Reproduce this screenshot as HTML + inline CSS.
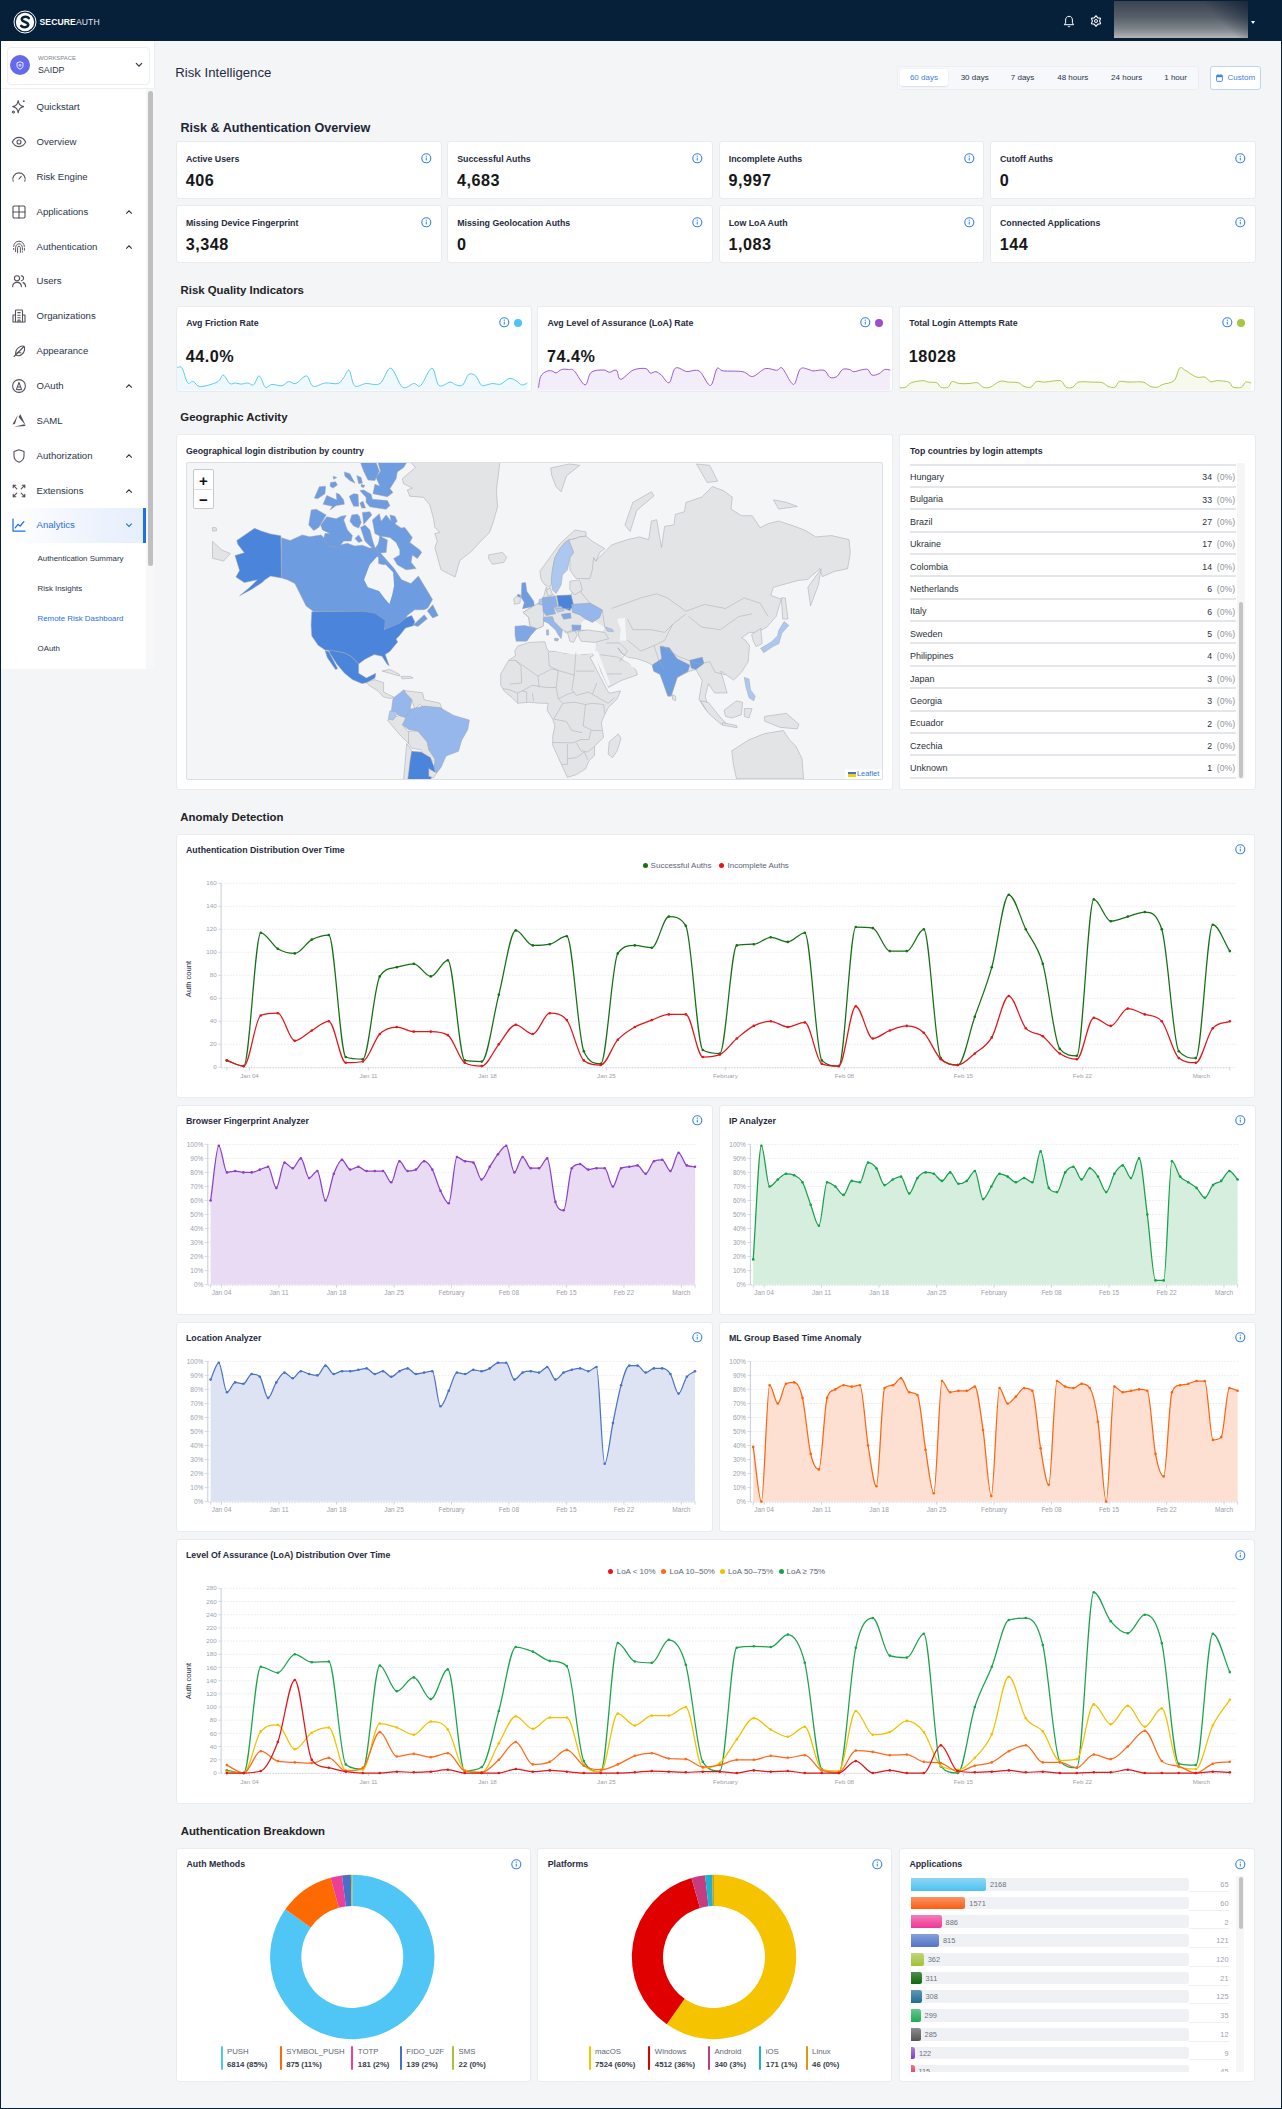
<!DOCTYPE html><html><head><meta charset="utf-8"><style>
*{box-sizing:border-box;margin:0;padding:0}
html,body{width:1282px;height:2109px;overflow:hidden}
body{font-family:"Liberation Sans",sans-serif;background:#06203a;position:relative;color:#1e2a3b}
.a{position:absolute;white-space:nowrap}
svg{position:absolute;overflow:visible}
.card{position:absolute;background:#fff;border:1px solid #e9ebee;border-radius:3px}
.ct{position:absolute;font-size:8.8px;font-weight:bold;color:#1f2b3d;line-height:10px;white-space:nowrap}
.cv{position:absolute;font-size:16.2px;font-weight:bold;color:#161719;line-height:16px;white-space:nowrap;letter-spacing:0.5px}
.sec{position:absolute;font-size:11.4px;font-weight:bold;color:#222325;line-height:14px;white-space:nowrap}
.nav{position:absolute;font-size:9.6px;color:#2a3547;line-height:11px;white-space:nowrap}
.sub{position:absolute;font-size:7.9px;color:#2a3547;line-height:10px;white-space:nowrap}
.ax{font-family:"Liberation Sans",sans-serif;font-size:6px;fill:#9ca1ad}
.lg{position:absolute;font-size:8px;color:#5b6472;line-height:9px;white-space:nowrap}
</style></head><body><div class="a" style="left:1px;top:41px;width:1280px;height:2067px;background:#f4f5f7"></div>
<svg style="left:13px;top:10px" width="24" height="24" viewBox="0 0 24 24">
<circle cx="12" cy="12" r="11" fill="none" stroke="#fff" stroke-width="1"/>
<circle cx="12" cy="12" r="9.2" fill="#fff"/>
<path d="M15.8 8.1 C14.6 6.3 10.6 6.2 9.2 8.0 C7.7 9.9 9.9 11.2 12.0 12.0 C14.2 12.8 16.2 14.2 14.8 16.0 C13.4 17.8 9.6 17.6 8.2 15.9" fill="none" stroke="#06203a" stroke-width="2.6" stroke-linecap="round"/>
</svg>
<div class="a" style="left:39.5px;top:16.5px;font-size:8.6px;line-height:11px;color:#fff;letter-spacing:0.1px"><b>SECURE</b><span style="color:#e6e9ee">AUTH</span></div>
<svg style="left:1063px;top:15px" width="12" height="13" viewBox="0 0 12 13"><path d="M6 1.3C3.9 1.3 2.6 2.9 2.6 5v2.9L1.3 9.7h9.4L9.4 7.9V5C9.4 2.9 8.1 1.3 6 1.3z" fill="none" stroke="#fff" stroke-width="1"/><path d="M4.9 11.1a1.2 1.2 0 0 0 2.2 0" fill="none" stroke="#fff" stroke-width="1"/></svg>
<svg style="left:1089.4px;top:14.2px" width="14" height="14" viewBox="0 0 14 14"><path d="M7.00 1.70 L8.80 3.88 L11.59 4.35 L10.60 7.00 L11.59 9.65 L8.80 10.12 L7.00 12.30 L5.20 10.12 L2.41 9.65 L3.40 7.00 L2.41 4.35 L5.20 3.88Z" fill="none" stroke="#fff" stroke-width="1.05" stroke-linejoin="round"/><circle cx="7" cy="7" r="1.5" fill="none" stroke="#fff" stroke-width="1"/></svg>
<div class="a" style="left:1114.2px;top:1.1px;width:133.7px;height:36.9px;background:linear-gradient(225deg,rgba(14,30,52,0.75) 0%,rgba(14,30,52,0) 28%),linear-gradient(180deg,#3a4351 0%,#58606a 45%,#7d838a 75%,#b4b6b8 100%)"></div>
<div class="a" style="left:1251px;top:20.5px;width:0;height:0;border-left:2.8px solid transparent;border-right:2.8px solid transparent;border-top:3px solid #fff"></div>
<div class="a" style="left:1px;top:41px;width:154px;height:628px;background:#fff;border-right:1px solid #eceef1"></div>
<div class="a" style="left:6.5px;top:46.5px;width:143px;height:38px;border:1px solid #eceef1;border-radius:4px;background:#fff"></div>
<div class="a" style="left:10px;top:55px;width:20px;height:20px;border-radius:50%;background:#6469ee"></div>
<svg style="left:16px;top:60.5px" width="8" height="9" viewBox="0 0 8 9"><path d="M4 0.8L7 1.9v2.5C7 6.2 5.7 7.6 4 8.2 2.3 7.6 1 6.2 1 4.4V1.9z" fill="none" stroke="#fff" stroke-width="0.9"/><circle cx="4" cy="4.3" r="1" fill="none" stroke="#fff" stroke-width="0.8"/></svg>
<div class="a" style="left:38px;top:54.6px;font-size:5.9px;line-height:7px;color:#7d8593">WORKSPACE</div>
<div class="a" style="left:38px;top:65px;font-size:8.8px;line-height:10px;color:#2a3547">SAIDP</div>
<svg style="left:135px;top:62px" width="8" height="6" viewBox="0 0 8 6"><path d="M1 1.2L4 4.2 7 1.2" fill="none" stroke="#2a3547" stroke-width="1.2"/></svg>
<div class="a" style="left:1px;top:88px;width:154px;height:1px;background:#eef0f2"></div>
<div class="a" style="left:145.5px;top:89px;width:9px;height:580px;background:#f7f7f8"></div>
<div class="a" style="left:147.8px;top:91px;width:5px;height:475px;border-radius:3px;background:#bfbfbf"></div>
<div class="a" style="left:8px;top:507.5px;width:137px;height:35px;background:linear-gradient(90deg,rgba(236,242,253,0) 0%,#eef3fd 60%,#e6eefc 100%)"></div>
<div class="a" style="left:143px;top:507.5px;width:2.5px;height:35px;background:#1f6fe5"></div>
<div class="nav" style="left:36.5px;top:100.7px;color:#2a3547">Quickstart</div>
<svg style="left:11.0px;top:98.5px" width="16" height="16" viewBox="0 0 16 16" fill="none" stroke="#50535a" stroke-width="1.10" stroke-linecap="round" stroke-linejoin="round"><path d="M7.2 1.6 C7.9 5.4 8.9 6.6 12.6 7.6 C8.9 8.6 7.9 9.8 7.2 13.8 C6.5 9.8 5.5 8.6 1.8 7.6 C5.5 6.6 6.5 5.4 7.2 1.6Z"/><circle cx="12.8" cy="2.2" r="0.9" fill="#50535a" stroke="none"/><circle cx="2.4" cy="13" r="1"/></svg>
<div class="nav" style="left:36.5px;top:135.7px;color:#2a3547">Overview</div>
<svg style="left:11.0px;top:133.5px" width="16" height="16" viewBox="0 0 16 16" fill="none" stroke="#50535a" stroke-width="1.10" stroke-linecap="round" stroke-linejoin="round"><path d="M1.3 8 C3 4.8 5.3 3.4 8 3.4 C10.7 3.4 13 4.8 14.7 8 C13 11.2 10.7 12.6 8 12.6 C5.3 12.6 3 11.2 1.3 8Z"/><circle cx="8" cy="8" r="2"/></svg>
<div class="nav" style="left:36.5px;top:170.7px;color:#2a3547">Risk Engine</div>
<svg style="left:11.0px;top:168.5px" width="16" height="16" viewBox="0 0 16 16" fill="none" stroke="#50535a" stroke-width="1.10" stroke-linecap="round" stroke-linejoin="round"><path d="M2.2 12.3 A6.2 6.2 0 1 1 13.8 12.3"/><path d="M8 10 L10.2 7.4"/></svg>
<div class="nav" style="left:36.5px;top:205.7px;color:#2a3547">Applications</div>
<svg style="left:11.0px;top:203.5px" width="16" height="16" viewBox="0 0 16 16" fill="none" stroke="#50535a" stroke-width="1.10" stroke-linecap="round" stroke-linejoin="round"><rect x="2" y="2" width="12" height="12" rx="1.2"/><path d="M8 2v12M2 8h12"/></svg>
<svg style="left:125px;top:208.5px" width="8" height="6" viewBox="0 0 8 6"><path d="M1.2 4.6L4 1.8 6.8 4.6" fill="none" stroke="#2a3547" stroke-width="1.1"/></svg>
<div class="nav" style="left:36.5px;top:240.7px;color:#2a3547">Authentication</div>
<svg style="left:11.0px;top:238.5px" width="16" height="16" viewBox="0 0 16 16" fill="none" stroke="#50535a" stroke-width="0.95" stroke-linecap="round" stroke-linejoin="round"><path d="M2.6 7.4 C3 4.2 5.2 2.2 8 2.2 C10.8 2.2 13 4.2 13.4 7.4"/><path d="M4.6 12.6 V8.6 C4.6 6.4 6.2 4.8 8 4.8 C9.8 4.8 11.4 6.4 11.4 8.6 V11"/><path d="M6.6 13.8 V8.6 C6.6 7.8 7.2 7.2 8 7.2 C8.8 7.2 9.4 7.8 9.4 8.6 V13.4"/><path d="M2.6 9.4 V10.4"/><path d="M13.4 9.2 V11.2"/><path d="M11.4 12.6 V13.2"/></svg>
<svg style="left:125px;top:243.5px" width="8" height="6" viewBox="0 0 8 6"><path d="M1.2 4.6L4 1.8 6.8 4.6" fill="none" stroke="#2a3547" stroke-width="1.1"/></svg>
<div class="nav" style="left:36.5px;top:275.2px;color:#2a3547">Users</div>
<svg style="left:11.0px;top:273.0px" width="16" height="16" viewBox="0 0 16 16" fill="none" stroke="#50535a" stroke-width="1.10" stroke-linecap="round" stroke-linejoin="round"><circle cx="6" cy="5.3" r="2.6"/><path d="M1.6 13.8 C1.6 10.8 3.6 9.4 6 9.4 C8.4 9.4 10.4 10.8 10.4 13.8"/><path d="M10.2 2.8 C11.6 3 12.6 4 12.6 5.3 C12.6 6.6 11.6 7.6 10.4 7.8"/><path d="M12 9.6 C13.6 10 14.6 11.4 14.6 13.8"/></svg>
<div class="nav" style="left:36.5px;top:310.2px;color:#2a3547">Organizations</div>
<svg style="left:11.0px;top:308.0px" width="16" height="16" viewBox="0 0 16 16" fill="none" stroke="#50535a" stroke-width="1.10" stroke-linecap="round" stroke-linejoin="round"><rect x="4.5" y="2" width="7" height="12" rx="0.8"/><path d="M4.5 7H2v7h2.5M11.5 7H14v7h-2.5"/><path d="M6.8 4.6h2.4M6.8 7.2h2.4M6.8 9.8h2.4M7 14v-2h2v2"/></svg>
<div class="nav" style="left:36.5px;top:345.2px;color:#2a3547">Appearance</div>
<svg style="left:11.0px;top:343.0px" width="16" height="16" viewBox="0 0 16 16" fill="none" stroke="#50535a" stroke-width="1.10" stroke-linecap="round" stroke-linejoin="round"><path d="M3 13.5 L13 3.5"/><path d="M12.8 3.2 C14.4 5.2 13.6 9 11.2 11 C9.2 12.8 6.4 13 4.6 11.6 C4.4 9 5.6 6 8 4.4 C9.8 3.2 11.6 2.8 12.8 3.2Z"/><path d="M6 9.8h3.8"/></svg>
<div class="nav" style="left:36.5px;top:379.7px;color:#2a3547">OAuth</div>
<svg style="left:11.0px;top:377.5px" width="16" height="16" viewBox="0 0 16 16" fill="none" stroke="#50535a" stroke-width="1.10" stroke-linecap="round" stroke-linejoin="round"><circle cx="8" cy="8" r="6.4"/><path d="M5.4 11.6 L8 4.4 L10.6 11.6M6.4 9h3.2"/><path d="M6.6 11.6h2.8"/></svg>
<svg style="left:125px;top:382.5px" width="8" height="6" viewBox="0 0 8 6"><path d="M1.2 4.6L4 1.8 6.8 4.6" fill="none" stroke="#2a3547" stroke-width="1.1"/></svg>
<div class="nav" style="left:36.5px;top:414.7px;color:#2a3547">SAML</div>
<svg style="left:11.0px;top:412.5px" width="16" height="16" viewBox="0 0 16 16" fill="none" stroke="#50535a" stroke-width="1.00" stroke-linecap="round" stroke-linejoin="round"><path d="M1.4 11.4 L3.9 11.0 L6.9 1.8 Z" fill="#50535a" stroke="none"/><path d="M9.4 1.3 L7.5 4.0 L14.7 12.4 Z" fill="#50535a" stroke="none"/><path d="M14.6 13.0 L13.3 11.2 L3.0 13.7 Z" fill="#50535a" stroke="none"/></svg>
<div class="nav" style="left:36.5px;top:449.7px;color:#2a3547">Authorization</div>
<svg style="left:11.0px;top:447.5px" width="16" height="16" viewBox="0 0 16 16" fill="none" stroke="#50535a" stroke-width="1.10" stroke-linecap="round" stroke-linejoin="round"><path d="M8 1.8 L13 3.6 V8 C13 11 10.8 13.2 8 14.2 C5.2 13.2 3 11 3 8 V3.6Z"/></svg>
<svg style="left:125px;top:452.5px" width="8" height="6" viewBox="0 0 8 6"><path d="M1.2 4.6L4 1.8 6.8 4.6" fill="none" stroke="#2a3547" stroke-width="1.1"/></svg>
<div class="nav" style="left:36.5px;top:484.7px;color:#2a3547">Extensions</div>
<svg style="left:11.0px;top:482.5px" width="16" height="16" viewBox="0 0 16 16" fill="none" stroke="#50535a" stroke-width="1.10" stroke-linecap="round" stroke-linejoin="round"><path d="M2.2 2.2 L5.8 5.8M2.2 2.2h2.6M2.2 2.2v2.6"/><path d="M13.8 2.2 L10.2 5.8M13.8 2.2h-2.6M13.8 2.2v2.6"/><path d="M2.2 13.8 L5.8 10.2M2.2 13.8h2.6M2.2 13.8v-2.6"/><path d="M13.8 13.8 L10.2 10.2M13.8 13.8h-2.6M13.8 13.8v-2.6"/></svg>
<svg style="left:125px;top:487.5px" width="8" height="6" viewBox="0 0 8 6"><path d="M1.2 4.6L4 1.8 6.8 4.6" fill="none" stroke="#2a3547" stroke-width="1.1"/></svg>
<div class="nav" style="left:36.5px;top:519.2px;color:#1f6fe5">Analytics</div>
<svg style="left:11.0px;top:517.0px" width="16" height="16" viewBox="0 0 16 16" fill="none" stroke="#1f6fe5" stroke-width="1.25" stroke-linecap="round" stroke-linejoin="round"><path d="M2 2v12h12"/><path d="M4.2 10.8 L7 7.4 L9.2 9 L12.8 4.6"/></svg>
<svg style="left:125px;top:522.0px" width="8" height="6" viewBox="0 0 8 6"><path d="M1.2 1.6L4 4.4 6.8 1.6" fill="none" stroke="#1f6fe5" stroke-width="1.1"/></svg>
<div class="sub" style="left:37.5px;top:553.8px;color:#2a3547">Authentication Summary</div>
<div class="sub" style="left:37.5px;top:583.7px;color:#2a3547">Risk Insights</div>
<div class="sub" style="left:37.5px;top:613.6px;color:#1f6fe5">Remote Risk Dashboard</div>
<div class="sub" style="left:37.5px;top:643.5px;color:#2a3547">OAuth</div>
<div class="a" style="left:175.3px;top:65.8px;font-size:13.2px;line-height:14px;color:#1e2b3c">Risk Intelligence</div>
<div class="a" style="left:897px;top:66px;width:302px;height:23.5px;background:#f6f8fb;border:1px solid #eceef2;border-radius:3px"></div>
<div class="a" style="left:899.5px;top:69px;width:48.5px;height:17px;background:#fff;border-radius:3px;box-shadow:0 0.5px 1.5px rgba(30,50,90,0.12)"></div>
<div class="a" style="left:923.9px;top:72.5px;width:60px;margin-left:-30px;text-align:center;font-size:8px;line-height:9px;color:#3b82e0">60 days</div>
<div class="a" style="left:974.7px;top:72.5px;width:60px;margin-left:-30px;text-align:center;font-size:8px;line-height:9px;color:#2a3547">30 days</div>
<div class="a" style="left:1022.6px;top:72.5px;width:60px;margin-left:-30px;text-align:center;font-size:8px;line-height:9px;color:#2a3547">7 days</div>
<div class="a" style="left:1072.8px;top:72.5px;width:60px;margin-left:-30px;text-align:center;font-size:8px;line-height:9px;color:#2a3547">48 hours</div>
<div class="a" style="left:1126.7px;top:72.5px;width:60px;margin-left:-30px;text-align:center;font-size:8px;line-height:9px;color:#2a3547">24 hours</div>
<div class="a" style="left:1175.6px;top:72.5px;width:60px;margin-left:-30px;text-align:center;font-size:8px;line-height:9px;color:#2a3547">1 hour</div>
<div class="a" style="left:1209.5px;top:66px;width:51.5px;height:23.5px;background:#fff;border:1px solid #bcd5f6;border-radius:3px"></div>
<svg style="left:1215.5px;top:73.5px" width="7" height="8" viewBox="0 0 7 8"><rect x="0.6" y="1.2" width="5.8" height="6.2" rx="0.8" fill="none" stroke="#3b82e0" stroke-width="0.9"/><rect x="0.6" y="1.2" width="5.8" height="2" fill="#3b82e0"/><path d="M2 0.3v1.5M5 0.3v1.5" stroke="#3b82e0" stroke-width="0.8"/></svg>
<div class="a" style="left:1227.5px;top:72.5px;font-size:8px;line-height:9px;color:#3b82e0">Custom</div>
<div class="sec" style="left:180.5px;top:121px;font-size:12.6px;color:#1c2536">Risk &amp; Authentication Overview</div>
<div class="card" style="left:176.0px;top:141.2px;width:265.5px;height:58.2px"></div>
<div class="ct" style="left:186.0px;top:154.0px">Active Users</div>
<div class="cv" style="left:185.8px;top:171.7px">406</div>
<svg style="left:421.0px;top:153.1px" width="10.6" height="10.6" viewBox="0 0 12 12"><circle cx="6" cy="6" r="5.1" fill="none" stroke="#3b86e8" stroke-width="1.3"/><rect x="5.4" y="5.2" width="1.2" height="3.4" rx="0.5" fill="#3b86e8"/><circle cx="6" cy="3.6" r="0.75" fill="#3b86e8"/></svg>
<div class="card" style="left:447.2px;top:141.2px;width:265.5px;height:58.2px"></div>
<div class="ct" style="left:457.2px;top:154.0px">Successful Auths</div>
<div class="cv" style="left:457.0px;top:171.7px">4,683</div>
<svg style="left:692.2px;top:153.1px" width="10.6" height="10.6" viewBox="0 0 12 12"><circle cx="6" cy="6" r="5.1" fill="none" stroke="#3b86e8" stroke-width="1.3"/><rect x="5.4" y="5.2" width="1.2" height="3.4" rx="0.5" fill="#3b86e8"/><circle cx="6" cy="3.6" r="0.75" fill="#3b86e8"/></svg>
<div class="card" style="left:718.7px;top:141.2px;width:265.5px;height:58.2px"></div>
<div class="ct" style="left:728.7px;top:154.0px">Incomplete Auths</div>
<div class="cv" style="left:728.5px;top:171.7px">9,997</div>
<svg style="left:963.7px;top:153.1px" width="10.6" height="10.6" viewBox="0 0 12 12"><circle cx="6" cy="6" r="5.1" fill="none" stroke="#3b86e8" stroke-width="1.3"/><rect x="5.4" y="5.2" width="1.2" height="3.4" rx="0.5" fill="#3b86e8"/><circle cx="6" cy="3.6" r="0.75" fill="#3b86e8"/></svg>
<div class="card" style="left:990.0px;top:141.2px;width:265.5px;height:58.2px"></div>
<div class="ct" style="left:1000.0px;top:154.0px">Cutoff Auths</div>
<div class="cv" style="left:999.8px;top:171.7px">0</div>
<svg style="left:1235.0px;top:153.1px" width="10.6" height="10.6" viewBox="0 0 12 12"><circle cx="6" cy="6" r="5.1" fill="none" stroke="#3b86e8" stroke-width="1.3"/><rect x="5.4" y="5.2" width="1.2" height="3.4" rx="0.5" fill="#3b86e8"/><circle cx="6" cy="3.6" r="0.75" fill="#3b86e8"/></svg>
<div class="card" style="left:176.0px;top:205.2px;width:265.5px;height:58.2px"></div>
<div class="ct" style="left:186.0px;top:218.0px">Missing Device Fingerprint</div>
<div class="cv" style="left:185.8px;top:235.7px">3,348</div>
<svg style="left:421.0px;top:217.1px" width="10.6" height="10.6" viewBox="0 0 12 12"><circle cx="6" cy="6" r="5.1" fill="none" stroke="#3b86e8" stroke-width="1.3"/><rect x="5.4" y="5.2" width="1.2" height="3.4" rx="0.5" fill="#3b86e8"/><circle cx="6" cy="3.6" r="0.75" fill="#3b86e8"/></svg>
<div class="card" style="left:447.2px;top:205.2px;width:265.5px;height:58.2px"></div>
<div class="ct" style="left:457.2px;top:218.0px">Missing Geolocation Auths</div>
<div class="cv" style="left:457.0px;top:235.7px">0</div>
<svg style="left:692.2px;top:217.1px" width="10.6" height="10.6" viewBox="0 0 12 12"><circle cx="6" cy="6" r="5.1" fill="none" stroke="#3b86e8" stroke-width="1.3"/><rect x="5.4" y="5.2" width="1.2" height="3.4" rx="0.5" fill="#3b86e8"/><circle cx="6" cy="3.6" r="0.75" fill="#3b86e8"/></svg>
<div class="card" style="left:718.7px;top:205.2px;width:265.5px;height:58.2px"></div>
<div class="ct" style="left:728.7px;top:218.0px">Low LoA Auth</div>
<div class="cv" style="left:728.5px;top:235.7px">1,083</div>
<svg style="left:963.7px;top:217.1px" width="10.6" height="10.6" viewBox="0 0 12 12"><circle cx="6" cy="6" r="5.1" fill="none" stroke="#3b86e8" stroke-width="1.3"/><rect x="5.4" y="5.2" width="1.2" height="3.4" rx="0.5" fill="#3b86e8"/><circle cx="6" cy="3.6" r="0.75" fill="#3b86e8"/></svg>
<div class="card" style="left:990.0px;top:205.2px;width:265.5px;height:58.2px"></div>
<div class="ct" style="left:1000.0px;top:218.0px">Connected Applications</div>
<div class="cv" style="left:999.8px;top:235.7px">144</div>
<svg style="left:1235.0px;top:217.1px" width="10.6" height="10.6" viewBox="0 0 12 12"><circle cx="6" cy="6" r="5.1" fill="none" stroke="#3b86e8" stroke-width="1.3"/><rect x="5.4" y="5.2" width="1.2" height="3.4" rx="0.5" fill="#3b86e8"/><circle cx="6" cy="3.6" r="0.75" fill="#3b86e8"/></svg>
<div class="sec" style="left:180.5px;top:282.8px">Risk Quality Indicators</div>
<div class="card" style="left:176.0px;top:305.8px;width:356.2px;height:86.0px"></div>
<div class="ct" style="left:186.2px;top:318.2px">Avg Friction Rate</div>
<div class="cv" style="left:185.8px;top:347.8px">44.0%</div>
<svg style="left:498.7px;top:317.3px" width="10.6" height="10.6" viewBox="0 0 12 12"><circle cx="6" cy="6" r="5.1" fill="none" stroke="#3b86e8" stroke-width="1.3"/><rect x="5.4" y="5.2" width="1.2" height="3.4" rx="0.5" fill="#3b86e8"/><circle cx="6" cy="3.6" r="0.75" fill="#3b86e8"/></svg>
<div class="a" style="left:513.8px;top:319px;width:7.8px;height:7.8px;border-radius:50%;background:#4fc3f7"></div>
<svg style="left:0;top:0" width="1282" height="2109"><path d="M177.0 367.5 C177.8 367.6 180.2 365.6 182.0 368.1 C183.8 370.6 185.8 380.4 187.6 382.7 C189.5 384.9 191.1 380.9 193.3 381.6 C195.4 382.2 196.3 386.5 200.3 386.6 C204.3 386.7 213.3 384.0 217.1 382.1 C221.0 380.2 221.2 374.9 223.3 375.1 C225.4 375.3 227.7 382.2 229.8 383.5 C231.8 384.8 233.5 382.9 235.4 383.0 C237.2 383.1 238.9 384.1 241.0 384.1 C243.1 384.1 245.9 382.8 248.0 383.0 C250.1 383.1 251.8 386.1 253.6 384.9 C255.5 383.8 257.3 375.6 259.2 375.9 C261.2 376.3 263.3 385.8 265.4 387.2 C267.5 388.6 269.2 384.6 271.9 384.4 C274.6 384.1 278.9 386.2 281.7 385.8 C284.5 385.3 286.4 381.9 288.7 381.6 C291.1 381.2 292.8 384.5 295.8 383.5 C298.7 382.6 303.5 375.5 306.4 375.9 C309.3 376.4 310.0 385.2 313.2 386.3 C316.3 387.5 321.1 383.4 325.2 383.0 C329.4 382.5 334.8 384.4 337.9 383.5 C340.9 382.7 341.6 380.1 343.5 377.9 C345.4 375.7 347.2 369.0 349.1 370.3 C351.0 371.6 351.9 383.6 354.7 385.8 C357.5 388.0 361.7 383.9 366.0 383.5 C370.2 383.2 375.9 386.1 380.0 383.5 C384.1 381.0 386.9 367.5 390.7 368.1 C394.4 368.7 398.6 384.6 402.5 387.2 C406.3 389.8 410.7 383.8 413.7 383.5 C416.7 383.2 417.7 388.1 420.7 385.5 C423.8 382.9 428.9 368.1 432.0 368.1 C435.0 368.1 435.9 383.2 439.0 385.5 C442.0 387.8 447.4 382.2 450.2 382.1 C453.0 382.0 453.7 384.5 455.8 384.9 C457.9 385.4 460.7 386.7 462.8 384.9 C464.9 383.2 466.4 376.1 468.5 374.5 C470.6 373.0 473.4 373.9 475.5 375.7 C477.6 377.4 479.2 383.4 481.1 384.9 C483.0 386.5 484.8 385.2 486.7 384.9 C488.6 384.7 490.0 383.7 492.3 383.5 C494.7 383.4 497.9 384.9 500.8 384.1 C503.6 383.2 506.6 379.0 509.2 378.5 C511.7 377.9 514.1 379.6 516.2 380.7 C518.3 381.8 519.9 384.6 521.8 384.9 C523.7 385.3 526.5 383.3 527.4 383.0 L527.4 390.5 L177.0 390.5Z" fill="#eef8fd"/><path d="M177.0 367.5 C177.8 367.6 180.2 365.6 182.0 368.1 C183.8 370.6 185.8 380.4 187.6 382.7 C189.5 384.9 191.1 380.9 193.3 381.6 C195.4 382.2 196.3 386.5 200.3 386.6 C204.3 386.7 213.3 384.0 217.1 382.1 C221.0 380.2 221.2 374.9 223.3 375.1 C225.4 375.3 227.7 382.2 229.8 383.5 C231.8 384.8 233.5 382.9 235.4 383.0 C237.2 383.1 238.9 384.1 241.0 384.1 C243.1 384.1 245.9 382.8 248.0 383.0 C250.1 383.1 251.8 386.1 253.6 384.9 C255.5 383.8 257.3 375.6 259.2 375.9 C261.2 376.3 263.3 385.8 265.4 387.2 C267.5 388.6 269.2 384.6 271.9 384.4 C274.6 384.1 278.9 386.2 281.7 385.8 C284.5 385.3 286.4 381.9 288.7 381.6 C291.1 381.2 292.8 384.5 295.8 383.5 C298.7 382.6 303.5 375.5 306.4 375.9 C309.3 376.4 310.0 385.2 313.2 386.3 C316.3 387.5 321.1 383.4 325.2 383.0 C329.4 382.5 334.8 384.4 337.9 383.5 C340.9 382.7 341.6 380.1 343.5 377.9 C345.4 375.7 347.2 369.0 349.1 370.3 C351.0 371.6 351.9 383.6 354.7 385.8 C357.5 388.0 361.7 383.9 366.0 383.5 C370.2 383.2 375.9 386.1 380.0 383.5 C384.1 381.0 386.9 367.5 390.7 368.1 C394.4 368.7 398.6 384.6 402.5 387.2 C406.3 389.8 410.7 383.8 413.7 383.5 C416.7 383.2 417.7 388.1 420.7 385.5 C423.8 382.9 428.9 368.1 432.0 368.1 C435.0 368.1 435.9 383.2 439.0 385.5 C442.0 387.8 447.4 382.2 450.2 382.1 C453.0 382.0 453.7 384.5 455.8 384.9 C457.9 385.4 460.7 386.7 462.8 384.9 C464.9 383.2 466.4 376.1 468.5 374.5 C470.6 373.0 473.4 373.9 475.5 375.7 C477.6 377.4 479.2 383.4 481.1 384.9 C483.0 386.5 484.8 385.2 486.7 384.9 C488.6 384.7 490.0 383.7 492.3 383.5 C494.7 383.4 497.9 384.9 500.8 384.1 C503.6 383.2 506.6 379.0 509.2 378.5 C511.7 377.9 514.1 379.6 516.2 380.7 C518.3 381.8 519.9 384.6 521.8 384.9 C523.7 385.3 526.5 383.3 527.4 383.0" fill="none" stroke="#5ecbf1" stroke-width="1"/></svg>
<div class="card" style="left:537.2px;top:305.8px;width:356.2px;height:86.0px"></div>
<div class="ct" style="left:547.4px;top:318.2px">Avg Level of Assurance (LoA) Rate</div>
<div class="cv" style="left:547.0px;top:347.8px">74.4%</div>
<svg style="left:859.9px;top:317.3px" width="10.6" height="10.6" viewBox="0 0 12 12"><circle cx="6" cy="6" r="5.1" fill="none" stroke="#3b86e8" stroke-width="1.3"/><rect x="5.4" y="5.2" width="1.2" height="3.4" rx="0.5" fill="#3b86e8"/><circle cx="6" cy="3.6" r="0.75" fill="#3b86e8"/></svg>
<div class="a" style="left:875.0px;top:319px;width:7.8px;height:7.8px;border-radius:50%;background:#9b4fd0"></div>
<svg style="left:0;top:0" width="1282" height="2109"><path d="M538.5 387.7 C538.9 385.9 539.3 379.2 540.6 376.5 C541.9 373.8 544.4 372.4 546.2 371.5 C548.1 370.5 550.2 370.7 551.8 370.9 C553.5 371.1 554.4 373.1 556.1 372.9 C557.7 372.6 559.6 370.0 561.7 369.5 C563.8 368.9 566.6 369.3 568.7 369.5 C570.8 369.7 571.6 368.3 574.3 370.9 C577.0 373.5 582.2 384.7 585.0 384.9 C587.8 385.2 588.0 374.8 591.2 372.3 C594.3 369.8 600.8 370.0 603.8 370.0 C606.8 370.0 607.3 372.2 609.4 372.3 C611.5 372.3 614.6 369.2 616.4 370.3 C618.3 371.5 617.8 379.4 620.7 379.3 C623.5 379.3 629.1 371.8 633.3 370.0 C637.5 368.3 643.1 368.1 645.9 368.6 C648.7 369.2 648.5 372.6 650.1 373.1 C651.8 373.7 653.9 371.4 655.8 371.7 C657.6 372.1 659.1 373.3 661.4 375.1 C663.6 376.9 666.9 383.9 669.2 382.7 C671.6 381.5 672.5 370.0 675.4 368.1 C678.3 366.2 683.4 371.1 686.6 371.5 C689.9 371.8 692.7 370.2 695.1 370.3 C697.4 370.5 698.1 369.8 700.7 372.3 C703.3 374.8 707.8 386.1 710.5 385.5 C713.2 384.9 714.9 371.1 717.0 368.6 C719.1 366.2 718.8 370.4 723.1 370.9 C727.5 371.4 737.9 370.8 742.8 371.7 C747.7 372.7 748.9 377.0 752.6 376.5 C756.4 376.0 761.3 369.7 765.3 368.6 C769.3 367.6 773.7 370.4 776.5 370.3 C779.3 370.2 779.8 366.2 782.1 368.1 C784.5 370.0 788.4 379.0 790.5 381.6 C792.7 384.1 793.1 385.6 794.8 383.5 C796.4 381.4 798.0 371.3 800.4 368.9 C802.7 366.6 806.7 369.2 808.8 369.5 C810.9 369.8 810.4 370.7 813.0 370.9 C815.6 371.0 821.4 369.3 824.2 370.3 C827.1 371.4 827.8 376.3 829.9 377.3 C832.0 378.4 834.8 377.8 836.9 376.5 C839.0 375.2 840.4 370.7 842.5 369.5 C844.6 368.3 847.6 369.1 849.5 369.5 C851.4 369.9 851.9 371.6 853.7 371.7 C855.6 371.8 858.4 370.4 860.8 370.0 C863.1 369.7 865.9 368.6 867.8 369.5 C869.6 370.3 870.1 374.4 872.0 375.1 C873.9 375.8 876.9 374.6 879.0 373.7 C881.1 372.8 882.7 370.1 884.6 369.5 C886.5 368.9 889.3 370.0 890.2 370.0 L890.2 390.5 L538.5 390.5Z" fill="#f3ecf9"/><path d="M538.5 387.7 C538.9 385.9 539.3 379.2 540.6 376.5 C541.9 373.8 544.4 372.4 546.2 371.5 C548.1 370.5 550.2 370.7 551.8 370.9 C553.5 371.1 554.4 373.1 556.1 372.9 C557.7 372.6 559.6 370.0 561.7 369.5 C563.8 368.9 566.6 369.3 568.7 369.5 C570.8 369.7 571.6 368.3 574.3 370.9 C577.0 373.5 582.2 384.7 585.0 384.9 C587.8 385.2 588.0 374.8 591.2 372.3 C594.3 369.8 600.8 370.0 603.8 370.0 C606.8 370.0 607.3 372.2 609.4 372.3 C611.5 372.3 614.6 369.2 616.4 370.3 C618.3 371.5 617.8 379.4 620.7 379.3 C623.5 379.3 629.1 371.8 633.3 370.0 C637.5 368.3 643.1 368.1 645.9 368.6 C648.7 369.2 648.5 372.6 650.1 373.1 C651.8 373.7 653.9 371.4 655.8 371.7 C657.6 372.1 659.1 373.3 661.4 375.1 C663.6 376.9 666.9 383.9 669.2 382.7 C671.6 381.5 672.5 370.0 675.4 368.1 C678.3 366.2 683.4 371.1 686.6 371.5 C689.9 371.8 692.7 370.2 695.1 370.3 C697.4 370.5 698.1 369.8 700.7 372.3 C703.3 374.8 707.8 386.1 710.5 385.5 C713.2 384.9 714.9 371.1 717.0 368.6 C719.1 366.2 718.8 370.4 723.1 370.9 C727.5 371.4 737.9 370.8 742.8 371.7 C747.7 372.7 748.9 377.0 752.6 376.5 C756.4 376.0 761.3 369.7 765.3 368.6 C769.3 367.6 773.7 370.4 776.5 370.3 C779.3 370.2 779.8 366.2 782.1 368.1 C784.5 370.0 788.4 379.0 790.5 381.6 C792.7 384.1 793.1 385.6 794.8 383.5 C796.4 381.4 798.0 371.3 800.4 368.9 C802.7 366.6 806.7 369.2 808.8 369.5 C810.9 369.8 810.4 370.7 813.0 370.9 C815.6 371.0 821.4 369.3 824.2 370.3 C827.1 371.4 827.8 376.3 829.9 377.3 C832.0 378.4 834.8 377.8 836.9 376.5 C839.0 375.2 840.4 370.7 842.5 369.5 C844.6 368.3 847.6 369.1 849.5 369.5 C851.4 369.9 851.9 371.6 853.7 371.7 C855.6 371.8 858.4 370.4 860.8 370.0 C863.1 369.7 865.9 368.6 867.8 369.5 C869.6 370.3 870.1 374.4 872.0 375.1 C873.9 375.8 876.9 374.6 879.0 373.7 C881.1 372.8 882.7 370.1 884.6 369.5 C886.5 368.9 889.3 370.0 890.2 370.0" fill="none" stroke="#9a5ad0" stroke-width="1"/></svg>
<div class="card" style="left:899.0px;top:305.8px;width:356.2px;height:86.0px"></div>
<div class="ct" style="left:909.2px;top:318.2px">Total Login Attempts Rate</div>
<div class="cv" style="left:908.8px;top:347.8px">18028</div>
<svg style="left:1221.7px;top:317.3px" width="10.6" height="10.6" viewBox="0 0 12 12"><circle cx="6" cy="6" r="5.1" fill="none" stroke="#3b86e8" stroke-width="1.3"/><rect x="5.4" y="5.2" width="1.2" height="3.4" rx="0.5" fill="#3b86e8"/><circle cx="6" cy="3.6" r="0.75" fill="#3b86e8"/></svg>
<div class="a" style="left:1236.8px;top:319px;width:7.8px;height:7.8px;border-radius:50%;background:#a8c545"></div>
<svg style="left:0;top:0" width="1282" height="2109"><path d="M900.0 387.7 C901.0 387.6 903.9 388.0 905.8 387.2 C907.7 386.3 908.6 383.8 911.4 382.7 C914.3 381.6 919.9 380.8 922.7 380.7 C925.5 380.6 926.0 381.8 928.3 382.1 C930.6 382.5 934.6 381.8 936.7 382.7 C938.8 383.5 939.1 386.4 940.9 387.2 C942.8 387.9 946.1 388.1 948.0 387.2 C949.8 386.2 950.3 382.2 952.2 381.6 C954.0 381.0 956.4 383.2 959.2 383.5 C962.0 383.9 966.0 383.7 969.0 383.5 C972.1 383.4 975.1 382.1 977.4 382.7 C979.8 383.3 980.9 386.4 983.1 387.2 C985.2 387.9 987.3 388.2 990.1 387.2 C992.9 386.2 996.9 382.1 999.9 381.3 C1002.9 380.4 1005.3 381.9 1008.3 382.1 C1011.4 382.4 1015.6 382.0 1018.2 382.7 C1020.7 383.4 1021.7 385.6 1023.8 386.3 C1025.9 387.1 1028.7 388.0 1030.8 387.2 C1032.9 386.4 1034.1 382.4 1036.4 381.6 C1038.8 380.7 1040.9 382.3 1044.8 382.1 C1048.8 382.0 1056.8 379.9 1060.3 380.7 C1063.8 381.6 1063.8 386.1 1065.9 387.2 C1068.0 388.3 1070.8 388.0 1072.9 387.2 C1075.0 386.3 1075.3 383.0 1078.5 382.1 C1081.8 381.3 1088.6 382.0 1092.6 382.1 C1096.6 382.2 1099.8 382.0 1102.4 382.7 C1105.0 383.4 1105.9 385.6 1108.0 386.3 C1110.1 387.1 1113.2 388.0 1115.0 387.2 C1116.9 386.4 1116.9 382.4 1119.3 381.6 C1121.6 380.7 1125.1 382.0 1129.1 382.1 C1133.1 382.2 1139.6 381.4 1143.1 382.1 C1146.6 382.8 1147.8 385.5 1150.1 386.3 C1152.5 387.2 1155.1 387.5 1157.2 387.2 C1159.3 386.9 1160.0 385.4 1162.8 384.4 C1165.6 383.3 1171.2 383.4 1174.0 380.7 C1176.8 378.0 1177.8 369.8 1179.6 368.1 C1181.5 366.4 1182.4 368.8 1185.2 370.3 C1188.1 371.8 1193.2 375.9 1196.5 377.1 C1199.8 378.2 1202.6 376.3 1204.9 377.1 C1207.2 377.8 1208.4 381.0 1210.5 381.6 C1212.6 382.2 1214.5 380.6 1217.5 380.7 C1220.6 380.8 1226.2 381.0 1228.8 382.1 C1231.3 383.2 1230.9 386.3 1233.0 387.2 C1235.1 388.0 1239.3 388.0 1241.4 387.2 C1243.5 386.3 1244.0 382.8 1245.6 382.1 C1247.3 381.4 1250.3 382.8 1251.2 383.0 L1251.2 390.5 L900.0 390.5Z" fill="#f6f9ec"/><path d="M900.0 387.7 C901.0 387.6 903.9 388.0 905.8 387.2 C907.7 386.3 908.6 383.8 911.4 382.7 C914.3 381.6 919.9 380.8 922.7 380.7 C925.5 380.6 926.0 381.8 928.3 382.1 C930.6 382.5 934.6 381.8 936.7 382.7 C938.8 383.5 939.1 386.4 940.9 387.2 C942.8 387.9 946.1 388.1 948.0 387.2 C949.8 386.2 950.3 382.2 952.2 381.6 C954.0 381.0 956.4 383.2 959.2 383.5 C962.0 383.9 966.0 383.7 969.0 383.5 C972.1 383.4 975.1 382.1 977.4 382.7 C979.8 383.3 980.9 386.4 983.1 387.2 C985.2 387.9 987.3 388.2 990.1 387.2 C992.9 386.2 996.9 382.1 999.9 381.3 C1002.9 380.4 1005.3 381.9 1008.3 382.1 C1011.4 382.4 1015.6 382.0 1018.2 382.7 C1020.7 383.4 1021.7 385.6 1023.8 386.3 C1025.9 387.1 1028.7 388.0 1030.8 387.2 C1032.9 386.4 1034.1 382.4 1036.4 381.6 C1038.8 380.7 1040.9 382.3 1044.8 382.1 C1048.8 382.0 1056.8 379.9 1060.3 380.7 C1063.8 381.6 1063.8 386.1 1065.9 387.2 C1068.0 388.3 1070.8 388.0 1072.9 387.2 C1075.0 386.3 1075.3 383.0 1078.5 382.1 C1081.8 381.3 1088.6 382.0 1092.6 382.1 C1096.6 382.2 1099.8 382.0 1102.4 382.7 C1105.0 383.4 1105.9 385.6 1108.0 386.3 C1110.1 387.1 1113.2 388.0 1115.0 387.2 C1116.9 386.4 1116.9 382.4 1119.3 381.6 C1121.6 380.7 1125.1 382.0 1129.1 382.1 C1133.1 382.2 1139.6 381.4 1143.1 382.1 C1146.6 382.8 1147.8 385.5 1150.1 386.3 C1152.5 387.2 1155.1 387.5 1157.2 387.2 C1159.3 386.9 1160.0 385.4 1162.8 384.4 C1165.6 383.3 1171.2 383.4 1174.0 380.7 C1176.8 378.0 1177.8 369.8 1179.6 368.1 C1181.5 366.4 1182.4 368.8 1185.2 370.3 C1188.1 371.8 1193.2 375.9 1196.5 377.1 C1199.8 378.2 1202.6 376.3 1204.9 377.1 C1207.2 377.8 1208.4 381.0 1210.5 381.6 C1212.6 382.2 1214.5 380.6 1217.5 380.7 C1220.6 380.8 1226.2 381.0 1228.8 382.1 C1231.3 383.2 1230.9 386.3 1233.0 387.2 C1235.1 388.0 1239.3 388.0 1241.4 387.2 C1243.5 386.3 1244.0 382.8 1245.6 382.1 C1247.3 381.4 1250.3 382.8 1251.2 383.0" fill="none" stroke="#aac852" stroke-width="1"/></svg>
<div class="sec" style="left:180.3px;top:410.3px">Geographic Activity</div>
<div class="card" style="left:176.0px;top:434.3px;width:717.2px;height:355.8px"></div>
<div class="ct" style="left:186px;top:445.7px">Geographical login distribution by country</div>
<div class="a" style="left:186px;top:462.4px;width:696.6px;height:317.6px;background:#f4f5f7;border:1px solid #dcdfe4;border-radius:2px;overflow:hidden"><svg style="left:-187px;top:-463.4px" width="1282" height="2109"><path d="M499.9 462.3 L496.4 490.4 L497.6 506.8 L492.9 523.2 L489.4 532.5 L480.0 541.9 L471.5 551.3 L459.8 560.6 L455.1 577.0 L445.8 572.3 L441.0 569.8 L434.8 547.4 L437.3 541.1 L434.8 533.6 L439.8 532.4 L434.8 527.4 L433.5 518.7 L429.8 504.9 L423.6 497.4 L409.8 496.2 L407.3 490.0 L412.3 488.1 L403.6 483.7 L402.3 478.7 L415.4 467.5 L411.1 462.5Z" fill="#e3e4e6" stroke="#a2a5aa" stroke-width="0.5" stroke-linejoin="round"/><path d="M212.5 541.4 L221.8 549.9 L230.3 553.6 L223.7 561.1 L212.5 558.3Z" fill="#e3e4e6" stroke="#a2a5aa" stroke-width="0.5" stroke-linejoin="round"/><path d="M212.5 527.4 L216.2 527.8 L216.6 530.8 L212.5 531.1Z" fill="#e3e4e6" stroke="#a2a5aa" stroke-width="0.5" stroke-linejoin="round"/><path d="M236.8 540.5 L254.6 528.3 L261.2 531.1 L270.5 533.9 L280.8 535.8 L281.4 577.9 L270.5 576.1 L264.9 579.8 L262.1 582.6 L251.8 589.2 L239.6 595.7 L249.9 587.3 L257.4 579.8 L244.3 582.6 L235.9 577.0 L239.6 570.5 L235.0 555.5 L244.3 552.7 L237.8 544.2Z" fill="#4b84db" stroke="#a2a5aa" stroke-width="0.5" stroke-linejoin="round"/><path d="M281.4 537.7 L290.2 540.5 L302.3 534.9 L309.8 536.8 L321.1 534.9 L324.8 538.6 L329.5 542.4 L329.5 546.1 L338.9 545.2 L347.3 543.3 L354.8 546.1 L362.3 545.2 L369.7 548.0 L375.4 548.0 L379.1 542.4 L381.0 553.6 L394.1 568.6 L401.6 579.8 L410.9 583.6 L418.4 576.1 L432.5 599.5 L427.8 607.9 L424.0 609.8 L414.7 609.8 L407.2 615.4 L403.4 624.7 L384.7 629.4 L381.0 621.0 L373.5 615.4 L364.1 611.6 L313.6 611.6 L306.1 606.0 L300.5 594.8 L294.9 583.6 L287.4 579.8 L281.4 577.9Z" fill="#6d9ce1" stroke="#a2a5aa" stroke-width="0.5" stroke-linejoin="round"/><path d="M369.7 564.8 L377.2 556.4 L385.7 564.8 L393.1 572.3 L394.1 585.4 L392.2 594.8 L389.4 604.1 L384.7 598.5 L379.1 591.0 L367.9 587.3 L364.1 579.8Z" fill="#f4f5f7"/><path d="M360.5 462.5 L376.1 462.5 L379.3 471.2 L374.9 480.6 L368.0 480.0 L363.7 471.2Z" fill="#6d9ce1" stroke="#a2a5aa" stroke-width="0.5" stroke-linejoin="round"/><path d="M378.0 462.5 L406.7 462.5 L403.6 467.5 L397.3 471.9 L396.1 478.7 L389.9 488.7 L393.0 492.4 L387.4 496.8 L373.0 493.7 L374.9 484.3 L379.9 486.2 L376.1 477.5 L380.5 471.2Z" fill="#6d9ce1" stroke="#a2a5aa" stroke-width="0.5" stroke-linejoin="round"/><path d="M344.3 471.9 L349.9 473.7 L354.9 483.1 L349.9 480.6 L344.9 476.2Z" fill="#6d9ce1" stroke="#a2a5aa" stroke-width="0.5" stroke-linejoin="round"/><path d="M356.8 475.6 L361.2 477.5 L362.4 483.1 L358.7 483.7Z" fill="#6d9ce1" stroke="#a2a5aa" stroke-width="0.5" stroke-linejoin="round"/><path d="M361.2 484.3 L364.9 485.6 L363.7 487.5 L361.2 486.8Z" fill="#6d9ce1" stroke="#a2a5aa" stroke-width="0.5" stroke-linejoin="round"/><path d="M333.1 476.2 L336.8 477.5 L333.7 479.3Z" fill="#6d9ce1" stroke="#a2a5aa" stroke-width="0.5" stroke-linejoin="round"/><path d="M330.6 482.5 L335.6 481.8 L337.4 485.0 L333.1 488.1 L330.0 486.2Z" fill="#6d9ce1" stroke="#a2a5aa" stroke-width="0.5" stroke-linejoin="round"/><path d="M314.4 498.1 L319.3 486.8 L325.6 486.2 L325.0 493.7 L317.5 498.7Z" fill="#6d9ce1" stroke="#a2a5aa" stroke-width="0.5" stroke-linejoin="round"/><path d="M323.1 504.3 L326.8 495.6 L336.8 499.9 L336.2 493.1 L339.3 494.3 L343.7 499.9 L344.3 504.3 L336.2 505.6 L330.0 509.9 L332.4 506.2Z" fill="#6d9ce1" stroke="#a2a5aa" stroke-width="0.5" stroke-linejoin="round"/><path d="M349.3 496.2 L353.7 493.7 L358.0 494.3 L358.7 506.2 L353.7 506.2 L351.2 501.2Z" fill="#6d9ce1" stroke="#a2a5aa" stroke-width="0.5" stroke-linejoin="round"/><path d="M359.9 490.6 L363.7 490.0 L371.1 494.3 L372.4 499.3 L387.4 500.6 L389.9 505.6 L386.1 509.3 L377.4 508.0 L369.9 506.8 L366.1 502.4 L366.1 497.4Z" fill="#6d9ce1" stroke="#a2a5aa" stroke-width="0.5" stroke-linejoin="round"/><path d="M359.9 503.1 L363.0 501.2 L365.5 508.0 L361.8 508.0Z" fill="#6d9ce1" stroke="#a2a5aa" stroke-width="0.5" stroke-linejoin="round"/><path d="M308.7 524.9 L311.2 509.9 L316.2 509.3 L326.2 514.9 L318.7 527.4 L313.7 530.5Z" fill="#6d9ce1" stroke="#a2a5aa" stroke-width="0.5" stroke-linejoin="round"/><path d="M320.6 524.9 L326.8 516.8 L336.2 518.7 L341.2 516.2 L346.2 515.5 L343.7 519.9 L347.4 529.9 L352.4 535.5 L351.2 541.1 L343.7 541.1 L338.7 547.4 L328.7 546.1 L323.7 538.6 L325.0 533.6 L330.0 533.6 L322.5 529.9Z" fill="#6d9ce1" stroke="#a2a5aa" stroke-width="0.5" stroke-linejoin="round"/><path d="M349.9 521.2 L351.8 514.9 L357.4 514.3 L359.3 516.2 L361.2 522.4 L358.7 528.0 L353.7 526.1Z" fill="#6d9ce1" stroke="#a2a5aa" stroke-width="0.5" stroke-linejoin="round"/><path d="M362.4 512.4 L369.9 511.8 L371.8 514.9 L363.7 524.3Z" fill="#6d9ce1" stroke="#a2a5aa" stroke-width="0.5" stroke-linejoin="round"/><path d="M360.5 527.4 L364.9 524.9 L369.9 529.9 L372.4 539.9 L374.9 547.4 L377.4 549.9 L379.9 534.9 L382.4 537.4 L387.4 539.9 L386.1 552.4 L379.9 553.0 L374.9 549.9 L369.9 546.1 L364.9 541.1 L363.0 534.9Z" fill="#6d9ce1" stroke="#a2a5aa" stroke-width="0.5" stroke-linejoin="round"/><path d="M372.4 519.9 L379.3 513.7 L381.1 521.2 L386.1 514.9 L391.1 521.2 L389.9 514.9 L394.9 516.2 L397.3 521.2 L394.9 523.7 L401.1 528.0 L404.8 527.4 L412.3 537.4 L409.8 542.4 L419.8 549.9 L421.7 552.4 L417.3 558.6 L412.3 554.9 L411.1 562.3 L416.1 568.6 L406.1 569.8 L397.3 564.8 L393.6 558.6 L399.8 554.9 L399.8 549.9 L396.1 542.4 L389.9 537.4 L379.9 536.1 L374.9 533.6Z" fill="#6d9ce1" stroke="#a2a5aa" stroke-width="0.5" stroke-linejoin="round"/><path d="M354.9 538.6 L358.7 534.9 L362.4 541.1 L358.7 542.4Z" fill="#6d9ce1" stroke="#a2a5aa" stroke-width="0.5" stroke-linejoin="round"/><path d="M378.6 556.1 L382.4 557.3 L388.6 563.6 L383.6 564.8 L378.6 563.6Z" fill="#6d9ce1" stroke="#a2a5aa" stroke-width="0.5" stroke-linejoin="round"/><path d="M311.8 611.7 L363.3 611.2 L375.0 613.3 L385.2 620.3 L384.4 629.6 L399.2 623.4 L407.0 617.2 L411.7 615.6 L414.8 621.8 L413.2 625.7 L405.4 628.1 L399.2 635.9 L396.1 639.0 L397.6 642.1 L389.8 651.5 L385.2 654.6 L389.1 665.5 L387.5 664.7 L382.0 656.2 L374.2 654.6 L364.9 659.3 L358.6 664.0 L350.8 656.2 L344.6 653.0 L336.8 651.5 L325.1 649.9 L318.1 645.2 L311.8 635.9 L311.1 625.0Z" fill="#4b84db" stroke="#a2a5aa" stroke-width="0.5" stroke-linejoin="round"/><path d="M413.2 625.0 L424.2 614.8 L427.3 618.7 L417.9 626.5Z" fill="#6d9ce1" stroke="#a2a5aa" stroke-width="0.5" stroke-linejoin="round"/><path d="M427.3 610.9 L432.7 604.7 L438.2 615.6 L432.7 617.9Z" fill="#6d9ce1" stroke="#a2a5aa" stroke-width="0.5" stroke-linejoin="round"/><path d="M329.0 649.9 L344.6 653.0 L350.8 656.2 L358.6 664.0 L358.6 673.3 L366.4 678.0 L375.8 673.3 L375.0 678.0 L366.4 682.7 L361.8 683.5 L352.4 679.6 L344.6 673.3 L336.8 664.0 L329.8 653.0Z" fill="#4b84db" stroke="#a2a5aa" stroke-width="0.5" stroke-linejoin="round"/><path d="M325.1 650.7 L328.7 651.5 L337.6 668.6 L335.6 669.6 L327.4 657.7Z" fill="#4b84db" stroke="#a2a5aa" stroke-width="0.5" stroke-linejoin="round"/><path d="M366.4 682.7 L374.2 679.6 L383.6 682.7 L383.6 692.0 L393.7 697.0 L390.6 698.6 L383.6 697.0 L377.4 690.5 L369.6 685.8Z" fill="#e3e4e6" stroke="#a2a5aa" stroke-width="0.5" stroke-linejoin="round"/><path d="M382.0 671.0 L389.8 669.4 L399.2 674.1 L399.5 676.0 L389.8 673.3Z" fill="#e3e4e6" stroke="#a2a5aa" stroke-width="0.5" stroke-linejoin="round"/><path d="M400.8 676.4 L410.1 676.4 L413.2 678.0 L402.3 678.9Z" fill="#e3e4e6" stroke="#a2a5aa" stroke-width="0.5" stroke-linejoin="round"/><path d="M403.9 690.5 L422.6 692.8 L424.2 699.8 L439.8 703.0 L442.1 709.2 L427.3 709.2 L419.5 704.5 L414.8 709.2 L411.7 699.8Z" fill="#e3e4e6" stroke="#a2a5aa" stroke-width="0.5" stroke-linejoin="round"/><path d="M387.5 720.1 L399.2 715.4 L408.6 718.6 L402.3 724.8 L410.1 734.2 L408.6 743.5 L399.2 734.2Z" fill="#e3e4e6" stroke="#a2a5aa" stroke-width="0.5" stroke-linejoin="round"/><path d="M408.6 731.0 L417.9 731.0 L427.3 742.0 L428.8 749.8 L435.1 759.1 L432.0 762.2 L424.2 756.0 L421.0 749.8 L411.7 748.2 L408.6 743.5Z" fill="#e3e4e6" stroke="#a2a5aa" stroke-width="0.5" stroke-linejoin="round"/><path d="M406.7 743.5 L412.0 751.3 L408.9 779.7 L403.6 779.7Z" fill="#e3e4e6" stroke="#a2a5aa" stroke-width="0.5" stroke-linejoin="round"/><path d="M393.0 698.3 L403.9 689.7 L405.8 693.6 L412.0 699.8 L410.4 707.6 L408.9 718.6 L399.2 715.4 L391.4 710.8Z" fill="#96b7ec" stroke="#a2a5aa" stroke-width="0.5" stroke-linejoin="round"/><path d="M389.8 710.8 L398.0 712.3 L393.3 720.1 L388.3 718.9Z" fill="#adc8f0" stroke="#a2a5aa" stroke-width="0.5" stroke-linejoin="round"/><path d="M402.3 724.8 L410.1 709.2 L424.2 706.1 L439.8 707.6 L453.8 715.4 L469.4 720.1 L467.8 729.5 L461.6 740.4 L458.5 751.3 L446.0 756.0 L441.3 766.9 L436.6 773.2 L433.5 768.5 L435.1 759.1 L428.8 749.8 L427.3 742.0 L417.9 731.0 L408.6 729.5Z" fill="#96b7ec" stroke="#a2a5aa" stroke-width="0.5" stroke-linejoin="round"/><path d="M411.7 751.3 L421.0 752.1 L430.4 757.6 L433.5 765.4 L435.1 771.6 L430.4 779.7 L407.8 779.7 L410.1 760.7Z" fill="#4b84db" stroke="#a2a5aa" stroke-width="0.5" stroke-linejoin="round"/><path d="M428.8 768.5 L436.6 773.2 L433.5 777.8 L428.8 776.3Z" fill="#e3e4e6" stroke="#a2a5aa" stroke-width="0.5" stroke-linejoin="round"/><path d="M567.4 619.9 L572.4 592.5 L574.9 580.0 L587.7 576.7 L586.4 568.7 L593.0 555.5 L595.7 560.8 L605.0 551.5 L611.6 544.9 L627.5 539.6 L639.5 536.9 L648.7 539.6 L651.4 521.0 L656.7 519.7 L661.5 547.5 L664.6 526.3 L673.9 525.0 L675.3 514.4 L684.5 511.7 L685.9 502.4 L701.8 497.1 L712.4 486.5 L723.0 490.5 L732.3 497.1 L731.0 509.1 L741.6 515.7 L752.2 515.7 L760.1 527.6 L768.1 523.7 L778.7 521.0 L794.6 526.3 L805.2 530.3 L815.8 536.9 L831.7 535.6 L849.0 539.6 L850.3 552.8 L847.6 568.7 L834.4 571.4 L822.4 576.7 L819.8 568.7 L807.9 579.3 L797.3 580.7 L773.4 587.3 L770.7 595.3 L781.3 599.2 L776.0 616.5 L766.8 627.1 L757.5 632.4 L749.5 632.4 L741.6 637.7 L745.5 640.3 L749.5 645.6 L748.2 661.6 L741.6 672.2 L733.6 680.1 L720.9 671.2 L727.1 693.0 L714.6 693.0 L708.4 683.7 L705.3 696.2 L708.4 708.6 L715.3 718.6 L705.3 709.3 L699.0 699.3 L702.2 680.6 L695.9 669.6 L689.7 671.2 L677.2 677.4 L671.0 696.2 L660.0 674.3 L653.8 671.2 L652.2 665.0 L646.0 661.8 L636.6 658.7 L627.3 657.2 L621.0 652.5 L617.9 647.8 L636.6 671.2 L637.3 674.9 L621.0 680.6 L608.6 687.4 L600.8 671.2 L594.5 647.8 L596.1 644.9 L594.9 642.4 L581.1 641.2 L578.6 636.2 L577.4 634.9 L574.9 631.2 L573.6 642.4 L567.4 633.7 L564.9 632.4Z" fill="#e3e4e6" stroke="#a2a5aa" stroke-width="0.5" stroke-linejoin="round"/><path d="M523.1 612.4 L532.4 606.8 L537.4 603.7 L543.1 598.7 L546.2 586.9 L550.5 592.5 L555.5 596.2 L571.1 595.0 L572.4 592.5 L574.9 580.0 L579.9 583.7 L581.1 592.5 L589.9 603.1 L602.3 610.0 L604.8 627.4 L587.4 629.9 L578.6 631.2 L571.8 629.9 L568.0 632.4 L562.4 629.9 L553.7 621.2 L552.4 616.8 L543.7 617.4 L543.1 626.2 L537.4 628.7 L530.0 626.2 L528.7 617.4Z" fill="#e3e4e6" stroke="#a2a5aa" stroke-width="0.5" stroke-linejoin="round"/><path d="M500.7 673.9 L508.6 660.4 L515.4 655.8 L514.8 650.7 L517.6 646.2 L528.9 642.3 L544.8 641.7 L547.0 649.0 L549.3 651.3 L556.1 651.3 L566.3 653.6 L574.2 651.3 L583.2 654.7 L592.3 653.0 L593.4 655.8 L590.0 657.0 L607.0 689.8 L609.2 693.2 L620.6 690.9 L617.2 698.8 L608.1 707.9 L603.6 716.9 L601.3 722.6 L602.5 730.5 L603.6 737.3 L594.5 746.3 L594.5 755.4 L588.9 761.0 L585.5 768.9 L576.4 774.6 L567.4 777.4 L562.9 767.8 L558.3 757.6 L552.7 745.2 L552.7 736.1 L554.9 726.0 L552.7 719.2 L547.0 710.1 L548.2 703.3 L540.2 703.3 L528.9 702.2 L517.6 703.3 L512.0 697.7 L504.0 690.9 L500.7 685.2Z" fill="#e3e4e6" stroke="#a2a5aa" stroke-width="0.5" stroke-linejoin="round"/><path d="M609.2 741.8 L618.3 733.9 L621.1 738.4 L617.2 750.8 L612.6 757.6 L608.1 754.2Z" fill="#e3e4e6" stroke="#a2a5aa" stroke-width="0.5" stroke-linejoin="round"/><path d="M518.7 643.7 L528.7 638.7 L537.4 632.4 L543.7 626.8 L549.9 624.9 L558.7 632.4 L564.9 633.7 L569.9 632.4 L579.9 633.7 L587.4 641.2 L596.1 642.4 L595.5 653.6 L574.9 654.6 L558.7 652.1 L549.9 649.3 L547.4 640.8 L530.0 641.4 L520.6 644.3Z" fill="#f4f5f7"/><path d="M581.1 622.4 L587.4 618.1 L594.9 621.2 L605.1 627.4 L602.6 631.4 L587.4 630.2 L581.1 628.9Z" fill="#f4f5f7"/><path d="M616.9 619.1 L624.9 617.8 L626.2 640.3 L619.6 640.9 L620.9 629.7Z" fill="#f4f5f7"/><path d="M593.0 650.9 L597.6 650.9 L610.1 683.7 L607.9 686.2Z" fill="#f4f5f7"/><path d="M621.0 654.0 L627.3 657.2 L636.6 665.6 L634.1 668.1 L624.2 661.8Z" fill="#f4f5f7"/><path d="M554.9 594.9 L561.1 584.9 L562.4 574.9 L567.4 569.9 L569.9 557.4 L574.9 554.9 L572.4 567.4 L574.9 578.7 L582.3 578.7 L578.6 584.9 L569.9 589.9 L567.4 594.9 L559.9 596.1Z" fill="#f4f5f7"/><path d="M539.9 571.2 L549.9 557.4 L559.9 543.7 L574.9 530.0 L586.1 531.9 L586.1 536.2 L579.8 536.8 L574.9 538.7 L568.6 540.0 L564.9 542.5 L559.9 548.7 L554.9 557.4 L552.4 569.9 L551.8 582.4 L549.9 587.4 L544.9 584.9 L541.2 579.9Z" fill="#e3e4e6" stroke="#a2a5aa" stroke-width="0.5" stroke-linejoin="round"/><path d="M569.9 557.4 L573.6 552.4 L568.6 540.0 L574.9 538.7 L579.8 536.8 L586.1 536.2 L592.3 541.2 L604.8 548.7 L599.8 552.4 L596.1 561.2 L593.6 557.4 L592.3 569.9 L589.8 578.7 L583.6 578.7 L576.1 578.7 L569.9 569.9Z" fill="#e3e4e6" stroke="#a2a5aa" stroke-width="0.5" stroke-linejoin="round"/><path d="M552.4 569.9 L554.9 557.4 L559.9 548.7 L564.9 542.5 L568.6 540.0 L573.6 552.4 L569.9 557.4 L567.4 569.9 L562.4 574.9 L561.1 584.9 L556.1 593.6 L552.4 589.9 L551.1 579.9Z" fill="#adc8f0" stroke="#a2a5aa" stroke-width="0.5" stroke-linejoin="round"/><path d="M546.1 589.9 L550.5 588.0 L552.4 594.9 L548.0 596.1Z" fill="#e3e4e6" stroke="#a2a5aa" stroke-width="0.5" stroke-linejoin="round"/><path d="M569.9 581.2 L579.8 579.9 L582.3 589.9 L574.9 594.9 L569.9 589.9Z" fill="#e3e4e6" stroke="#a2a5aa" stroke-width="0.5" stroke-linejoin="round"/><path d="M521.8 583.1 L525.6 582.5 L526.8 591.2 L533.7 601.2 L534.3 606.2 L522.5 608.7 L524.3 602.5 L521.2 597.5Z" fill="#6d9ce1" stroke="#a2a5aa" stroke-width="0.5" stroke-linejoin="round"/><path d="M513.7 598.7 L518.7 594.4 L520.6 596.8 L520.0 603.1 L514.4 604.3Z" fill="#e3e4e6" stroke="#a2a5aa" stroke-width="0.5" stroke-linejoin="round"/><path d="M517.5 594.4 L520.6 595.0 L520.2 597.1 L517.7 596.8Z" fill="#6d9ce1" stroke="#a2a5aa" stroke-width="0.5" stroke-linejoin="round"/><path d="M523.1 612.4 L532.4 606.8 L537.4 603.7 L543.1 605.0 L543.7 616.2 L543.1 626.2 L537.4 628.7 L530.0 626.2 L528.7 617.4Z" fill="#e3e4e6" stroke="#a2a5aa" stroke-width="0.5" stroke-linejoin="round"/><path d="M515.0 626.2 L525.0 625.6 L536.8 628.7 L531.2 634.9 L526.8 641.2 L516.2 641.2 L515.0 634.9Z" fill="#7fa7e6" stroke="#a2a5aa" stroke-width="0.5" stroke-linejoin="round"/><path d="M539.3 599.3 L543.1 598.7 L543.1 605.0 L538.9 604.3Z" fill="#adc8f0" stroke="#a2a5aa" stroke-width="0.5" stroke-linejoin="round"/><path d="M542.4 597.5 L555.5 596.2 L557.4 606.2 L553.7 608.1 L555.5 613.7 L546.2 615.6 L543.1 611.2Z" fill="#8aaeea" stroke="#a2a5aa" stroke-width="0.5" stroke-linejoin="round"/><path d="M556.8 595.6 L571.1 595.0 L573.6 605.0 L569.9 610.6 L558.7 606.8Z" fill="#4b84db" stroke="#a2a5aa" stroke-width="0.5" stroke-linejoin="round"/><path d="M553.7 606.8 L561.2 606.2 L564.3 610.6 L557.4 612.2Z" fill="#adc8f0" stroke="#a2a5aa" stroke-width="0.5" stroke-linejoin="round"/><path d="M561.2 614.3 L570.5 613.1 L571.1 618.1 L563.7 619.3Z" fill="#7fa7e6" stroke="#a2a5aa" stroke-width="0.5" stroke-linejoin="round"/><path d="M571.8 604.3 L589.9 603.1 L602.3 610.0 L599.8 617.4 L592.4 622.4 L584.9 618.7 L579.9 614.9 L572.4 612.4Z" fill="#96b7ec" stroke="#a2a5aa" stroke-width="0.5" stroke-linejoin="round"/><path d="M543.7 617.4 L552.4 616.8 L553.7 621.2 L562.4 629.9 L561.2 638.7 L558.7 635.5 L555.5 629.9 L548.0 623.1 L543.7 621.2Z" fill="#96b7ec" stroke="#a2a5aa" stroke-width="0.5" stroke-linejoin="round"/><path d="M554.9 638.0 L558.7 638.7 L557.4 641.2 L554.3 640.2Z" fill="#96b7ec" stroke="#a2a5aa" stroke-width="0.5" stroke-linejoin="round"/><path d="M546.4 629.9 L548.4 629.7 L548.7 634.9 L546.7 635.2Z" fill="#96b7ec" stroke="#a2a5aa" stroke-width="0.5" stroke-linejoin="round"/><path d="M571.8 624.9 L581.1 625.2 L580.5 629.9 L572.4 630.5Z" fill="#7fa7e6" stroke="#a2a5aa" stroke-width="0.5" stroke-linejoin="round"/><path d="M567.4 632.4 L574.9 631.2 L577.4 634.9 L573.6 642.4 L569.9 641.2Z" fill="#e3e4e6" stroke="#a2a5aa" stroke-width="0.5" stroke-linejoin="round"/><path d="M578.6 631.2 L587.4 629.9 L604.8 632.4 L608.6 638.7 L594.9 642.4 L581.1 641.2 L578.6 636.2Z" fill="#e3e4e6" stroke="#a2a5aa" stroke-width="0.5" stroke-linejoin="round"/><path d="M604.8 626.8 L612.3 629.3 L613.6 631.8 L607.3 631.2Z" fill="#adc8f0" stroke="#a2a5aa" stroke-width="0.5" stroke-linejoin="round"/><path d="M660.0 646.2 L669.4 647.8 L677.2 658.7 L689.7 665.0 L688.1 671.2 L677.2 677.4 L671.0 696.2 L667.8 696.2 L660.0 674.3 L653.8 671.2 L652.2 665.0 L661.6 658.7Z" fill="#6d9ce1" stroke="#a2a5aa" stroke-width="0.5" stroke-linejoin="round"/><path d="M689.7 660.3 L702.2 657.2 L704.0 663.4 L695.9 669.6 L691.2 668.1Z" fill="#6d9ce1" stroke="#a2a5aa" stroke-width="0.5" stroke-linejoin="round"/><path d="M672.5 694.6 L675.6 696.2 L675.6 700.8 L672.5 699.3Z" fill="#e3e4e6" stroke="#a2a5aa" stroke-width="0.5" stroke-linejoin="round"/><path d="M700.6 700.8 L708.4 702.4 L720.9 718.0 L727.1 724.2 L720.9 724.2 L708.4 713.3Z" fill="#e3e4e6" stroke="#a2a5aa" stroke-width="0.5" stroke-linejoin="round"/><path d="M722.4 722.7 L736.5 725.5 L737.1 727.7 L722.4 725.2Z" fill="#e3e4e6" stroke="#a2a5aa" stroke-width="0.5" stroke-linejoin="round"/><path d="M724.0 710.2 L736.5 700.8 L742.7 702.4 L741.2 714.9 L731.8 718.0 L725.6 716.4Z" fill="#e3e4e6" stroke="#a2a5aa" stroke-width="0.5" stroke-linejoin="round"/><path d="M744.3 708.6 L752.1 708.6 L749.0 718.0 L744.3 716.4Z" fill="#e3e4e6" stroke="#a2a5aa" stroke-width="0.5" stroke-linejoin="round"/><path d="M764.6 716.4 L786.4 713.3 L798.9 724.2 L797.3 728.9 L780.2 727.4 L764.6 721.1Z" fill="#e3e4e6" stroke="#a2a5aa" stroke-width="0.5" stroke-linejoin="round"/><path d="M744.3 677.4 L749.0 679.0 L750.5 689.9 L755.2 696.2 L753.7 700.8 L749.0 697.7 L745.9 686.8Z" fill="#adc8f0" stroke="#a2a5aa" stroke-width="0.5" stroke-linejoin="round"/><path d="M731.8 750.8 L749.0 739.8 L764.6 733.6 L783.3 730.5 L789.5 739.8 L795.8 746.1 L802.0 758.6 L803.6 778.8 L736.5 778.8 L733.4 764.8Z" fill="#e3e4e6" stroke="#a2a5aa" stroke-width="0.5" stroke-linejoin="round"/><path d="M624.9 525.0 L632.8 502.4 L651.4 491.8 L654.0 495.8 L636.8 510.4 L630.2 531.6Z" fill="#e3e4e6" stroke="#a2a5aa" stroke-width="0.5" stroke-linejoin="round"/><path d="M550.6 468.0 L569.2 464.0 L579.8 465.3 L566.5 475.9 L561.2 491.8 L555.9 486.5 L551.9 475.9Z" fill="#e3e4e6" stroke="#a2a5aa" stroke-width="0.5" stroke-linejoin="round"/><path d="M696.5 464.0 L709.7 465.3 L717.7 481.2 L707.1 482.5Z" fill="#e3e4e6" stroke="#a2a5aa" stroke-width="0.5" stroke-linejoin="round"/><path d="M773.4 499.8 L786.6 502.4 L797.3 506.4 L778.7 509.1Z" fill="#e3e4e6" stroke="#a2a5aa" stroke-width="0.5" stroke-linejoin="round"/><path d="M807.9 587.3 L821.1 568.7 L818.5 584.6 L810.5 605.9Z" fill="#e3e4e6" stroke="#a2a5aa" stroke-width="0.5" stroke-linejoin="round"/><path d="M781.3 597.9 L785.3 597.9 L788.0 619.1 L782.7 619.1Z" fill="#e3e4e6" stroke="#a2a5aa" stroke-width="0.5" stroke-linejoin="round"/><path d="M751.6 634.5 L760.7 628.4 L762.2 643.6 L756.1 646.6 L753.1 640.6Z" fill="#e3e4e6" stroke="#a2a5aa" stroke-width="0.5" stroke-linejoin="round"/><path d="M778.9 630.0 L784.2 621.6 L788.8 625.4 L781.9 633.0 L778.9 643.6 L772.8 646.6 L763.7 652.7 L760.7 648.2 L771.3 642.1 L777.4 636.0Z" fill="#adc8f0" stroke="#a2a5aa" stroke-width="0.5" stroke-linejoin="round"/><path d="M488.7 554.9 L502.5 552.4 L506.8 557.4 L503.7 562.4 L492.5 564.3 L488.7 558.7Z" fill="#e3e4e6" stroke="#a2a5aa" stroke-width="0.5" stroke-linejoin="round"/><path d="M508.6 660.4 L515.4 660.4 L521.0 666.0 L521.6 683.0 L509.7 684.1" fill="none" stroke="#a7aaaf" stroke-width="0.5"/><path d="M515.4 660.4 L538.0 676.2 L539.1 686.4 L532.3 685.2 L522.1 690.9 L517.6 693.2" fill="none" stroke="#a7aaaf" stroke-width="0.5"/><path d="M538.0 676.2 L551.6 668.8 L558.3 670.5 L556.1 687.5 L547.0 687.5 L538.0 686.4" fill="none" stroke="#a7aaaf" stroke-width="0.5"/><path d="M548.2 651.3 L549.3 666.0 L558.3 670.5" fill="none" stroke="#a7aaaf" stroke-width="0.5"/><path d="M558.3 670.5 L574.2 675.1 L575.9 652.4" fill="none" stroke="#a7aaaf" stroke-width="0.5"/><path d="M575.9 671.1 L594.5 671.1" fill="none" stroke="#a7aaaf" stroke-width="0.5"/><path d="M574.2 675.1 L571.9 689.8 L576.4 695.4 L588.9 692.0 L592.3 694.3 L596.8 683.0" fill="none" stroke="#a7aaaf" stroke-width="0.5"/><path d="M556.1 687.5 L558.3 698.8 L567.4 694.3 L574.2 692.0" fill="none" stroke="#a7aaaf" stroke-width="0.5"/><path d="M558.3 698.8 L562.9 703.3 L574.2 702.2 L585.5 704.5 L592.3 703.3" fill="none" stroke="#a7aaaf" stroke-width="0.5"/><path d="M592.3 694.3 L608.1 703.3 L614.9 697.7" fill="none" stroke="#a7aaaf" stroke-width="0.5"/><path d="M592.3 703.3 L603.6 704.5 L604.7 713.5" fill="none" stroke="#a7aaaf" stroke-width="0.5"/><path d="M585.5 704.5 L583.2 726.0 L592.3 730.5 L602.5 730.5" fill="none" stroke="#a7aaaf" stroke-width="0.5"/><path d="M562.9 703.3 L553.8 719.2 L566.3 721.4 L571.9 730.5 L582.1 732.7" fill="none" stroke="#a7aaaf" stroke-width="0.5"/><path d="M552.7 742.4 L573.0 742.9 L581.0 739.5 L588.9 739.5 L591.1 730.5" fill="none" stroke="#a7aaaf" stroke-width="0.5"/><path d="M567.4 744.1 L567.4 764.4 L561.7 764.4" fill="none" stroke="#a7aaaf" stroke-width="0.5"/><path d="M567.4 758.8 L576.4 757.6 L584.4 752.0 L587.7 759.9" fill="none" stroke="#a7aaaf" stroke-width="0.5"/><path d="M576.4 742.9 L581.0 750.8 L587.7 752.0 L594.5 746.3" fill="none" stroke="#a7aaaf" stroke-width="0.5"/><path d="M522.1 690.9 L526.7 692.0 L526.7 702.2" fill="none" stroke="#a7aaaf" stroke-width="0.5"/><path d="M532.3 693.2 L533.5 701.1" fill="none" stroke="#a7aaaf" stroke-width="0.5"/><path d="M502.9 688.6 L509.7 689.8 L517.6 693.2 L517.6 703.3" fill="none" stroke="#a7aaaf" stroke-width="0.5"/><path d="M607.0 673.9 L621.7 673.9" fill="none" stroke="#a7aaaf" stroke-width="0.5"/><path d="M600.2 654.7 L617.2 657.0 L630.7 664.9" fill="none" stroke="#a7aaaf" stroke-width="0.5"/><path d="M611.6 608.5 L640.8 597.9 L656.7 593.9 L667.3 597.9 L685.9 611.2" fill="none" stroke="#a7aaaf" stroke-width="0.5"/><path d="M627.5 619.1 L632.8 629.7 L651.4 629.7 L664.6 632.4 L672.6 624.4 L685.9 613.8" fill="none" stroke="#a7aaaf" stroke-width="0.5"/><path d="M685.9 611.2 L704.4 604.5 L725.6 608.5 L744.2 597.9 L760.1 603.2 L768.1 616.5" fill="none" stroke="#a7aaaf" stroke-width="0.5"/><path d="M688.5 616.5 L701.8 627.1 L720.3 629.7 L738.9 616.5 L752.2 613.8" fill="none" stroke="#a7aaaf" stroke-width="0.5"/><path d="M672.6 624.4 L664.6 640.3 L654.0 645.6" fill="none" stroke="#a7aaaf" stroke-width="0.5"/><path d="M627.5 640.3 L640.8 651.0 L654.0 645.6 L659.3 661.6 L664.6 669.5" fill="none" stroke="#a7aaaf" stroke-width="0.5"/><path d="M606.3 643.0 L619.6 643.0 L627.5 651.0 L619.6 661.6" fill="none" stroke="#a7aaaf" stroke-width="0.5"/><path d="M662.0 645.6 L677.9 656.3 L699.1 664.2 L709.7 661.6" fill="none" stroke="#a7aaaf" stroke-width="0.5"/><path d="M709.7 661.6 L715.0 672.2 L725.6 674.8" fill="none" stroke="#a7aaaf" stroke-width="0.5"/><path d="M542.7 597.9 L555.9 608.5 L571.8 608.5" fill="none" stroke="#a7aaaf" stroke-width="0.5"/></svg></div><div class="a" style="left:192.8px;top:469px;width:21px;height:39.5px;background:#fff;border:1px solid #c7c9cc;border-radius:2px"></div><div class="a" style="left:193.8px;top:488.6px;width:18.5px;height:0.7px;background:#dadcdf"></div><div class="a" style="left:193.3px;top:472.6px;width:20px;text-align:center;font-size:15px;line-height:15px;font-weight:bold;color:#111">+</div><div class="a" style="left:193.3px;top:491.5px;width:20px;text-align:center;font-size:15px;line-height:15px;font-weight:bold;color:#111">−</div><div class="a" style="left:845px;top:769.3px;width:36.5px;height:10px;background:rgba(255,255,255,0.8)"></div><div class="a" style="left:848px;top:771.8px;width:7.5px;height:2.6px;background:#4a6fd8"></div><div class="a" style="left:848px;top:774.4px;width:7.5px;height:2.6px;background:#f7d000"></div><div class="a" style="left:857px;top:770.3px;font-size:7.4px;line-height:8px;color:#2c7cc0">Leaflet</div>
<div class="card" style="left:899.0px;top:434.3px;width:356.8px;height:355.8px"></div>
<div class="ct" style="left:909.9px;top:445.7px">Top countries by login attempts</div>
<div class="a" style="left:909.9px;top:464.3px;width:325.7px;height:2px;background:#e4e6eb"></div>
<div class="a" style="left:909.9px;top:472.0px;font-size:9px;line-height:10px;color:#2b313b">Hungary</div>
<div class="a" style="left:1150px;top:472.2px;width:62px;text-align:right;font-size:8.7px;line-height:10px;color:#2b313b">34</div>
<div class="a" style="left:1216.8px;top:472.2px;font-size:8.7px;line-height:10px;color:#8d939d">(0%)</div>
<div class="a" style="left:909.9px;top:485.7px;width:325.7px;height:2px;background:#e4e6eb"></div>
<div class="a" style="left:909.9px;top:494.4px;font-size:9px;line-height:10px;color:#2b313b">Bulgaria</div>
<div class="a" style="left:1150px;top:494.6px;width:62px;text-align:right;font-size:8.7px;line-height:10px;color:#2b313b">33</div>
<div class="a" style="left:1216.8px;top:494.6px;font-size:8.7px;line-height:10px;color:#8d939d">(0%)</div>
<div class="a" style="left:909.9px;top:508.1px;width:325.7px;height:2px;background:#e4e6eb"></div>
<div class="a" style="left:909.9px;top:516.8px;font-size:9px;line-height:10px;color:#2b313b">Brazil</div>
<div class="a" style="left:1150px;top:517.0px;width:62px;text-align:right;font-size:8.7px;line-height:10px;color:#2b313b">27</div>
<div class="a" style="left:1216.8px;top:517.0px;font-size:8.7px;line-height:10px;color:#8d939d">(0%)</div>
<div class="a" style="left:909.9px;top:530.5px;width:325.7px;height:2px;background:#e4e6eb"></div>
<div class="a" style="left:909.9px;top:539.2px;font-size:9px;line-height:10px;color:#2b313b">Ukraine</div>
<div class="a" style="left:1150px;top:539.4px;width:62px;text-align:right;font-size:8.7px;line-height:10px;color:#2b313b">17</div>
<div class="a" style="left:1216.8px;top:539.4px;font-size:8.7px;line-height:10px;color:#8d939d">(0%)</div>
<div class="a" style="left:909.9px;top:552.9px;width:325.7px;height:2px;background:#e4e6eb"></div>
<div class="a" style="left:909.9px;top:561.6px;font-size:9px;line-height:10px;color:#2b313b">Colombia</div>
<div class="a" style="left:1150px;top:561.8px;width:62px;text-align:right;font-size:8.7px;line-height:10px;color:#2b313b">14</div>
<div class="a" style="left:1216.8px;top:561.8px;font-size:8.7px;line-height:10px;color:#8d939d">(0%)</div>
<div class="a" style="left:909.9px;top:575.3px;width:325.7px;height:2px;background:#e4e6eb"></div>
<div class="a" style="left:909.9px;top:584.0px;font-size:9px;line-height:10px;color:#2b313b">Netherlands</div>
<div class="a" style="left:1150px;top:584.2px;width:62px;text-align:right;font-size:8.7px;line-height:10px;color:#2b313b">6</div>
<div class="a" style="left:1216.8px;top:584.2px;font-size:8.7px;line-height:10px;color:#8d939d">(0%)</div>
<div class="a" style="left:909.9px;top:597.7px;width:325.7px;height:2px;background:#e4e6eb"></div>
<div class="a" style="left:909.9px;top:606.3px;font-size:9px;line-height:10px;color:#2b313b">Italy</div>
<div class="a" style="left:1150px;top:606.5px;width:62px;text-align:right;font-size:8.7px;line-height:10px;color:#2b313b">6</div>
<div class="a" style="left:1216.8px;top:606.5px;font-size:8.7px;line-height:10px;color:#8d939d">(0%)</div>
<div class="a" style="left:909.9px;top:620.0px;width:325.7px;height:2px;background:#e4e6eb"></div>
<div class="a" style="left:909.9px;top:628.7px;font-size:9px;line-height:10px;color:#2b313b">Sweden</div>
<div class="a" style="left:1150px;top:628.9px;width:62px;text-align:right;font-size:8.7px;line-height:10px;color:#2b313b">5</div>
<div class="a" style="left:1216.8px;top:628.9px;font-size:8.7px;line-height:10px;color:#8d939d">(0%)</div>
<div class="a" style="left:909.9px;top:642.4px;width:325.7px;height:2px;background:#e4e6eb"></div>
<div class="a" style="left:909.9px;top:651.1px;font-size:9px;line-height:10px;color:#2b313b">Philippines</div>
<div class="a" style="left:1150px;top:651.3px;width:62px;text-align:right;font-size:8.7px;line-height:10px;color:#2b313b">4</div>
<div class="a" style="left:1216.8px;top:651.3px;font-size:8.7px;line-height:10px;color:#8d939d">(0%)</div>
<div class="a" style="left:909.9px;top:664.8px;width:325.7px;height:2px;background:#e4e6eb"></div>
<div class="a" style="left:909.9px;top:673.5px;font-size:9px;line-height:10px;color:#2b313b">Japan</div>
<div class="a" style="left:1150px;top:673.7px;width:62px;text-align:right;font-size:8.7px;line-height:10px;color:#2b313b">3</div>
<div class="a" style="left:1216.8px;top:673.7px;font-size:8.7px;line-height:10px;color:#8d939d">(0%)</div>
<div class="a" style="left:909.9px;top:687.2px;width:325.7px;height:2px;background:#e4e6eb"></div>
<div class="a" style="left:909.9px;top:695.9px;font-size:9px;line-height:10px;color:#2b313b">Georgia</div>
<div class="a" style="left:1150px;top:696.1px;width:62px;text-align:right;font-size:8.7px;line-height:10px;color:#2b313b">3</div>
<div class="a" style="left:1216.8px;top:696.1px;font-size:8.7px;line-height:10px;color:#8d939d">(0%)</div>
<div class="a" style="left:909.9px;top:709.6px;width:325.7px;height:2px;background:#e4e6eb"></div>
<div class="a" style="left:909.9px;top:718.3px;font-size:9px;line-height:10px;color:#2b313b">Ecuador</div>
<div class="a" style="left:1150px;top:718.5px;width:62px;text-align:right;font-size:8.7px;line-height:10px;color:#2b313b">2</div>
<div class="a" style="left:1216.8px;top:718.5px;font-size:8.7px;line-height:10px;color:#8d939d">(0%)</div>
<div class="a" style="left:909.9px;top:732.0px;width:325.7px;height:2px;background:#e4e6eb"></div>
<div class="a" style="left:909.9px;top:740.7px;font-size:9px;line-height:10px;color:#2b313b">Czechia</div>
<div class="a" style="left:1150px;top:740.9px;width:62px;text-align:right;font-size:8.7px;line-height:10px;color:#2b313b">2</div>
<div class="a" style="left:1216.8px;top:740.9px;font-size:8.7px;line-height:10px;color:#8d939d">(0%)</div>
<div class="a" style="left:909.9px;top:754.4px;width:325.7px;height:2px;background:#e4e6eb"></div>
<div class="a" style="left:909.9px;top:763.1px;font-size:9px;line-height:10px;color:#2b313b">Unknown</div>
<div class="a" style="left:1150px;top:763.3px;width:62px;text-align:right;font-size:8.7px;line-height:10px;color:#2b313b">1</div>
<div class="a" style="left:1216.8px;top:763.3px;font-size:8.7px;line-height:10px;color:#8d939d">(0%)</div>
<div class="a" style="left:909.9px;top:776.8px;width:325.7px;height:2px;background:#e4e6eb"></div>
<div class="a" style="left:1237px;top:463px;width:7.7px;height:316px;background:#f6f6f7"></div>
<div class="a" style="left:1238.6px;top:602px;width:4.6px;height:176px;border-radius:2.5px;background:#c3c3c3"></div>
<div class="sec" style="left:180.3px;top:810px">Anomaly Detection</div>
<div class="card" style="left:176.0px;top:833.6px;width:1079.2px;height:264.4px"></div>
<div class="ct" style="left:186px;top:844.7px">Authentication Distribution Over Time</div>
<svg style="left:1234.7px;top:844.2px" width="10.6" height="10.6" viewBox="0 0 12 12"><circle cx="6" cy="6" r="5.1" fill="none" stroke="#3b86e8" stroke-width="1.3"/><rect x="5.4" y="5.2" width="1.2" height="3.4" rx="0.5" fill="#3b86e8"/><circle cx="6" cy="3.6" r="0.75" fill="#3b86e8"/></svg>
<div class="a" style="left:642.8px;top:863px;width:5px;height:5px;border-radius:50%;background:#1a6f1a"></div>
<div class="lg" style="left:650.6px;top:861px">Successful Auths</div>
<div class="a" style="left:718.8px;top:863px;width:5px;height:5px;border-radius:50%;background:#e0161b"></div>
<div class="lg" style="left:727.5px;top:861px">Incomplete Auths</div>
<div class="a" style="left:184px;top:979px;transform:rotate(-90deg);transform-origin:0 0;font-size:7.6px;line-height:9px;color:#1f2b3d;width:0"><div style="position:absolute;left:-22px;top:0;width:44px;text-align:center">Auth count</div></div>
<svg style="left:0;top:0" width="1282" height="2109"><line x1="221.1" y1="1067.3" x2="1236.0" y2="1067.3" stroke="#dfe1e6" stroke-width="0.7" stroke-dasharray="1.5 1.5"/><line x1="218.1" y1="1067.3" x2="221.1" y2="1067.3" stroke="#c9ccd6" stroke-width="0.7"/><text x="216.6" y="1069.4" class="ax" text-anchor="end" style="font-size:6.2px">0</text><line x1="221.1" y1="1044.3" x2="1236.0" y2="1044.3" stroke="#dfe1e6" stroke-width="0.7" stroke-dasharray="1.5 1.5"/><line x1="218.1" y1="1044.3" x2="221.1" y2="1044.3" stroke="#c9ccd6" stroke-width="0.7"/><text x="216.6" y="1046.4" class="ax" text-anchor="end" style="font-size:6.2px">20</text><line x1="221.1" y1="1021.3" x2="1236.0" y2="1021.3" stroke="#dfe1e6" stroke-width="0.7" stroke-dasharray="1.5 1.5"/><line x1="218.1" y1="1021.3" x2="221.1" y2="1021.3" stroke="#c9ccd6" stroke-width="0.7"/><text x="216.6" y="1023.4" class="ax" text-anchor="end" style="font-size:6.2px">40</text><line x1="221.1" y1="998.3" x2="1236.0" y2="998.3" stroke="#dfe1e6" stroke-width="0.7" stroke-dasharray="1.5 1.5"/><line x1="218.1" y1="998.3" x2="221.1" y2="998.3" stroke="#c9ccd6" stroke-width="0.7"/><text x="216.6" y="1000.4" class="ax" text-anchor="end" style="font-size:6.2px">60</text><line x1="221.1" y1="975.3" x2="1236.0" y2="975.3" stroke="#dfe1e6" stroke-width="0.7" stroke-dasharray="1.5 1.5"/><line x1="218.1" y1="975.3" x2="221.1" y2="975.3" stroke="#c9ccd6" stroke-width="0.7"/><text x="216.6" y="977.4" class="ax" text-anchor="end" style="font-size:6.2px">80</text><line x1="221.1" y1="952.3" x2="1236.0" y2="952.3" stroke="#dfe1e6" stroke-width="0.7" stroke-dasharray="1.5 1.5"/><line x1="218.1" y1="952.3" x2="221.1" y2="952.3" stroke="#c9ccd6" stroke-width="0.7"/><text x="216.6" y="954.4" class="ax" text-anchor="end" style="font-size:6.2px">100</text><line x1="221.1" y1="929.3" x2="1236.0" y2="929.3" stroke="#dfe1e6" stroke-width="0.7" stroke-dasharray="1.5 1.5"/><line x1="218.1" y1="929.3" x2="221.1" y2="929.3" stroke="#c9ccd6" stroke-width="0.7"/><text x="216.6" y="931.4" class="ax" text-anchor="end" style="font-size:6.2px">120</text><line x1="221.1" y1="906.3" x2="1236.0" y2="906.3" stroke="#dfe1e6" stroke-width="0.7" stroke-dasharray="1.5 1.5"/><line x1="218.1" y1="906.3" x2="221.1" y2="906.3" stroke="#c9ccd6" stroke-width="0.7"/><text x="216.6" y="908.4" class="ax" text-anchor="end" style="font-size:6.2px">140</text><line x1="221.1" y1="883.3" x2="1236.0" y2="883.3" stroke="#dfe1e6" stroke-width="0.7" stroke-dasharray="1.5 1.5"/><line x1="218.1" y1="883.3" x2="221.1" y2="883.3" stroke="#c9ccd6" stroke-width="0.7"/><text x="216.6" y="885.4" class="ax" text-anchor="end" style="font-size:6.2px">160</text><line x1="221.1" y1="883.3" x2="221.1" y2="1067.3" stroke="#c9ccd9" stroke-width="1"/><line x1="221.1" y1="1067.8" x2="1229.8" y2="1067.8" stroke="#c9ccd9" stroke-width="0.8" stroke-dasharray="1.5 1.2"/><line x1="249.5" y1="1067.3" x2="249.5" y2="1070.3" stroke="#c9ccd9" stroke-width="0.8"/><text x="249.5" y="1077.8" class="ax" text-anchor="middle" style="font-size:6.2px">Jan 04</text><line x1="368.5" y1="1067.3" x2="368.5" y2="1070.3" stroke="#c9ccd9" stroke-width="0.8"/><text x="368.5" y="1077.8" class="ax" text-anchor="middle" style="font-size:6.2px">Jan 11</text><line x1="487.5" y1="1067.3" x2="487.5" y2="1070.3" stroke="#c9ccd9" stroke-width="0.8"/><text x="487.5" y="1077.8" class="ax" text-anchor="middle" style="font-size:6.2px">Jan 18</text><line x1="606.4" y1="1067.3" x2="606.4" y2="1070.3" stroke="#c9ccd9" stroke-width="0.8"/><text x="606.4" y="1077.8" class="ax" text-anchor="middle" style="font-size:6.2px">Jan 25</text><line x1="725.4" y1="1067.3" x2="725.4" y2="1070.3" stroke="#c9ccd9" stroke-width="0.8"/><text x="725.4" y="1077.8" class="ax" text-anchor="middle" style="font-size:6.2px">February</text><line x1="844.4" y1="1067.3" x2="844.4" y2="1070.3" stroke="#c9ccd9" stroke-width="0.8"/><text x="844.4" y="1077.8" class="ax" text-anchor="middle" style="font-size:6.2px">Feb 08</text><line x1="963.4" y1="1067.3" x2="963.4" y2="1070.3" stroke="#c9ccd9" stroke-width="0.8"/><text x="963.4" y="1077.8" class="ax" text-anchor="middle" style="font-size:6.2px">Feb 15</text><line x1="1082.4" y1="1067.3" x2="1082.4" y2="1070.3" stroke="#c9ccd9" stroke-width="0.8"/><text x="1082.4" y="1077.8" class="ax" text-anchor="middle" style="font-size:6.2px">Feb 22</text><line x1="1201.3" y1="1067.3" x2="1201.3" y2="1070.3" stroke="#c9ccd9" stroke-width="0.8"/><text x="1201.3" y="1077.8" class="ax" text-anchor="middle" style="font-size:6.2px">March</text><line x1="226.8" y1="1067.3" x2="226.8" y2="1070.3" stroke="#c9ccd9" stroke-width="0.8"/><line x1="1229.8" y1="1067.3" x2="1229.8" y2="1070.3" stroke="#c9ccd9" stroke-width="0.8"/><path d="M226.8 1060.4 C232.5 1062.3 238.1 1066.1 243.8 1066.1 C249.5 1066.1 255.1 932.8 260.8 932.8 C266.5 932.8 272.1 945.4 277.8 948.8 C283.5 952.3 289.1 953.4 294.8 953.4 C300.5 953.4 306.1 942.7 311.8 939.6 C317.5 936.6 323.1 935.0 328.8 935.0 C334.5 935.0 340.1 1054.7 345.8 1057.0 C351.5 1059.2 357.1 1059.2 362.8 1059.2 C368.5 1059.2 374.1 985.6 379.8 976.4 C385.5 967.3 391.1 968.5 396.8 967.2 C402.5 966.0 408.1 963.8 413.8 963.8 C419.5 963.8 425.1 976.4 430.8 976.4 C436.5 976.4 442.1 960.3 447.8 960.3 C453.5 960.3 459.1 1059.2 464.8 1060.4 C470.5 1061.5 476.1 1061.5 481.8 1061.5 C487.5 1061.5 493.1 1016.7 498.8 994.8 C504.5 973.0 510.1 930.4 515.8 930.4 C521.5 930.4 527.1 945.4 532.8 945.4 C538.5 945.4 544.1 945.4 549.8 944.2 C555.5 943.1 561.1 936.2 566.8 936.2 C572.5 936.2 578.1 1038.6 583.8 1051.2 C589.5 1063.8 595.1 1063.8 600.8 1063.8 C606.5 1063.8 612.1 961.5 617.8 953.4 C623.5 945.4 629.1 945.4 634.8 945.4 C640.5 945.4 646.1 947.7 651.8 947.7 C657.5 947.7 663.1 916.6 668.8 916.6 C674.5 916.6 680.1 916.6 685.8 925.8 C691.5 935.0 697.1 1046.6 702.8 1050.0 C708.5 1053.5 714.1 1053.5 719.8 1053.5 C725.5 1053.5 731.1 946.5 736.8 945.4 C742.5 944.3 748.1 944.3 753.8 944.2 C759.5 944.2 765.1 937.3 770.8 937.3 C776.5 937.3 782.1 941.9 787.8 941.9 C793.5 941.9 799.1 932.8 804.8 932.8 C810.5 932.8 816.1 1054.6 821.8 1060.4 C827.5 1066.1 833.1 1066.1 838.8 1066.1 C844.5 1066.1 850.1 927.0 855.8 927.0 C861.5 927.0 867.1 927.0 872.8 928.1 C878.5 929.3 884.1 951.1 889.8 951.1 C895.5 951.1 901.1 951.1 906.8 951.1 C912.5 951.1 918.1 929.3 923.8 929.3 C929.5 929.3 935.1 1051.2 940.8 1058.1 C946.5 1065.0 952.1 1065.0 957.8 1065.0 C963.5 1065.0 969.1 1033.0 974.8 1016.7 C980.5 1000.4 986.1 987.6 991.8 967.2 C997.5 946.9 1003.1 894.8 1008.8 894.8 C1014.5 894.8 1020.1 917.8 1025.8 929.3 C1031.5 940.8 1037.1 943.9 1042.8 963.8 C1048.5 983.7 1054.1 1042.0 1059.8 1048.9 C1065.5 1055.8 1071.1 1055.8 1076.8 1055.8 C1082.5 1055.8 1088.1 899.4 1093.8 899.4 C1099.5 899.4 1105.1 921.2 1110.8 921.2 C1116.5 921.2 1122.1 918.2 1127.8 916.6 C1133.5 915.1 1139.1 912.0 1144.8 912.0 C1150.5 912.0 1156.1 912.0 1161.8 929.3 C1167.5 946.5 1173.1 1044.3 1178.8 1051.2 C1184.5 1058.1 1190.1 1058.1 1195.8 1058.1 C1201.5 1058.1 1207.1 924.7 1212.8 924.7 C1218.5 924.7 1224.1 942.3 1229.8 951.1" fill="none" stroke="#137013" stroke-width="1.25" stroke-linejoin="round"/><circle cx="226.8" cy="1060.4" r="1.3" fill="#137013"/><circle cx="243.8" cy="1066.1" r="1.3" fill="#137013"/><circle cx="260.8" cy="932.8" r="1.3" fill="#137013"/><circle cx="277.8" cy="948.8" r="1.3" fill="#137013"/><circle cx="294.8" cy="953.4" r="1.3" fill="#137013"/><circle cx="311.8" cy="939.6" r="1.3" fill="#137013"/><circle cx="328.8" cy="935.0" r="1.3" fill="#137013"/><circle cx="345.8" cy="1057.0" r="1.3" fill="#137013"/><circle cx="362.8" cy="1059.2" r="1.3" fill="#137013"/><circle cx="379.8" cy="976.4" r="1.3" fill="#137013"/><circle cx="396.8" cy="967.2" r="1.3" fill="#137013"/><circle cx="413.8" cy="963.8" r="1.3" fill="#137013"/><circle cx="430.8" cy="976.4" r="1.3" fill="#137013"/><circle cx="447.8" cy="960.3" r="1.3" fill="#137013"/><circle cx="464.8" cy="1060.4" r="1.3" fill="#137013"/><circle cx="481.8" cy="1061.5" r="1.3" fill="#137013"/><circle cx="498.8" cy="994.8" r="1.3" fill="#137013"/><circle cx="515.8" cy="930.4" r="1.3" fill="#137013"/><circle cx="532.8" cy="945.4" r="1.3" fill="#137013"/><circle cx="549.8" cy="944.2" r="1.3" fill="#137013"/><circle cx="566.8" cy="936.2" r="1.3" fill="#137013"/><circle cx="583.8" cy="1051.2" r="1.3" fill="#137013"/><circle cx="600.8" cy="1063.8" r="1.3" fill="#137013"/><circle cx="617.8" cy="953.4" r="1.3" fill="#137013"/><circle cx="634.8" cy="945.4" r="1.3" fill="#137013"/><circle cx="651.8" cy="947.7" r="1.3" fill="#137013"/><circle cx="668.8" cy="916.6" r="1.3" fill="#137013"/><circle cx="685.8" cy="925.8" r="1.3" fill="#137013"/><circle cx="702.8" cy="1050.0" r="1.3" fill="#137013"/><circle cx="719.8" cy="1053.5" r="1.3" fill="#137013"/><circle cx="736.8" cy="945.4" r="1.3" fill="#137013"/><circle cx="753.8" cy="944.2" r="1.3" fill="#137013"/><circle cx="770.8" cy="937.3" r="1.3" fill="#137013"/><circle cx="787.8" cy="941.9" r="1.3" fill="#137013"/><circle cx="804.8" cy="932.8" r="1.3" fill="#137013"/><circle cx="821.8" cy="1060.4" r="1.3" fill="#137013"/><circle cx="838.8" cy="1066.1" r="1.3" fill="#137013"/><circle cx="855.8" cy="927.0" r="1.3" fill="#137013"/><circle cx="872.8" cy="928.1" r="1.3" fill="#137013"/><circle cx="889.8" cy="951.1" r="1.3" fill="#137013"/><circle cx="906.8" cy="951.1" r="1.3" fill="#137013"/><circle cx="923.8" cy="929.3" r="1.3" fill="#137013"/><circle cx="940.8" cy="1058.1" r="1.3" fill="#137013"/><circle cx="957.8" cy="1065.0" r="1.3" fill="#137013"/><circle cx="974.8" cy="1016.7" r="1.3" fill="#137013"/><circle cx="991.8" cy="967.2" r="1.3" fill="#137013"/><circle cx="1008.8" cy="894.8" r="1.3" fill="#137013"/><circle cx="1025.8" cy="929.3" r="1.3" fill="#137013"/><circle cx="1042.8" cy="963.8" r="1.3" fill="#137013"/><circle cx="1059.8" cy="1048.9" r="1.3" fill="#137013"/><circle cx="1076.8" cy="1055.8" r="1.3" fill="#137013"/><circle cx="1093.8" cy="899.4" r="1.3" fill="#137013"/><circle cx="1110.8" cy="921.2" r="1.3" fill="#137013"/><circle cx="1127.8" cy="916.6" r="1.3" fill="#137013"/><circle cx="1144.8" cy="912.0" r="1.3" fill="#137013"/><circle cx="1161.8" cy="929.3" r="1.3" fill="#137013"/><circle cx="1178.8" cy="1051.2" r="1.3" fill="#137013"/><circle cx="1195.8" cy="1058.1" r="1.3" fill="#137013"/><circle cx="1212.8" cy="924.7" r="1.3" fill="#137013"/><circle cx="1229.8" cy="951.1" r="1.3" fill="#137013"/><path d="M226.8 1060.4 C232.5 1062.3 238.1 1066.1 243.8 1066.1 C249.5 1066.1 255.1 1017.8 260.8 1015.5 C266.5 1013.2 272.1 1013.2 277.8 1013.2 C283.5 1013.2 289.1 1040.8 294.8 1040.8 C300.5 1040.8 306.1 1033.8 311.8 1030.5 C317.5 1027.2 323.1 1021.3 328.8 1021.3 C334.5 1021.3 340.1 1062.7 345.8 1062.7 C351.5 1062.7 357.1 1062.7 362.8 1061.5 C368.5 1060.4 374.1 1039.7 379.8 1034.0 C385.5 1028.2 391.1 1027.0 396.8 1027.0 C402.5 1027.0 408.1 1031.6 413.8 1031.6 C419.5 1031.6 425.1 1031.6 430.8 1031.6 C436.5 1031.6 442.1 1031.6 447.8 1035.1 C453.5 1038.5 459.1 1059.3 464.8 1062.7 C470.5 1066.1 476.1 1066.1 481.8 1066.1 C487.5 1066.1 493.1 1051.2 498.8 1044.3 C504.5 1037.4 510.1 1024.8 515.8 1024.8 C521.5 1024.8 527.1 1034.0 532.8 1034.0 C538.5 1034.0 544.1 1013.2 549.8 1013.2 C555.5 1013.2 561.1 1013.2 566.8 1020.1 C572.5 1027.0 578.1 1055.8 583.8 1060.4 C589.5 1065.0 595.1 1065.0 600.8 1065.0 C606.5 1065.0 612.1 1046.0 617.8 1039.7 C623.5 1033.4 629.1 1030.3 634.8 1027.0 C640.5 1023.8 646.1 1022.3 651.8 1020.1 C657.5 1018.0 663.1 1014.4 668.8 1014.4 C674.5 1014.4 680.1 1014.4 685.8 1014.4 C691.5 1014.4 697.1 1057.0 702.8 1057.0 C708.5 1057.0 714.1 1057.0 719.8 1054.6 C725.5 1052.3 731.1 1043.3 736.8 1038.5 C742.5 1033.8 748.1 1028.8 753.8 1025.9 C759.5 1023.0 765.1 1021.3 770.8 1021.3 C776.5 1021.3 782.1 1027.0 787.8 1027.0 C793.5 1027.0 799.1 1022.4 804.8 1022.4 C810.5 1022.4 816.1 1061.5 821.8 1063.8 C827.5 1066.1 833.1 1066.1 838.8 1066.1 C844.5 1066.1 850.1 1006.3 855.8 1006.3 C861.5 1006.3 867.1 1038.5 872.8 1038.5 C878.5 1038.5 884.1 1032.6 889.8 1030.5 C895.5 1028.4 901.1 1025.9 906.8 1025.9 C912.5 1025.9 918.1 1027.2 923.8 1032.8 C929.5 1038.4 935.1 1053.9 940.8 1059.2 C946.5 1064.6 952.1 1065.0 957.8 1065.0 C963.5 1065.0 969.1 1058.1 974.8 1053.5 C980.5 1048.9 986.1 1047.0 991.8 1037.4 C997.5 1027.8 1003.1 996.0 1008.8 996.0 C1014.5 996.0 1020.1 1021.5 1025.8 1028.2 C1031.5 1034.9 1037.1 1032.0 1042.8 1036.2 C1048.5 1040.5 1054.1 1049.7 1059.8 1053.5 C1065.5 1057.3 1071.1 1059.2 1076.8 1059.2 C1082.5 1059.2 1088.1 1017.8 1093.8 1017.8 C1099.5 1017.8 1105.1 1025.9 1110.8 1025.9 C1116.5 1025.9 1122.1 1008.6 1127.8 1008.6 C1133.5 1008.6 1139.1 1012.5 1144.8 1014.4 C1150.5 1016.3 1156.1 1014.7 1161.8 1021.3 C1167.5 1027.9 1173.1 1053.5 1178.8 1058.1 C1184.5 1062.7 1190.1 1062.7 1195.8 1062.7 C1201.5 1062.7 1207.1 1034.7 1212.8 1028.2 C1218.5 1021.7 1224.1 1023.5 1229.8 1021.3" fill="none" stroke="#e0161b" stroke-width="1.25" stroke-linejoin="round"/><circle cx="226.8" cy="1060.4" r="1.3" fill="#e0161b"/><circle cx="243.8" cy="1066.1" r="1.3" fill="#e0161b"/><circle cx="260.8" cy="1015.5" r="1.3" fill="#e0161b"/><circle cx="277.8" cy="1013.2" r="1.3" fill="#e0161b"/><circle cx="294.8" cy="1040.8" r="1.3" fill="#e0161b"/><circle cx="311.8" cy="1030.5" r="1.3" fill="#e0161b"/><circle cx="328.8" cy="1021.3" r="1.3" fill="#e0161b"/><circle cx="345.8" cy="1062.7" r="1.3" fill="#e0161b"/><circle cx="362.8" cy="1061.5" r="1.3" fill="#e0161b"/><circle cx="379.8" cy="1034.0" r="1.3" fill="#e0161b"/><circle cx="396.8" cy="1027.0" r="1.3" fill="#e0161b"/><circle cx="413.8" cy="1031.6" r="1.3" fill="#e0161b"/><circle cx="430.8" cy="1031.6" r="1.3" fill="#e0161b"/><circle cx="447.8" cy="1035.1" r="1.3" fill="#e0161b"/><circle cx="464.8" cy="1062.7" r="1.3" fill="#e0161b"/><circle cx="481.8" cy="1066.1" r="1.3" fill="#e0161b"/><circle cx="498.8" cy="1044.3" r="1.3" fill="#e0161b"/><circle cx="515.8" cy="1024.8" r="1.3" fill="#e0161b"/><circle cx="532.8" cy="1034.0" r="1.3" fill="#e0161b"/><circle cx="549.8" cy="1013.2" r="1.3" fill="#e0161b"/><circle cx="566.8" cy="1020.1" r="1.3" fill="#e0161b"/><circle cx="583.8" cy="1060.4" r="1.3" fill="#e0161b"/><circle cx="600.8" cy="1065.0" r="1.3" fill="#e0161b"/><circle cx="617.8" cy="1039.7" r="1.3" fill="#e0161b"/><circle cx="634.8" cy="1027.0" r="1.3" fill="#e0161b"/><circle cx="651.8" cy="1020.1" r="1.3" fill="#e0161b"/><circle cx="668.8" cy="1014.4" r="1.3" fill="#e0161b"/><circle cx="685.8" cy="1014.4" r="1.3" fill="#e0161b"/><circle cx="702.8" cy="1057.0" r="1.3" fill="#e0161b"/><circle cx="719.8" cy="1054.6" r="1.3" fill="#e0161b"/><circle cx="736.8" cy="1038.5" r="1.3" fill="#e0161b"/><circle cx="753.8" cy="1025.9" r="1.3" fill="#e0161b"/><circle cx="770.8" cy="1021.3" r="1.3" fill="#e0161b"/><circle cx="787.8" cy="1027.0" r="1.3" fill="#e0161b"/><circle cx="804.8" cy="1022.4" r="1.3" fill="#e0161b"/><circle cx="821.8" cy="1063.8" r="1.3" fill="#e0161b"/><circle cx="838.8" cy="1066.1" r="1.3" fill="#e0161b"/><circle cx="855.8" cy="1006.3" r="1.3" fill="#e0161b"/><circle cx="872.8" cy="1038.5" r="1.3" fill="#e0161b"/><circle cx="889.8" cy="1030.5" r="1.3" fill="#e0161b"/><circle cx="906.8" cy="1025.9" r="1.3" fill="#e0161b"/><circle cx="923.8" cy="1032.8" r="1.3" fill="#e0161b"/><circle cx="940.8" cy="1059.2" r="1.3" fill="#e0161b"/><circle cx="957.8" cy="1065.0" r="1.3" fill="#e0161b"/><circle cx="974.8" cy="1053.5" r="1.3" fill="#e0161b"/><circle cx="991.8" cy="1037.4" r="1.3" fill="#e0161b"/><circle cx="1008.8" cy="996.0" r="1.3" fill="#e0161b"/><circle cx="1025.8" cy="1028.2" r="1.3" fill="#e0161b"/><circle cx="1042.8" cy="1036.2" r="1.3" fill="#e0161b"/><circle cx="1059.8" cy="1053.5" r="1.3" fill="#e0161b"/><circle cx="1076.8" cy="1059.2" r="1.3" fill="#e0161b"/><circle cx="1093.8" cy="1017.8" r="1.3" fill="#e0161b"/><circle cx="1110.8" cy="1025.9" r="1.3" fill="#e0161b"/><circle cx="1127.8" cy="1008.6" r="1.3" fill="#e0161b"/><circle cx="1144.8" cy="1014.4" r="1.3" fill="#e0161b"/><circle cx="1161.8" cy="1021.3" r="1.3" fill="#e0161b"/><circle cx="1178.8" cy="1058.1" r="1.3" fill="#e0161b"/><circle cx="1195.8" cy="1062.7" r="1.3" fill="#e0161b"/><circle cx="1212.8" cy="1028.2" r="1.3" fill="#e0161b"/><circle cx="1229.8" cy="1021.3" r="1.3" fill="#e0161b"/></svg>
<div class="card" style="left:176.0px;top:1105.0px;width:536.5px;height:210.0px"></div>
<div class="ct" style="left:186.0px;top:1115.8px">Browser Fingerprint Analyzer</div>
<svg style="left:691.5px;top:1115.3px" width="10.6" height="10.6" viewBox="0 0 12 12"><circle cx="6" cy="6" r="5.1" fill="none" stroke="#3b86e8" stroke-width="1.3"/><rect x="5.4" y="5.2" width="1.2" height="3.4" rx="0.5" fill="#3b86e8"/><circle cx="6" cy="3.6" r="0.75" fill="#3b86e8"/></svg>
<svg style="left:0;top:0" width="1282" height="2109"><line x1="207.8" y1="1284.6" x2="695.5" y2="1284.6" stroke="#dfe1e6" stroke-width="0.7" stroke-dasharray="1.5 1.5"/><line x1="204.8" y1="1284.6" x2="207.8" y2="1284.6" stroke="#c9ccd6" stroke-width="0.7"/><text x="203.3" y="1286.7" class="ax" text-anchor="end" style="font-size:6.5px">0%</text><line x1="207.8" y1="1270.6" x2="695.5" y2="1270.6" stroke="#dfe1e6" stroke-width="0.7" stroke-dasharray="1.5 1.5"/><line x1="204.8" y1="1270.6" x2="207.8" y2="1270.6" stroke="#c9ccd6" stroke-width="0.7"/><text x="203.3" y="1272.7" class="ax" text-anchor="end" style="font-size:6.5px">10%</text><line x1="207.8" y1="1256.6" x2="695.5" y2="1256.6" stroke="#dfe1e6" stroke-width="0.7" stroke-dasharray="1.5 1.5"/><line x1="204.8" y1="1256.6" x2="207.8" y2="1256.6" stroke="#c9ccd6" stroke-width="0.7"/><text x="203.3" y="1258.7" class="ax" text-anchor="end" style="font-size:6.5px">20%</text><line x1="207.8" y1="1242.5" x2="695.5" y2="1242.5" stroke="#dfe1e6" stroke-width="0.7" stroke-dasharray="1.5 1.5"/><line x1="204.8" y1="1242.5" x2="207.8" y2="1242.5" stroke="#c9ccd6" stroke-width="0.7"/><text x="203.3" y="1244.6" class="ax" text-anchor="end" style="font-size:6.5px">30%</text><line x1="207.8" y1="1228.5" x2="695.5" y2="1228.5" stroke="#dfe1e6" stroke-width="0.7" stroke-dasharray="1.5 1.5"/><line x1="204.8" y1="1228.5" x2="207.8" y2="1228.5" stroke="#c9ccd6" stroke-width="0.7"/><text x="203.3" y="1230.6" class="ax" text-anchor="end" style="font-size:6.5px">40%</text><line x1="207.8" y1="1214.5" x2="695.5" y2="1214.5" stroke="#dfe1e6" stroke-width="0.7" stroke-dasharray="1.5 1.5"/><line x1="204.8" y1="1214.5" x2="207.8" y2="1214.5" stroke="#c9ccd6" stroke-width="0.7"/><text x="203.3" y="1216.6" class="ax" text-anchor="end" style="font-size:6.5px">50%</text><line x1="207.8" y1="1200.5" x2="695.5" y2="1200.5" stroke="#dfe1e6" stroke-width="0.7" stroke-dasharray="1.5 1.5"/><line x1="204.8" y1="1200.5" x2="207.8" y2="1200.5" stroke="#c9ccd6" stroke-width="0.7"/><text x="203.3" y="1202.6" class="ax" text-anchor="end" style="font-size:6.5px">60%</text><line x1="207.8" y1="1186.5" x2="695.5" y2="1186.5" stroke="#dfe1e6" stroke-width="0.7" stroke-dasharray="1.5 1.5"/><line x1="204.8" y1="1186.5" x2="207.8" y2="1186.5" stroke="#c9ccd6" stroke-width="0.7"/><text x="203.3" y="1188.6" class="ax" text-anchor="end" style="font-size:6.5px">70%</text><line x1="207.8" y1="1172.4" x2="695.5" y2="1172.4" stroke="#dfe1e6" stroke-width="0.7" stroke-dasharray="1.5 1.5"/><line x1="204.8" y1="1172.4" x2="207.8" y2="1172.4" stroke="#c9ccd6" stroke-width="0.7"/><text x="203.3" y="1174.5" class="ax" text-anchor="end" style="font-size:6.5px">80%</text><line x1="207.8" y1="1158.4" x2="695.5" y2="1158.4" stroke="#dfe1e6" stroke-width="0.7" stroke-dasharray="1.5 1.5"/><line x1="204.8" y1="1158.4" x2="207.8" y2="1158.4" stroke="#c9ccd6" stroke-width="0.7"/><text x="203.3" y="1160.5" class="ax" text-anchor="end" style="font-size:6.5px">90%</text><line x1="207.8" y1="1144.4" x2="695.5" y2="1144.4" stroke="#dfe1e6" stroke-width="0.7" stroke-dasharray="1.5 1.5"/><line x1="204.8" y1="1144.4" x2="207.8" y2="1144.4" stroke="#c9ccd6" stroke-width="0.7"/><text x="203.3" y="1146.5" class="ax" text-anchor="end" style="font-size:6.5px">100%</text><line x1="207.8" y1="1144.4" x2="207.8" y2="1284.6" stroke="#c9ccd9" stroke-width="1"/><line x1="207.8" y1="1285.1" x2="695.0" y2="1285.1" stroke="#c9ccd9" stroke-width="0.8" stroke-dasharray="1.5 1.2"/><line x1="221.5" y1="1284.6" x2="221.5" y2="1287.6" stroke="#c9ccd9" stroke-width="0.8"/><text x="221.5" y="1295.3" class="ax" text-anchor="middle" style="font-size:6.5px">Jan 04</text><line x1="279.0" y1="1284.6" x2="279.0" y2="1287.6" stroke="#c9ccd9" stroke-width="0.8"/><text x="279.0" y="1295.3" class="ax" text-anchor="middle" style="font-size:6.5px">Jan 11</text><line x1="336.5" y1="1284.6" x2="336.5" y2="1287.6" stroke="#c9ccd9" stroke-width="0.8"/><text x="336.5" y="1295.3" class="ax" text-anchor="middle" style="font-size:6.5px">Jan 18</text><line x1="394.0" y1="1284.6" x2="394.0" y2="1287.6" stroke="#c9ccd9" stroke-width="0.8"/><text x="394.0" y="1295.3" class="ax" text-anchor="middle" style="font-size:6.5px">Jan 25</text><line x1="451.5" y1="1284.6" x2="451.5" y2="1287.6" stroke="#c9ccd9" stroke-width="0.8"/><text x="451.5" y="1295.3" class="ax" text-anchor="middle" style="font-size:6.5px">February</text><line x1="508.9" y1="1284.6" x2="508.9" y2="1287.6" stroke="#c9ccd9" stroke-width="0.8"/><text x="508.9" y="1295.3" class="ax" text-anchor="middle" style="font-size:6.5px">Feb 08</text><line x1="566.4" y1="1284.6" x2="566.4" y2="1287.6" stroke="#c9ccd9" stroke-width="0.8"/><text x="566.4" y="1295.3" class="ax" text-anchor="middle" style="font-size:6.5px">Feb 15</text><line x1="623.9" y1="1284.6" x2="623.9" y2="1287.6" stroke="#c9ccd9" stroke-width="0.8"/><text x="623.9" y="1295.3" class="ax" text-anchor="middle" style="font-size:6.5px">Feb 22</text><line x1="681.4" y1="1284.6" x2="681.4" y2="1287.6" stroke="#c9ccd9" stroke-width="0.8"/><text x="681.4" y="1295.3" class="ax" text-anchor="middle" style="font-size:6.5px">March</text><line x1="210.6" y1="1284.6" x2="210.6" y2="1287.6" stroke="#c9ccd9" stroke-width="0.8"/><line x1="695.0" y1="1284.6" x2="695.0" y2="1287.6" stroke="#c9ccd9" stroke-width="0.8"/><path d="M210.6 1200.5 C213.3 1182.3 216.1 1145.8 218.8 1145.8 C221.5 1145.8 224.3 1172.4 227.0 1172.4 C229.8 1172.4 232.5 1171.0 235.2 1171.0 C238.0 1171.0 240.7 1172.4 243.4 1172.4 C246.2 1172.4 248.9 1172.4 251.7 1172.4 C254.4 1172.4 257.1 1170.6 259.9 1169.6 C262.6 1168.7 265.3 1166.8 268.1 1166.8 C270.8 1166.8 273.5 1187.9 276.3 1187.9 C279.0 1187.9 281.8 1162.6 284.5 1162.6 C287.2 1162.6 290.0 1168.2 292.7 1168.2 C295.4 1168.2 298.2 1158.4 300.9 1158.4 C303.6 1158.4 306.4 1178.0 309.1 1178.0 C311.9 1178.0 314.6 1171.0 317.3 1171.0 C320.1 1171.0 322.8 1200.5 325.5 1200.5 C328.3 1200.5 331.0 1180.6 333.8 1173.8 C336.5 1167.1 339.2 1159.8 342.0 1159.8 C344.7 1159.8 347.4 1169.6 350.2 1169.6 C352.9 1169.6 355.6 1166.8 358.4 1166.8 C361.1 1166.8 363.9 1171.0 366.6 1171.0 C369.3 1171.0 372.1 1171.0 374.8 1171.0 C377.5 1171.0 380.3 1171.0 383.0 1171.0 C385.7 1171.0 388.5 1182.3 391.2 1182.3 C394.0 1182.3 396.7 1161.2 399.4 1161.2 C402.2 1161.2 404.9 1171.0 407.6 1171.0 C410.4 1171.0 413.1 1171.0 415.9 1169.6 C418.6 1168.2 421.3 1161.2 424.1 1161.2 C426.8 1161.2 429.5 1164.7 432.3 1169.6 C435.0 1174.5 437.7 1185.1 440.5 1190.7 C443.2 1196.3 446.0 1203.3 448.7 1203.3 C451.4 1203.3 454.2 1157.0 456.9 1157.0 C459.6 1157.0 462.4 1160.8 465.1 1161.2 C467.8 1161.6 470.6 1161.3 473.3 1162.6 C476.1 1164.0 478.8 1179.5 481.5 1179.5 C484.3 1179.5 487.0 1171.0 489.7 1166.8 C492.5 1162.6 495.2 1157.7 498.0 1154.2 C500.7 1150.7 503.4 1145.8 506.2 1145.8 C508.9 1145.8 511.6 1172.4 514.4 1172.4 C517.1 1172.4 519.8 1157.0 522.6 1157.0 C525.3 1157.0 528.1 1168.2 530.8 1168.2 C533.5 1168.2 536.3 1168.2 539.0 1168.2 C541.7 1168.2 544.5 1158.4 547.2 1158.4 C549.9 1158.4 552.7 1193.5 555.4 1201.9 C558.2 1210.3 560.9 1210.3 563.6 1210.3 C566.4 1210.3 569.1 1172.4 571.8 1168.2 C574.6 1164.0 577.3 1164.0 580.1 1164.0 C582.8 1164.0 585.5 1169.6 588.3 1169.6 C591.0 1169.6 593.7 1168.2 596.5 1168.2 C599.2 1168.2 601.9 1168.2 604.7 1168.2 C607.4 1168.2 610.2 1186.5 612.9 1186.5 C615.6 1186.5 618.4 1169.6 621.1 1168.2 C623.8 1166.8 626.6 1167.0 629.3 1166.8 C632.0 1166.6 634.8 1165.4 637.5 1165.4 C640.3 1165.4 643.0 1173.8 645.7 1173.8 C648.5 1173.8 651.2 1162.6 653.9 1161.2 C656.7 1159.8 659.4 1159.8 662.2 1159.8 C664.9 1159.8 667.6 1171.0 670.4 1171.0 C673.1 1171.0 675.8 1152.8 678.6 1152.8 C681.3 1152.8 684.0 1164.1 686.8 1165.4 C689.5 1166.8 692.3 1166.6 695.0 1166.8 L695.0 1284.6 L210.6 1284.6Z" fill="#e8dbf3"/><path d="M210.6 1200.5 C213.3 1182.3 216.1 1145.8 218.8 1145.8 C221.5 1145.8 224.3 1172.4 227.0 1172.4 C229.8 1172.4 232.5 1171.0 235.2 1171.0 C238.0 1171.0 240.7 1172.4 243.4 1172.4 C246.2 1172.4 248.9 1172.4 251.7 1172.4 C254.4 1172.4 257.1 1170.6 259.9 1169.6 C262.6 1168.7 265.3 1166.8 268.1 1166.8 C270.8 1166.8 273.5 1187.9 276.3 1187.9 C279.0 1187.9 281.8 1162.6 284.5 1162.6 C287.2 1162.6 290.0 1168.2 292.7 1168.2 C295.4 1168.2 298.2 1158.4 300.9 1158.4 C303.6 1158.4 306.4 1178.0 309.1 1178.0 C311.9 1178.0 314.6 1171.0 317.3 1171.0 C320.1 1171.0 322.8 1200.5 325.5 1200.5 C328.3 1200.5 331.0 1180.6 333.8 1173.8 C336.5 1167.1 339.2 1159.8 342.0 1159.8 C344.7 1159.8 347.4 1169.6 350.2 1169.6 C352.9 1169.6 355.6 1166.8 358.4 1166.8 C361.1 1166.8 363.9 1171.0 366.6 1171.0 C369.3 1171.0 372.1 1171.0 374.8 1171.0 C377.5 1171.0 380.3 1171.0 383.0 1171.0 C385.7 1171.0 388.5 1182.3 391.2 1182.3 C394.0 1182.3 396.7 1161.2 399.4 1161.2 C402.2 1161.2 404.9 1171.0 407.6 1171.0 C410.4 1171.0 413.1 1171.0 415.9 1169.6 C418.6 1168.2 421.3 1161.2 424.1 1161.2 C426.8 1161.2 429.5 1164.7 432.3 1169.6 C435.0 1174.5 437.7 1185.1 440.5 1190.7 C443.2 1196.3 446.0 1203.3 448.7 1203.3 C451.4 1203.3 454.2 1157.0 456.9 1157.0 C459.6 1157.0 462.4 1160.8 465.1 1161.2 C467.8 1161.6 470.6 1161.3 473.3 1162.6 C476.1 1164.0 478.8 1179.5 481.5 1179.5 C484.3 1179.5 487.0 1171.0 489.7 1166.8 C492.5 1162.6 495.2 1157.7 498.0 1154.2 C500.7 1150.7 503.4 1145.8 506.2 1145.8 C508.9 1145.8 511.6 1172.4 514.4 1172.4 C517.1 1172.4 519.8 1157.0 522.6 1157.0 C525.3 1157.0 528.1 1168.2 530.8 1168.2 C533.5 1168.2 536.3 1168.2 539.0 1168.2 C541.7 1168.2 544.5 1158.4 547.2 1158.4 C549.9 1158.4 552.7 1193.5 555.4 1201.9 C558.2 1210.3 560.9 1210.3 563.6 1210.3 C566.4 1210.3 569.1 1172.4 571.8 1168.2 C574.6 1164.0 577.3 1164.0 580.1 1164.0 C582.8 1164.0 585.5 1169.6 588.3 1169.6 C591.0 1169.6 593.7 1168.2 596.5 1168.2 C599.2 1168.2 601.9 1168.2 604.7 1168.2 C607.4 1168.2 610.2 1186.5 612.9 1186.5 C615.6 1186.5 618.4 1169.6 621.1 1168.2 C623.8 1166.8 626.6 1167.0 629.3 1166.8 C632.0 1166.6 634.8 1165.4 637.5 1165.4 C640.3 1165.4 643.0 1173.8 645.7 1173.8 C648.5 1173.8 651.2 1162.6 653.9 1161.2 C656.7 1159.8 659.4 1159.8 662.2 1159.8 C664.9 1159.8 667.6 1171.0 670.4 1171.0 C673.1 1171.0 675.8 1152.8 678.6 1152.8 C681.3 1152.8 684.0 1164.1 686.8 1165.4 C689.5 1166.8 692.3 1166.6 695.0 1166.8" fill="none" stroke="#8b40c8" stroke-width="1.25" stroke-linejoin="round"/><circle cx="210.6" cy="1200.5" r="1.3" fill="#8b40c8"/><circle cx="218.8" cy="1145.8" r="1.3" fill="#8b40c8"/><circle cx="227.0" cy="1172.4" r="1.3" fill="#8b40c8"/><circle cx="235.2" cy="1171.0" r="1.3" fill="#8b40c8"/><circle cx="243.4" cy="1172.4" r="1.3" fill="#8b40c8"/><circle cx="251.7" cy="1172.4" r="1.3" fill="#8b40c8"/><circle cx="259.9" cy="1169.6" r="1.3" fill="#8b40c8"/><circle cx="268.1" cy="1166.8" r="1.3" fill="#8b40c8"/><circle cx="276.3" cy="1187.9" r="1.3" fill="#8b40c8"/><circle cx="284.5" cy="1162.6" r="1.3" fill="#8b40c8"/><circle cx="292.7" cy="1168.2" r="1.3" fill="#8b40c8"/><circle cx="300.9" cy="1158.4" r="1.3" fill="#8b40c8"/><circle cx="309.1" cy="1178.0" r="1.3" fill="#8b40c8"/><circle cx="317.3" cy="1171.0" r="1.3" fill="#8b40c8"/><circle cx="325.5" cy="1200.5" r="1.3" fill="#8b40c8"/><circle cx="333.8" cy="1173.8" r="1.3" fill="#8b40c8"/><circle cx="342.0" cy="1159.8" r="1.3" fill="#8b40c8"/><circle cx="350.2" cy="1169.6" r="1.3" fill="#8b40c8"/><circle cx="358.4" cy="1166.8" r="1.3" fill="#8b40c8"/><circle cx="366.6" cy="1171.0" r="1.3" fill="#8b40c8"/><circle cx="374.8" cy="1171.0" r="1.3" fill="#8b40c8"/><circle cx="383.0" cy="1171.0" r="1.3" fill="#8b40c8"/><circle cx="391.2" cy="1182.3" r="1.3" fill="#8b40c8"/><circle cx="399.4" cy="1161.2" r="1.3" fill="#8b40c8"/><circle cx="407.6" cy="1171.0" r="1.3" fill="#8b40c8"/><circle cx="415.9" cy="1169.6" r="1.3" fill="#8b40c8"/><circle cx="424.1" cy="1161.2" r="1.3" fill="#8b40c8"/><circle cx="432.3" cy="1169.6" r="1.3" fill="#8b40c8"/><circle cx="440.5" cy="1190.7" r="1.3" fill="#8b40c8"/><circle cx="448.7" cy="1203.3" r="1.3" fill="#8b40c8"/><circle cx="456.9" cy="1157.0" r="1.3" fill="#8b40c8"/><circle cx="465.1" cy="1161.2" r="1.3" fill="#8b40c8"/><circle cx="473.3" cy="1162.6" r="1.3" fill="#8b40c8"/><circle cx="481.5" cy="1179.5" r="1.3" fill="#8b40c8"/><circle cx="489.7" cy="1166.8" r="1.3" fill="#8b40c8"/><circle cx="498.0" cy="1154.2" r="1.3" fill="#8b40c8"/><circle cx="506.2" cy="1145.8" r="1.3" fill="#8b40c8"/><circle cx="514.4" cy="1172.4" r="1.3" fill="#8b40c8"/><circle cx="522.6" cy="1157.0" r="1.3" fill="#8b40c8"/><circle cx="530.8" cy="1168.2" r="1.3" fill="#8b40c8"/><circle cx="539.0" cy="1168.2" r="1.3" fill="#8b40c8"/><circle cx="547.2" cy="1158.4" r="1.3" fill="#8b40c8"/><circle cx="555.4" cy="1201.9" r="1.3" fill="#8b40c8"/><circle cx="563.6" cy="1210.3" r="1.3" fill="#8b40c8"/><circle cx="571.8" cy="1168.2" r="1.3" fill="#8b40c8"/><circle cx="580.1" cy="1164.0" r="1.3" fill="#8b40c8"/><circle cx="588.3" cy="1169.6" r="1.3" fill="#8b40c8"/><circle cx="596.5" cy="1168.2" r="1.3" fill="#8b40c8"/><circle cx="604.7" cy="1168.2" r="1.3" fill="#8b40c8"/><circle cx="612.9" cy="1186.5" r="1.3" fill="#8b40c8"/><circle cx="621.1" cy="1168.2" r="1.3" fill="#8b40c8"/><circle cx="629.3" cy="1166.8" r="1.3" fill="#8b40c8"/><circle cx="637.5" cy="1165.4" r="1.3" fill="#8b40c8"/><circle cx="645.7" cy="1173.8" r="1.3" fill="#8b40c8"/><circle cx="653.9" cy="1161.2" r="1.3" fill="#8b40c8"/><circle cx="662.2" cy="1159.8" r="1.3" fill="#8b40c8"/><circle cx="670.4" cy="1171.0" r="1.3" fill="#8b40c8"/><circle cx="678.6" cy="1152.8" r="1.3" fill="#8b40c8"/><circle cx="686.8" cy="1165.4" r="1.3" fill="#8b40c8"/><circle cx="695.0" cy="1166.8" r="1.3" fill="#8b40c8"/></svg>
<div class="card" style="left:719.0px;top:1105.0px;width:536.5px;height:210.0px"></div>
<div class="ct" style="left:729.0px;top:1115.8px">IP Analyzer</div>
<svg style="left:1234.5px;top:1115.3px" width="10.6" height="10.6" viewBox="0 0 12 12"><circle cx="6" cy="6" r="5.1" fill="none" stroke="#3b86e8" stroke-width="1.3"/><rect x="5.4" y="5.2" width="1.2" height="3.4" rx="0.5" fill="#3b86e8"/><circle cx="6" cy="3.6" r="0.75" fill="#3b86e8"/></svg>
<svg style="left:0;top:0" width="1282" height="2109"><line x1="750.4" y1="1284.6" x2="1238.1" y2="1284.6" stroke="#dfe1e6" stroke-width="0.7" stroke-dasharray="1.5 1.5"/><line x1="747.4" y1="1284.6" x2="750.4" y2="1284.6" stroke="#c9ccd6" stroke-width="0.7"/><text x="745.9" y="1286.7" class="ax" text-anchor="end" style="font-size:6.5px">0%</text><line x1="750.4" y1="1270.6" x2="1238.1" y2="1270.6" stroke="#dfe1e6" stroke-width="0.7" stroke-dasharray="1.5 1.5"/><line x1="747.4" y1="1270.6" x2="750.4" y2="1270.6" stroke="#c9ccd6" stroke-width="0.7"/><text x="745.9" y="1272.7" class="ax" text-anchor="end" style="font-size:6.5px">10%</text><line x1="750.4" y1="1256.6" x2="1238.1" y2="1256.6" stroke="#dfe1e6" stroke-width="0.7" stroke-dasharray="1.5 1.5"/><line x1="747.4" y1="1256.6" x2="750.4" y2="1256.6" stroke="#c9ccd6" stroke-width="0.7"/><text x="745.9" y="1258.7" class="ax" text-anchor="end" style="font-size:6.5px">20%</text><line x1="750.4" y1="1242.5" x2="1238.1" y2="1242.5" stroke="#dfe1e6" stroke-width="0.7" stroke-dasharray="1.5 1.5"/><line x1="747.4" y1="1242.5" x2="750.4" y2="1242.5" stroke="#c9ccd6" stroke-width="0.7"/><text x="745.9" y="1244.6" class="ax" text-anchor="end" style="font-size:6.5px">30%</text><line x1="750.4" y1="1228.5" x2="1238.1" y2="1228.5" stroke="#dfe1e6" stroke-width="0.7" stroke-dasharray="1.5 1.5"/><line x1="747.4" y1="1228.5" x2="750.4" y2="1228.5" stroke="#c9ccd6" stroke-width="0.7"/><text x="745.9" y="1230.6" class="ax" text-anchor="end" style="font-size:6.5px">40%</text><line x1="750.4" y1="1214.5" x2="1238.1" y2="1214.5" stroke="#dfe1e6" stroke-width="0.7" stroke-dasharray="1.5 1.5"/><line x1="747.4" y1="1214.5" x2="750.4" y2="1214.5" stroke="#c9ccd6" stroke-width="0.7"/><text x="745.9" y="1216.6" class="ax" text-anchor="end" style="font-size:6.5px">50%</text><line x1="750.4" y1="1200.5" x2="1238.1" y2="1200.5" stroke="#dfe1e6" stroke-width="0.7" stroke-dasharray="1.5 1.5"/><line x1="747.4" y1="1200.5" x2="750.4" y2="1200.5" stroke="#c9ccd6" stroke-width="0.7"/><text x="745.9" y="1202.6" class="ax" text-anchor="end" style="font-size:6.5px">60%</text><line x1="750.4" y1="1186.5" x2="1238.1" y2="1186.5" stroke="#dfe1e6" stroke-width="0.7" stroke-dasharray="1.5 1.5"/><line x1="747.4" y1="1186.5" x2="750.4" y2="1186.5" stroke="#c9ccd6" stroke-width="0.7"/><text x="745.9" y="1188.6" class="ax" text-anchor="end" style="font-size:6.5px">70%</text><line x1="750.4" y1="1172.4" x2="1238.1" y2="1172.4" stroke="#dfe1e6" stroke-width="0.7" stroke-dasharray="1.5 1.5"/><line x1="747.4" y1="1172.4" x2="750.4" y2="1172.4" stroke="#c9ccd6" stroke-width="0.7"/><text x="745.9" y="1174.5" class="ax" text-anchor="end" style="font-size:6.5px">80%</text><line x1="750.4" y1="1158.4" x2="1238.1" y2="1158.4" stroke="#dfe1e6" stroke-width="0.7" stroke-dasharray="1.5 1.5"/><line x1="747.4" y1="1158.4" x2="750.4" y2="1158.4" stroke="#c9ccd6" stroke-width="0.7"/><text x="745.9" y="1160.5" class="ax" text-anchor="end" style="font-size:6.5px">90%</text><line x1="750.4" y1="1144.4" x2="1238.1" y2="1144.4" stroke="#dfe1e6" stroke-width="0.7" stroke-dasharray="1.5 1.5"/><line x1="747.4" y1="1144.4" x2="750.4" y2="1144.4" stroke="#c9ccd6" stroke-width="0.7"/><text x="745.9" y="1146.5" class="ax" text-anchor="end" style="font-size:6.5px">100%</text><line x1="750.4" y1="1144.4" x2="750.4" y2="1284.6" stroke="#c9ccd9" stroke-width="1"/><line x1="750.4" y1="1285.1" x2="1237.6" y2="1285.1" stroke="#c9ccd9" stroke-width="0.8" stroke-dasharray="1.5 1.2"/><line x1="764.1" y1="1284.6" x2="764.1" y2="1287.6" stroke="#c9ccd9" stroke-width="0.8"/><text x="764.1" y="1295.3" class="ax" text-anchor="middle" style="font-size:6.5px">Jan 04</text><line x1="821.6" y1="1284.6" x2="821.6" y2="1287.6" stroke="#c9ccd9" stroke-width="0.8"/><text x="821.6" y="1295.3" class="ax" text-anchor="middle" style="font-size:6.5px">Jan 11</text><line x1="879.1" y1="1284.6" x2="879.1" y2="1287.6" stroke="#c9ccd9" stroke-width="0.8"/><text x="879.1" y="1295.3" class="ax" text-anchor="middle" style="font-size:6.5px">Jan 18</text><line x1="936.6" y1="1284.6" x2="936.6" y2="1287.6" stroke="#c9ccd9" stroke-width="0.8"/><text x="936.6" y="1295.3" class="ax" text-anchor="middle" style="font-size:6.5px">Jan 25</text><line x1="994.1" y1="1284.6" x2="994.1" y2="1287.6" stroke="#c9ccd9" stroke-width="0.8"/><text x="994.1" y="1295.3" class="ax" text-anchor="middle" style="font-size:6.5px">February</text><line x1="1051.5" y1="1284.6" x2="1051.5" y2="1287.6" stroke="#c9ccd9" stroke-width="0.8"/><text x="1051.5" y="1295.3" class="ax" text-anchor="middle" style="font-size:6.5px">Feb 08</text><line x1="1109.0" y1="1284.6" x2="1109.0" y2="1287.6" stroke="#c9ccd9" stroke-width="0.8"/><text x="1109.0" y="1295.3" class="ax" text-anchor="middle" style="font-size:6.5px">Feb 15</text><line x1="1166.5" y1="1284.6" x2="1166.5" y2="1287.6" stroke="#c9ccd9" stroke-width="0.8"/><text x="1166.5" y="1295.3" class="ax" text-anchor="middle" style="font-size:6.5px">Feb 22</text><line x1="1224.0" y1="1284.6" x2="1224.0" y2="1287.6" stroke="#c9ccd9" stroke-width="0.8"/><text x="1224.0" y="1295.3" class="ax" text-anchor="middle" style="font-size:6.5px">March</text><line x1="753.2" y1="1284.6" x2="753.2" y2="1287.6" stroke="#c9ccd9" stroke-width="0.8"/><line x1="1237.6" y1="1284.6" x2="1237.6" y2="1287.6" stroke="#c9ccd9" stroke-width="0.8"/><path d="M753.2 1259.4 C755.9 1221.5 758.7 1145.8 761.4 1145.8 C764.1 1145.8 766.9 1186.5 769.6 1186.5 C772.4 1186.5 775.1 1181.6 777.8 1179.5 C780.6 1177.3 783.3 1173.8 786.0 1173.8 C788.8 1173.8 791.5 1173.8 794.2 1175.2 C797.0 1176.6 799.7 1177.3 802.5 1182.3 C805.2 1187.2 807.9 1197.4 810.7 1204.7 C813.4 1211.9 816.1 1225.7 818.9 1225.7 C821.6 1225.7 824.4 1182.3 827.1 1182.3 C829.8 1182.3 832.6 1184.4 835.3 1186.5 C838.0 1188.6 840.8 1194.9 843.5 1194.9 C846.2 1194.9 849.0 1180.9 851.7 1180.9 C854.5 1180.9 857.2 1182.3 859.9 1182.3 C862.7 1182.3 865.4 1162.6 868.1 1162.6 C870.9 1162.6 873.6 1164.5 876.4 1168.2 C879.1 1172.0 881.8 1185.1 884.6 1185.1 C887.3 1185.1 890.0 1180.9 892.8 1179.5 C895.5 1178.0 898.2 1176.6 901.0 1176.6 C903.7 1176.6 906.5 1193.5 909.2 1193.5 C911.9 1193.5 914.7 1181.6 917.4 1178.0 C920.1 1174.5 922.9 1172.4 925.6 1172.4 C928.3 1172.4 931.1 1172.4 933.8 1173.8 C936.6 1175.2 939.3 1180.9 942.0 1180.9 C944.8 1180.9 947.5 1172.4 950.2 1172.4 C953.0 1172.4 955.7 1183.7 958.5 1183.7 C961.2 1183.7 963.9 1183.0 966.7 1180.9 C969.4 1178.7 972.1 1171.0 974.9 1171.0 C977.6 1171.0 980.3 1199.1 983.1 1199.1 C985.8 1199.1 988.6 1190.7 991.3 1186.5 C994.0 1182.3 996.8 1173.8 999.5 1173.8 C1002.2 1173.8 1005.0 1175.2 1007.7 1176.6 C1010.4 1178.0 1013.2 1182.3 1015.9 1182.3 C1018.7 1182.3 1021.4 1178.0 1024.1 1178.0 C1026.9 1178.0 1029.6 1182.3 1032.3 1182.3 C1035.1 1182.3 1037.8 1151.4 1040.6 1151.4 C1043.3 1151.4 1046.0 1183.7 1048.8 1187.9 C1051.5 1192.1 1054.2 1192.1 1057.0 1192.1 C1059.7 1192.1 1062.4 1176.6 1065.2 1172.4 C1067.9 1168.2 1070.7 1166.8 1073.4 1166.8 C1076.1 1166.8 1078.9 1179.5 1081.6 1179.5 C1084.3 1179.5 1087.1 1168.2 1089.8 1168.2 C1092.5 1168.2 1095.3 1172.7 1098.0 1176.6 C1100.8 1180.6 1103.5 1192.1 1106.2 1192.1 C1109.0 1192.1 1111.7 1178.3 1114.4 1173.8 C1117.2 1169.4 1119.9 1165.4 1122.7 1165.4 C1125.4 1165.4 1128.1 1178.0 1130.9 1178.0 C1133.6 1178.0 1136.3 1158.4 1139.1 1158.4 C1141.8 1158.4 1144.5 1194.2 1147.3 1214.5 C1150.0 1234.8 1152.8 1280.4 1155.5 1280.4 C1158.2 1280.4 1161.0 1280.4 1163.7 1280.4 C1166.4 1280.4 1169.2 1161.2 1171.9 1161.2 C1174.6 1161.2 1177.4 1173.1 1180.1 1176.6 C1182.9 1180.2 1185.6 1180.4 1188.3 1182.3 C1191.1 1184.1 1193.8 1185.3 1196.5 1187.9 C1199.3 1190.4 1202.0 1197.7 1204.8 1197.7 C1207.5 1197.7 1210.2 1187.9 1213.0 1185.1 C1215.7 1182.3 1218.4 1183.2 1221.2 1180.9 C1223.9 1178.5 1226.6 1171.0 1229.4 1171.0 C1232.1 1171.0 1234.9 1176.6 1237.6 1179.5 L1237.6 1284.6 L753.2 1284.6Z" fill="#d6eedd"/><path d="M753.2 1259.4 C755.9 1221.5 758.7 1145.8 761.4 1145.8 C764.1 1145.8 766.9 1186.5 769.6 1186.5 C772.4 1186.5 775.1 1181.6 777.8 1179.5 C780.6 1177.3 783.3 1173.8 786.0 1173.8 C788.8 1173.8 791.5 1173.8 794.2 1175.2 C797.0 1176.6 799.7 1177.3 802.5 1182.3 C805.2 1187.2 807.9 1197.4 810.7 1204.7 C813.4 1211.9 816.1 1225.7 818.9 1225.7 C821.6 1225.7 824.4 1182.3 827.1 1182.3 C829.8 1182.3 832.6 1184.4 835.3 1186.5 C838.0 1188.6 840.8 1194.9 843.5 1194.9 C846.2 1194.9 849.0 1180.9 851.7 1180.9 C854.5 1180.9 857.2 1182.3 859.9 1182.3 C862.7 1182.3 865.4 1162.6 868.1 1162.6 C870.9 1162.6 873.6 1164.5 876.4 1168.2 C879.1 1172.0 881.8 1185.1 884.6 1185.1 C887.3 1185.1 890.0 1180.9 892.8 1179.5 C895.5 1178.0 898.2 1176.6 901.0 1176.6 C903.7 1176.6 906.5 1193.5 909.2 1193.5 C911.9 1193.5 914.7 1181.6 917.4 1178.0 C920.1 1174.5 922.9 1172.4 925.6 1172.4 C928.3 1172.4 931.1 1172.4 933.8 1173.8 C936.6 1175.2 939.3 1180.9 942.0 1180.9 C944.8 1180.9 947.5 1172.4 950.2 1172.4 C953.0 1172.4 955.7 1183.7 958.5 1183.7 C961.2 1183.7 963.9 1183.0 966.7 1180.9 C969.4 1178.7 972.1 1171.0 974.9 1171.0 C977.6 1171.0 980.3 1199.1 983.1 1199.1 C985.8 1199.1 988.6 1190.7 991.3 1186.5 C994.0 1182.3 996.8 1173.8 999.5 1173.8 C1002.2 1173.8 1005.0 1175.2 1007.7 1176.6 C1010.4 1178.0 1013.2 1182.3 1015.9 1182.3 C1018.7 1182.3 1021.4 1178.0 1024.1 1178.0 C1026.9 1178.0 1029.6 1182.3 1032.3 1182.3 C1035.1 1182.3 1037.8 1151.4 1040.6 1151.4 C1043.3 1151.4 1046.0 1183.7 1048.8 1187.9 C1051.5 1192.1 1054.2 1192.1 1057.0 1192.1 C1059.7 1192.1 1062.4 1176.6 1065.2 1172.4 C1067.9 1168.2 1070.7 1166.8 1073.4 1166.8 C1076.1 1166.8 1078.9 1179.5 1081.6 1179.5 C1084.3 1179.5 1087.1 1168.2 1089.8 1168.2 C1092.5 1168.2 1095.3 1172.7 1098.0 1176.6 C1100.8 1180.6 1103.5 1192.1 1106.2 1192.1 C1109.0 1192.1 1111.7 1178.3 1114.4 1173.8 C1117.2 1169.4 1119.9 1165.4 1122.7 1165.4 C1125.4 1165.4 1128.1 1178.0 1130.9 1178.0 C1133.6 1178.0 1136.3 1158.4 1139.1 1158.4 C1141.8 1158.4 1144.5 1194.2 1147.3 1214.5 C1150.0 1234.8 1152.8 1280.4 1155.5 1280.4 C1158.2 1280.4 1161.0 1280.4 1163.7 1280.4 C1166.4 1280.4 1169.2 1161.2 1171.9 1161.2 C1174.6 1161.2 1177.4 1173.1 1180.1 1176.6 C1182.9 1180.2 1185.6 1180.4 1188.3 1182.3 C1191.1 1184.1 1193.8 1185.3 1196.5 1187.9 C1199.3 1190.4 1202.0 1197.7 1204.8 1197.7 C1207.5 1197.7 1210.2 1187.9 1213.0 1185.1 C1215.7 1182.3 1218.4 1183.2 1221.2 1180.9 C1223.9 1178.5 1226.6 1171.0 1229.4 1171.0 C1232.1 1171.0 1234.9 1176.6 1237.6 1179.5" fill="none" stroke="#15a04a" stroke-width="1.25" stroke-linejoin="round"/><circle cx="753.2" cy="1259.4" r="1.3" fill="#15a04a"/><circle cx="761.4" cy="1145.8" r="1.3" fill="#15a04a"/><circle cx="769.6" cy="1186.5" r="1.3" fill="#15a04a"/><circle cx="777.8" cy="1179.5" r="1.3" fill="#15a04a"/><circle cx="786.0" cy="1173.8" r="1.3" fill="#15a04a"/><circle cx="794.2" cy="1175.2" r="1.3" fill="#15a04a"/><circle cx="802.5" cy="1182.3" r="1.3" fill="#15a04a"/><circle cx="810.7" cy="1204.7" r="1.3" fill="#15a04a"/><circle cx="818.9" cy="1225.7" r="1.3" fill="#15a04a"/><circle cx="827.1" cy="1182.3" r="1.3" fill="#15a04a"/><circle cx="835.3" cy="1186.5" r="1.3" fill="#15a04a"/><circle cx="843.5" cy="1194.9" r="1.3" fill="#15a04a"/><circle cx="851.7" cy="1180.9" r="1.3" fill="#15a04a"/><circle cx="859.9" cy="1182.3" r="1.3" fill="#15a04a"/><circle cx="868.1" cy="1162.6" r="1.3" fill="#15a04a"/><circle cx="876.4" cy="1168.2" r="1.3" fill="#15a04a"/><circle cx="884.6" cy="1185.1" r="1.3" fill="#15a04a"/><circle cx="892.8" cy="1179.5" r="1.3" fill="#15a04a"/><circle cx="901.0" cy="1176.6" r="1.3" fill="#15a04a"/><circle cx="909.2" cy="1193.5" r="1.3" fill="#15a04a"/><circle cx="917.4" cy="1178.0" r="1.3" fill="#15a04a"/><circle cx="925.6" cy="1172.4" r="1.3" fill="#15a04a"/><circle cx="933.8" cy="1173.8" r="1.3" fill="#15a04a"/><circle cx="942.0" cy="1180.9" r="1.3" fill="#15a04a"/><circle cx="950.2" cy="1172.4" r="1.3" fill="#15a04a"/><circle cx="958.5" cy="1183.7" r="1.3" fill="#15a04a"/><circle cx="966.7" cy="1180.9" r="1.3" fill="#15a04a"/><circle cx="974.9" cy="1171.0" r="1.3" fill="#15a04a"/><circle cx="983.1" cy="1199.1" r="1.3" fill="#15a04a"/><circle cx="991.3" cy="1186.5" r="1.3" fill="#15a04a"/><circle cx="999.5" cy="1173.8" r="1.3" fill="#15a04a"/><circle cx="1007.7" cy="1176.6" r="1.3" fill="#15a04a"/><circle cx="1015.9" cy="1182.3" r="1.3" fill="#15a04a"/><circle cx="1024.1" cy="1178.0" r="1.3" fill="#15a04a"/><circle cx="1032.3" cy="1182.3" r="1.3" fill="#15a04a"/><circle cx="1040.6" cy="1151.4" r="1.3" fill="#15a04a"/><circle cx="1048.8" cy="1187.9" r="1.3" fill="#15a04a"/><circle cx="1057.0" cy="1192.1" r="1.3" fill="#15a04a"/><circle cx="1065.2" cy="1172.4" r="1.3" fill="#15a04a"/><circle cx="1073.4" cy="1166.8" r="1.3" fill="#15a04a"/><circle cx="1081.6" cy="1179.5" r="1.3" fill="#15a04a"/><circle cx="1089.8" cy="1168.2" r="1.3" fill="#15a04a"/><circle cx="1098.0" cy="1176.6" r="1.3" fill="#15a04a"/><circle cx="1106.2" cy="1192.1" r="1.3" fill="#15a04a"/><circle cx="1114.4" cy="1173.8" r="1.3" fill="#15a04a"/><circle cx="1122.7" cy="1165.4" r="1.3" fill="#15a04a"/><circle cx="1130.9" cy="1178.0" r="1.3" fill="#15a04a"/><circle cx="1139.1" cy="1158.4" r="1.3" fill="#15a04a"/><circle cx="1147.3" cy="1214.5" r="1.3" fill="#15a04a"/><circle cx="1155.5" cy="1280.4" r="1.3" fill="#15a04a"/><circle cx="1163.7" cy="1280.4" r="1.3" fill="#15a04a"/><circle cx="1171.9" cy="1161.2" r="1.3" fill="#15a04a"/><circle cx="1180.1" cy="1176.6" r="1.3" fill="#15a04a"/><circle cx="1188.3" cy="1182.3" r="1.3" fill="#15a04a"/><circle cx="1196.5" cy="1187.9" r="1.3" fill="#15a04a"/><circle cx="1204.8" cy="1197.7" r="1.3" fill="#15a04a"/><circle cx="1213.0" cy="1185.1" r="1.3" fill="#15a04a"/><circle cx="1221.2" cy="1180.9" r="1.3" fill="#15a04a"/><circle cx="1229.4" cy="1171.0" r="1.3" fill="#15a04a"/><circle cx="1237.6" cy="1179.5" r="1.3" fill="#15a04a"/></svg>
<div class="card" style="left:176.0px;top:1322.0px;width:536.5px;height:210.0px"></div>
<div class="ct" style="left:186.0px;top:1332.8px">Location Analyzer</div>
<svg style="left:691.5px;top:1332.3px" width="10.6" height="10.6" viewBox="0 0 12 12"><circle cx="6" cy="6" r="5.1" fill="none" stroke="#3b86e8" stroke-width="1.3"/><rect x="5.4" y="5.2" width="1.2" height="3.4" rx="0.5" fill="#3b86e8"/><circle cx="6" cy="3.6" r="0.75" fill="#3b86e8"/></svg>
<svg style="left:0;top:0" width="1282" height="2109"><line x1="207.8" y1="1501.6" x2="695.5" y2="1501.6" stroke="#dfe1e6" stroke-width="0.7" stroke-dasharray="1.5 1.5"/><line x1="204.8" y1="1501.6" x2="207.8" y2="1501.6" stroke="#c9ccd6" stroke-width="0.7"/><text x="203.3" y="1503.7" class="ax" text-anchor="end" style="font-size:6.5px">0%</text><line x1="207.8" y1="1487.6" x2="695.5" y2="1487.6" stroke="#dfe1e6" stroke-width="0.7" stroke-dasharray="1.5 1.5"/><line x1="204.8" y1="1487.6" x2="207.8" y2="1487.6" stroke="#c9ccd6" stroke-width="0.7"/><text x="203.3" y="1489.7" class="ax" text-anchor="end" style="font-size:6.5px">10%</text><line x1="207.8" y1="1473.6" x2="695.5" y2="1473.6" stroke="#dfe1e6" stroke-width="0.7" stroke-dasharray="1.5 1.5"/><line x1="204.8" y1="1473.6" x2="207.8" y2="1473.6" stroke="#c9ccd6" stroke-width="0.7"/><text x="203.3" y="1475.7" class="ax" text-anchor="end" style="font-size:6.5px">20%</text><line x1="207.8" y1="1459.5" x2="695.5" y2="1459.5" stroke="#dfe1e6" stroke-width="0.7" stroke-dasharray="1.5 1.5"/><line x1="204.8" y1="1459.5" x2="207.8" y2="1459.5" stroke="#c9ccd6" stroke-width="0.7"/><text x="203.3" y="1461.6" class="ax" text-anchor="end" style="font-size:6.5px">30%</text><line x1="207.8" y1="1445.5" x2="695.5" y2="1445.5" stroke="#dfe1e6" stroke-width="0.7" stroke-dasharray="1.5 1.5"/><line x1="204.8" y1="1445.5" x2="207.8" y2="1445.5" stroke="#c9ccd6" stroke-width="0.7"/><text x="203.3" y="1447.6" class="ax" text-anchor="end" style="font-size:6.5px">40%</text><line x1="207.8" y1="1431.5" x2="695.5" y2="1431.5" stroke="#dfe1e6" stroke-width="0.7" stroke-dasharray="1.5 1.5"/><line x1="204.8" y1="1431.5" x2="207.8" y2="1431.5" stroke="#c9ccd6" stroke-width="0.7"/><text x="203.3" y="1433.6" class="ax" text-anchor="end" style="font-size:6.5px">50%</text><line x1="207.8" y1="1417.5" x2="695.5" y2="1417.5" stroke="#dfe1e6" stroke-width="0.7" stroke-dasharray="1.5 1.5"/><line x1="204.8" y1="1417.5" x2="207.8" y2="1417.5" stroke="#c9ccd6" stroke-width="0.7"/><text x="203.3" y="1419.6" class="ax" text-anchor="end" style="font-size:6.5px">60%</text><line x1="207.8" y1="1403.5" x2="695.5" y2="1403.5" stroke="#dfe1e6" stroke-width="0.7" stroke-dasharray="1.5 1.5"/><line x1="204.8" y1="1403.5" x2="207.8" y2="1403.5" stroke="#c9ccd6" stroke-width="0.7"/><text x="203.3" y="1405.6" class="ax" text-anchor="end" style="font-size:6.5px">70%</text><line x1="207.8" y1="1389.4" x2="695.5" y2="1389.4" stroke="#dfe1e6" stroke-width="0.7" stroke-dasharray="1.5 1.5"/><line x1="204.8" y1="1389.4" x2="207.8" y2="1389.4" stroke="#c9ccd6" stroke-width="0.7"/><text x="203.3" y="1391.5" class="ax" text-anchor="end" style="font-size:6.5px">80%</text><line x1="207.8" y1="1375.4" x2="695.5" y2="1375.4" stroke="#dfe1e6" stroke-width="0.7" stroke-dasharray="1.5 1.5"/><line x1="204.8" y1="1375.4" x2="207.8" y2="1375.4" stroke="#c9ccd6" stroke-width="0.7"/><text x="203.3" y="1377.5" class="ax" text-anchor="end" style="font-size:6.5px">90%</text><line x1="207.8" y1="1361.4" x2="695.5" y2="1361.4" stroke="#dfe1e6" stroke-width="0.7" stroke-dasharray="1.5 1.5"/><line x1="204.8" y1="1361.4" x2="207.8" y2="1361.4" stroke="#c9ccd6" stroke-width="0.7"/><text x="203.3" y="1363.5" class="ax" text-anchor="end" style="font-size:6.5px">100%</text><line x1="207.8" y1="1361.4" x2="207.8" y2="1501.6" stroke="#c9ccd9" stroke-width="1"/><line x1="207.8" y1="1502.1" x2="695.0" y2="1502.1" stroke="#c9ccd9" stroke-width="0.8" stroke-dasharray="1.5 1.2"/><line x1="221.5" y1="1501.6" x2="221.5" y2="1504.6" stroke="#c9ccd9" stroke-width="0.8"/><text x="221.5" y="1512.3" class="ax" text-anchor="middle" style="font-size:6.5px">Jan 04</text><line x1="279.0" y1="1501.6" x2="279.0" y2="1504.6" stroke="#c9ccd9" stroke-width="0.8"/><text x="279.0" y="1512.3" class="ax" text-anchor="middle" style="font-size:6.5px">Jan 11</text><line x1="336.5" y1="1501.6" x2="336.5" y2="1504.6" stroke="#c9ccd9" stroke-width="0.8"/><text x="336.5" y="1512.3" class="ax" text-anchor="middle" style="font-size:6.5px">Jan 18</text><line x1="394.0" y1="1501.6" x2="394.0" y2="1504.6" stroke="#c9ccd9" stroke-width="0.8"/><text x="394.0" y="1512.3" class="ax" text-anchor="middle" style="font-size:6.5px">Jan 25</text><line x1="451.5" y1="1501.6" x2="451.5" y2="1504.6" stroke="#c9ccd9" stroke-width="0.8"/><text x="451.5" y="1512.3" class="ax" text-anchor="middle" style="font-size:6.5px">February</text><line x1="508.9" y1="1501.6" x2="508.9" y2="1504.6" stroke="#c9ccd9" stroke-width="0.8"/><text x="508.9" y="1512.3" class="ax" text-anchor="middle" style="font-size:6.5px">Feb 08</text><line x1="566.4" y1="1501.6" x2="566.4" y2="1504.6" stroke="#c9ccd9" stroke-width="0.8"/><text x="566.4" y="1512.3" class="ax" text-anchor="middle" style="font-size:6.5px">Feb 15</text><line x1="623.9" y1="1501.6" x2="623.9" y2="1504.6" stroke="#c9ccd9" stroke-width="0.8"/><text x="623.9" y="1512.3" class="ax" text-anchor="middle" style="font-size:6.5px">Feb 22</text><line x1="681.4" y1="1501.6" x2="681.4" y2="1504.6" stroke="#c9ccd9" stroke-width="0.8"/><text x="681.4" y="1512.3" class="ax" text-anchor="middle" style="font-size:6.5px">March</text><line x1="210.6" y1="1501.6" x2="210.6" y2="1504.6" stroke="#c9ccd9" stroke-width="0.8"/><line x1="695.0" y1="1501.6" x2="695.0" y2="1504.6" stroke="#c9ccd9" stroke-width="0.8"/><path d="M210.6 1379.6 C213.3 1374.0 216.1 1362.8 218.8 1362.8 C221.5 1362.8 224.3 1392.2 227.0 1392.2 C229.8 1392.2 232.5 1382.4 235.2 1382.4 C238.0 1382.4 240.7 1383.8 243.4 1383.8 C246.2 1383.8 248.9 1374.0 251.7 1374.0 C254.4 1374.0 257.1 1374.0 259.9 1376.8 C262.6 1379.6 265.3 1397.9 268.1 1397.9 C270.8 1397.9 273.5 1386.6 276.3 1382.4 C279.0 1378.2 281.8 1372.6 284.5 1372.6 C287.2 1372.6 290.0 1378.2 292.7 1378.2 C295.4 1378.2 298.2 1371.2 300.9 1371.2 C303.6 1371.2 306.4 1373.3 309.1 1374.0 C311.9 1374.7 314.6 1375.4 317.3 1375.4 C320.1 1375.4 322.8 1365.6 325.5 1365.6 C328.3 1365.6 331.0 1374.0 333.8 1374.0 C336.5 1374.0 339.2 1371.2 342.0 1371.2 C344.7 1371.2 347.4 1371.2 350.2 1371.2 C352.9 1371.2 355.6 1370.3 358.4 1369.8 C361.1 1369.3 363.9 1368.4 366.6 1368.4 C369.3 1368.4 372.1 1374.0 374.8 1374.0 C377.5 1374.0 380.3 1371.2 383.0 1371.2 C385.7 1371.2 388.5 1376.8 391.2 1376.8 C394.0 1376.8 396.7 1372.6 399.4 1371.2 C402.2 1369.8 404.9 1368.4 407.6 1368.4 C410.4 1368.4 413.1 1374.0 415.9 1374.0 C418.6 1374.0 421.3 1373.1 424.1 1372.6 C426.8 1372.1 429.5 1371.2 432.3 1371.2 C435.0 1371.2 437.7 1406.3 440.5 1406.3 C443.2 1406.3 446.0 1396.5 448.7 1390.8 C451.4 1385.2 454.2 1372.6 456.9 1372.6 C459.6 1372.6 462.4 1374.0 465.1 1374.0 C467.8 1374.0 470.6 1369.8 473.3 1369.8 C476.1 1369.8 478.8 1371.2 481.5 1371.2 C484.3 1371.2 487.0 1369.8 489.7 1368.4 C492.5 1367.0 495.2 1362.8 498.0 1362.8 C500.7 1362.8 503.4 1362.8 506.2 1362.8 C508.9 1362.8 511.6 1379.6 514.4 1379.6 C517.1 1379.6 519.8 1374.0 522.6 1372.6 C525.3 1371.2 528.1 1371.2 530.8 1371.2 C533.5 1371.2 536.3 1372.6 539.0 1372.6 C541.7 1372.6 544.5 1367.0 547.2 1367.0 C549.9 1367.0 552.7 1379.6 555.4 1379.6 C558.2 1379.6 560.9 1374.3 563.6 1372.6 C566.4 1371.0 569.1 1370.5 571.8 1369.8 C574.6 1369.1 577.3 1368.4 580.1 1368.4 C582.8 1368.4 585.5 1371.2 588.3 1371.2 C591.0 1371.2 593.7 1367.0 596.5 1367.0 C599.2 1367.0 601.9 1463.7 604.7 1463.7 C607.4 1463.7 610.2 1436.2 612.9 1423.1 C615.6 1410.0 618.4 1394.8 621.1 1385.2 C623.8 1375.7 626.6 1365.6 629.3 1365.6 C632.0 1365.6 634.8 1365.6 637.5 1365.6 C640.3 1365.6 643.0 1372.6 645.7 1372.6 C648.5 1372.6 651.2 1368.4 653.9 1368.4 C656.7 1368.4 659.4 1368.4 662.2 1368.4 C664.9 1368.4 667.6 1369.8 670.4 1374.0 C673.1 1378.2 675.8 1393.6 678.6 1393.6 C681.3 1393.6 684.0 1380.6 686.8 1376.8 C689.5 1373.1 692.3 1373.1 695.0 1371.2 L695.0 1501.6 L210.6 1501.6Z" fill="#dde3f2"/><path d="M210.6 1379.6 C213.3 1374.0 216.1 1362.8 218.8 1362.8 C221.5 1362.8 224.3 1392.2 227.0 1392.2 C229.8 1392.2 232.5 1382.4 235.2 1382.4 C238.0 1382.4 240.7 1383.8 243.4 1383.8 C246.2 1383.8 248.9 1374.0 251.7 1374.0 C254.4 1374.0 257.1 1374.0 259.9 1376.8 C262.6 1379.6 265.3 1397.9 268.1 1397.9 C270.8 1397.9 273.5 1386.6 276.3 1382.4 C279.0 1378.2 281.8 1372.6 284.5 1372.6 C287.2 1372.6 290.0 1378.2 292.7 1378.2 C295.4 1378.2 298.2 1371.2 300.9 1371.2 C303.6 1371.2 306.4 1373.3 309.1 1374.0 C311.9 1374.7 314.6 1375.4 317.3 1375.4 C320.1 1375.4 322.8 1365.6 325.5 1365.6 C328.3 1365.6 331.0 1374.0 333.8 1374.0 C336.5 1374.0 339.2 1371.2 342.0 1371.2 C344.7 1371.2 347.4 1371.2 350.2 1371.2 C352.9 1371.2 355.6 1370.3 358.4 1369.8 C361.1 1369.3 363.9 1368.4 366.6 1368.4 C369.3 1368.4 372.1 1374.0 374.8 1374.0 C377.5 1374.0 380.3 1371.2 383.0 1371.2 C385.7 1371.2 388.5 1376.8 391.2 1376.8 C394.0 1376.8 396.7 1372.6 399.4 1371.2 C402.2 1369.8 404.9 1368.4 407.6 1368.4 C410.4 1368.4 413.1 1374.0 415.9 1374.0 C418.6 1374.0 421.3 1373.1 424.1 1372.6 C426.8 1372.1 429.5 1371.2 432.3 1371.2 C435.0 1371.2 437.7 1406.3 440.5 1406.3 C443.2 1406.3 446.0 1396.5 448.7 1390.8 C451.4 1385.2 454.2 1372.6 456.9 1372.6 C459.6 1372.6 462.4 1374.0 465.1 1374.0 C467.8 1374.0 470.6 1369.8 473.3 1369.8 C476.1 1369.8 478.8 1371.2 481.5 1371.2 C484.3 1371.2 487.0 1369.8 489.7 1368.4 C492.5 1367.0 495.2 1362.8 498.0 1362.8 C500.7 1362.8 503.4 1362.8 506.2 1362.8 C508.9 1362.8 511.6 1379.6 514.4 1379.6 C517.1 1379.6 519.8 1374.0 522.6 1372.6 C525.3 1371.2 528.1 1371.2 530.8 1371.2 C533.5 1371.2 536.3 1372.6 539.0 1372.6 C541.7 1372.6 544.5 1367.0 547.2 1367.0 C549.9 1367.0 552.7 1379.6 555.4 1379.6 C558.2 1379.6 560.9 1374.3 563.6 1372.6 C566.4 1371.0 569.1 1370.5 571.8 1369.8 C574.6 1369.1 577.3 1368.4 580.1 1368.4 C582.8 1368.4 585.5 1371.2 588.3 1371.2 C591.0 1371.2 593.7 1367.0 596.5 1367.0 C599.2 1367.0 601.9 1463.7 604.7 1463.7 C607.4 1463.7 610.2 1436.2 612.9 1423.1 C615.6 1410.0 618.4 1394.8 621.1 1385.2 C623.8 1375.7 626.6 1365.6 629.3 1365.6 C632.0 1365.6 634.8 1365.6 637.5 1365.6 C640.3 1365.6 643.0 1372.6 645.7 1372.6 C648.5 1372.6 651.2 1368.4 653.9 1368.4 C656.7 1368.4 659.4 1368.4 662.2 1368.4 C664.9 1368.4 667.6 1369.8 670.4 1374.0 C673.1 1378.2 675.8 1393.6 678.6 1393.6 C681.3 1393.6 684.0 1380.6 686.8 1376.8 C689.5 1373.1 692.3 1373.1 695.0 1371.2" fill="none" stroke="#4a73c5" stroke-width="1.25" stroke-linejoin="round"/><circle cx="210.6" cy="1379.6" r="1.3" fill="#4a73c5"/><circle cx="218.8" cy="1362.8" r="1.3" fill="#4a73c5"/><circle cx="227.0" cy="1392.2" r="1.3" fill="#4a73c5"/><circle cx="235.2" cy="1382.4" r="1.3" fill="#4a73c5"/><circle cx="243.4" cy="1383.8" r="1.3" fill="#4a73c5"/><circle cx="251.7" cy="1374.0" r="1.3" fill="#4a73c5"/><circle cx="259.9" cy="1376.8" r="1.3" fill="#4a73c5"/><circle cx="268.1" cy="1397.9" r="1.3" fill="#4a73c5"/><circle cx="276.3" cy="1382.4" r="1.3" fill="#4a73c5"/><circle cx="284.5" cy="1372.6" r="1.3" fill="#4a73c5"/><circle cx="292.7" cy="1378.2" r="1.3" fill="#4a73c5"/><circle cx="300.9" cy="1371.2" r="1.3" fill="#4a73c5"/><circle cx="309.1" cy="1374.0" r="1.3" fill="#4a73c5"/><circle cx="317.3" cy="1375.4" r="1.3" fill="#4a73c5"/><circle cx="325.5" cy="1365.6" r="1.3" fill="#4a73c5"/><circle cx="333.8" cy="1374.0" r="1.3" fill="#4a73c5"/><circle cx="342.0" cy="1371.2" r="1.3" fill="#4a73c5"/><circle cx="350.2" cy="1371.2" r="1.3" fill="#4a73c5"/><circle cx="358.4" cy="1369.8" r="1.3" fill="#4a73c5"/><circle cx="366.6" cy="1368.4" r="1.3" fill="#4a73c5"/><circle cx="374.8" cy="1374.0" r="1.3" fill="#4a73c5"/><circle cx="383.0" cy="1371.2" r="1.3" fill="#4a73c5"/><circle cx="391.2" cy="1376.8" r="1.3" fill="#4a73c5"/><circle cx="399.4" cy="1371.2" r="1.3" fill="#4a73c5"/><circle cx="407.6" cy="1368.4" r="1.3" fill="#4a73c5"/><circle cx="415.9" cy="1374.0" r="1.3" fill="#4a73c5"/><circle cx="424.1" cy="1372.6" r="1.3" fill="#4a73c5"/><circle cx="432.3" cy="1371.2" r="1.3" fill="#4a73c5"/><circle cx="440.5" cy="1406.3" r="1.3" fill="#4a73c5"/><circle cx="448.7" cy="1390.8" r="1.3" fill="#4a73c5"/><circle cx="456.9" cy="1372.6" r="1.3" fill="#4a73c5"/><circle cx="465.1" cy="1374.0" r="1.3" fill="#4a73c5"/><circle cx="473.3" cy="1369.8" r="1.3" fill="#4a73c5"/><circle cx="481.5" cy="1371.2" r="1.3" fill="#4a73c5"/><circle cx="489.7" cy="1368.4" r="1.3" fill="#4a73c5"/><circle cx="498.0" cy="1362.8" r="1.3" fill="#4a73c5"/><circle cx="506.2" cy="1362.8" r="1.3" fill="#4a73c5"/><circle cx="514.4" cy="1379.6" r="1.3" fill="#4a73c5"/><circle cx="522.6" cy="1372.6" r="1.3" fill="#4a73c5"/><circle cx="530.8" cy="1371.2" r="1.3" fill="#4a73c5"/><circle cx="539.0" cy="1372.6" r="1.3" fill="#4a73c5"/><circle cx="547.2" cy="1367.0" r="1.3" fill="#4a73c5"/><circle cx="555.4" cy="1379.6" r="1.3" fill="#4a73c5"/><circle cx="563.6" cy="1372.6" r="1.3" fill="#4a73c5"/><circle cx="571.8" cy="1369.8" r="1.3" fill="#4a73c5"/><circle cx="580.1" cy="1368.4" r="1.3" fill="#4a73c5"/><circle cx="588.3" cy="1371.2" r="1.3" fill="#4a73c5"/><circle cx="596.5" cy="1367.0" r="1.3" fill="#4a73c5"/><circle cx="604.7" cy="1463.7" r="1.3" fill="#4a73c5"/><circle cx="612.9" cy="1423.1" r="1.3" fill="#4a73c5"/><circle cx="621.1" cy="1385.2" r="1.3" fill="#4a73c5"/><circle cx="629.3" cy="1365.6" r="1.3" fill="#4a73c5"/><circle cx="637.5" cy="1365.6" r="1.3" fill="#4a73c5"/><circle cx="645.7" cy="1372.6" r="1.3" fill="#4a73c5"/><circle cx="653.9" cy="1368.4" r="1.3" fill="#4a73c5"/><circle cx="662.2" cy="1368.4" r="1.3" fill="#4a73c5"/><circle cx="670.4" cy="1374.0" r="1.3" fill="#4a73c5"/><circle cx="678.6" cy="1393.6" r="1.3" fill="#4a73c5"/><circle cx="686.8" cy="1376.8" r="1.3" fill="#4a73c5"/><circle cx="695.0" cy="1371.2" r="1.3" fill="#4a73c5"/></svg>
<div class="card" style="left:719.0px;top:1322.0px;width:536.5px;height:210.0px"></div>
<div class="ct" style="left:729.0px;top:1332.8px">ML Group Based Time Anomaly</div>
<svg style="left:1234.5px;top:1332.3px" width="10.6" height="10.6" viewBox="0 0 12 12"><circle cx="6" cy="6" r="5.1" fill="none" stroke="#3b86e8" stroke-width="1.3"/><rect x="5.4" y="5.2" width="1.2" height="3.4" rx="0.5" fill="#3b86e8"/><circle cx="6" cy="3.6" r="0.75" fill="#3b86e8"/></svg>
<svg style="left:0;top:0" width="1282" height="2109"><line x1="750.4" y1="1501.6" x2="1238.1" y2="1501.6" stroke="#dfe1e6" stroke-width="0.7" stroke-dasharray="1.5 1.5"/><line x1="747.4" y1="1501.6" x2="750.4" y2="1501.6" stroke="#c9ccd6" stroke-width="0.7"/><text x="745.9" y="1503.7" class="ax" text-anchor="end" style="font-size:6.5px">0%</text><line x1="750.4" y1="1487.6" x2="1238.1" y2="1487.6" stroke="#dfe1e6" stroke-width="0.7" stroke-dasharray="1.5 1.5"/><line x1="747.4" y1="1487.6" x2="750.4" y2="1487.6" stroke="#c9ccd6" stroke-width="0.7"/><text x="745.9" y="1489.7" class="ax" text-anchor="end" style="font-size:6.5px">10%</text><line x1="750.4" y1="1473.6" x2="1238.1" y2="1473.6" stroke="#dfe1e6" stroke-width="0.7" stroke-dasharray="1.5 1.5"/><line x1="747.4" y1="1473.6" x2="750.4" y2="1473.6" stroke="#c9ccd6" stroke-width="0.7"/><text x="745.9" y="1475.7" class="ax" text-anchor="end" style="font-size:6.5px">20%</text><line x1="750.4" y1="1459.5" x2="1238.1" y2="1459.5" stroke="#dfe1e6" stroke-width="0.7" stroke-dasharray="1.5 1.5"/><line x1="747.4" y1="1459.5" x2="750.4" y2="1459.5" stroke="#c9ccd6" stroke-width="0.7"/><text x="745.9" y="1461.6" class="ax" text-anchor="end" style="font-size:6.5px">30%</text><line x1="750.4" y1="1445.5" x2="1238.1" y2="1445.5" stroke="#dfe1e6" stroke-width="0.7" stroke-dasharray="1.5 1.5"/><line x1="747.4" y1="1445.5" x2="750.4" y2="1445.5" stroke="#c9ccd6" stroke-width="0.7"/><text x="745.9" y="1447.6" class="ax" text-anchor="end" style="font-size:6.5px">40%</text><line x1="750.4" y1="1431.5" x2="1238.1" y2="1431.5" stroke="#dfe1e6" stroke-width="0.7" stroke-dasharray="1.5 1.5"/><line x1="747.4" y1="1431.5" x2="750.4" y2="1431.5" stroke="#c9ccd6" stroke-width="0.7"/><text x="745.9" y="1433.6" class="ax" text-anchor="end" style="font-size:6.5px">50%</text><line x1="750.4" y1="1417.5" x2="1238.1" y2="1417.5" stroke="#dfe1e6" stroke-width="0.7" stroke-dasharray="1.5 1.5"/><line x1="747.4" y1="1417.5" x2="750.4" y2="1417.5" stroke="#c9ccd6" stroke-width="0.7"/><text x="745.9" y="1419.6" class="ax" text-anchor="end" style="font-size:6.5px">60%</text><line x1="750.4" y1="1403.5" x2="1238.1" y2="1403.5" stroke="#dfe1e6" stroke-width="0.7" stroke-dasharray="1.5 1.5"/><line x1="747.4" y1="1403.5" x2="750.4" y2="1403.5" stroke="#c9ccd6" stroke-width="0.7"/><text x="745.9" y="1405.6" class="ax" text-anchor="end" style="font-size:6.5px">70%</text><line x1="750.4" y1="1389.4" x2="1238.1" y2="1389.4" stroke="#dfe1e6" stroke-width="0.7" stroke-dasharray="1.5 1.5"/><line x1="747.4" y1="1389.4" x2="750.4" y2="1389.4" stroke="#c9ccd6" stroke-width="0.7"/><text x="745.9" y="1391.5" class="ax" text-anchor="end" style="font-size:6.5px">80%</text><line x1="750.4" y1="1375.4" x2="1238.1" y2="1375.4" stroke="#dfe1e6" stroke-width="0.7" stroke-dasharray="1.5 1.5"/><line x1="747.4" y1="1375.4" x2="750.4" y2="1375.4" stroke="#c9ccd6" stroke-width="0.7"/><text x="745.9" y="1377.5" class="ax" text-anchor="end" style="font-size:6.5px">90%</text><line x1="750.4" y1="1361.4" x2="1238.1" y2="1361.4" stroke="#dfe1e6" stroke-width="0.7" stroke-dasharray="1.5 1.5"/><line x1="747.4" y1="1361.4" x2="750.4" y2="1361.4" stroke="#c9ccd6" stroke-width="0.7"/><text x="745.9" y="1363.5" class="ax" text-anchor="end" style="font-size:6.5px">100%</text><line x1="750.4" y1="1361.4" x2="750.4" y2="1501.6" stroke="#c9ccd9" stroke-width="1"/><line x1="750.4" y1="1502.1" x2="1237.6" y2="1502.1" stroke="#c9ccd9" stroke-width="0.8" stroke-dasharray="1.5 1.2"/><line x1="764.1" y1="1501.6" x2="764.1" y2="1504.6" stroke="#c9ccd9" stroke-width="0.8"/><text x="764.1" y="1512.3" class="ax" text-anchor="middle" style="font-size:6.5px">Jan 04</text><line x1="821.6" y1="1501.6" x2="821.6" y2="1504.6" stroke="#c9ccd9" stroke-width="0.8"/><text x="821.6" y="1512.3" class="ax" text-anchor="middle" style="font-size:6.5px">Jan 11</text><line x1="879.1" y1="1501.6" x2="879.1" y2="1504.6" stroke="#c9ccd9" stroke-width="0.8"/><text x="879.1" y="1512.3" class="ax" text-anchor="middle" style="font-size:6.5px">Jan 18</text><line x1="936.6" y1="1501.6" x2="936.6" y2="1504.6" stroke="#c9ccd9" stroke-width="0.8"/><text x="936.6" y="1512.3" class="ax" text-anchor="middle" style="font-size:6.5px">Jan 25</text><line x1="994.1" y1="1501.6" x2="994.1" y2="1504.6" stroke="#c9ccd9" stroke-width="0.8"/><text x="994.1" y="1512.3" class="ax" text-anchor="middle" style="font-size:6.5px">February</text><line x1="1051.5" y1="1501.6" x2="1051.5" y2="1504.6" stroke="#c9ccd9" stroke-width="0.8"/><text x="1051.5" y="1512.3" class="ax" text-anchor="middle" style="font-size:6.5px">Feb 08</text><line x1="1109.0" y1="1501.6" x2="1109.0" y2="1504.6" stroke="#c9ccd9" stroke-width="0.8"/><text x="1109.0" y="1512.3" class="ax" text-anchor="middle" style="font-size:6.5px">Feb 15</text><line x1="1166.5" y1="1501.6" x2="1166.5" y2="1504.6" stroke="#c9ccd9" stroke-width="0.8"/><text x="1166.5" y="1512.3" class="ax" text-anchor="middle" style="font-size:6.5px">Feb 22</text><line x1="1224.0" y1="1501.6" x2="1224.0" y2="1504.6" stroke="#c9ccd9" stroke-width="0.8"/><text x="1224.0" y="1512.3" class="ax" text-anchor="middle" style="font-size:6.5px">March</text><line x1="753.2" y1="1501.6" x2="753.2" y2="1504.6" stroke="#c9ccd9" stroke-width="0.8"/><line x1="1237.6" y1="1501.6" x2="1237.6" y2="1504.6" stroke="#c9ccd9" stroke-width="0.8"/><path d="M753.2 1446.9 C755.9 1465.1 758.7 1501.6 761.4 1501.6 C764.1 1501.6 766.9 1385.2 769.6 1385.2 C772.4 1385.2 775.1 1403.5 777.8 1403.5 C780.6 1403.5 783.3 1385.2 786.0 1383.8 C788.8 1382.4 791.5 1382.4 794.2 1382.4 C797.0 1382.4 799.7 1385.9 802.5 1397.9 C805.2 1409.8 807.9 1442.0 810.7 1453.9 C813.4 1465.8 816.1 1469.4 818.9 1469.4 C821.6 1469.4 824.4 1406.2 827.1 1397.9 C829.8 1389.5 832.6 1390.8 835.3 1389.4 C838.0 1388.1 840.8 1385.2 843.5 1385.2 C846.2 1385.2 849.0 1386.6 851.7 1386.6 C854.5 1386.6 857.2 1385.2 859.9 1385.2 C862.7 1385.2 865.4 1428.7 868.1 1445.5 C870.9 1462.3 873.6 1486.2 876.4 1486.2 C879.1 1486.2 881.8 1390.8 884.6 1388.0 C887.3 1385.2 890.0 1385.5 892.8 1385.2 C895.5 1385.0 898.2 1378.2 901.0 1378.2 C903.7 1378.2 906.5 1391.5 909.2 1392.2 C911.9 1393.0 914.7 1392.4 917.4 1395.0 C920.1 1397.7 922.9 1433.4 925.6 1449.7 C928.3 1466.1 931.1 1493.2 933.8 1493.2 C936.6 1493.2 939.3 1381.0 942.0 1381.0 C944.8 1381.0 947.5 1392.2 950.2 1392.2 C953.0 1392.2 955.7 1390.8 958.5 1390.8 C961.2 1390.8 963.9 1390.8 966.7 1390.8 C969.4 1390.8 972.1 1386.6 974.9 1386.6 C977.6 1386.6 980.3 1411.9 983.1 1430.1 C985.8 1448.3 988.6 1496.0 991.3 1496.0 C994.0 1496.0 996.8 1388.0 999.5 1388.0 C1002.2 1388.0 1005.0 1403.5 1007.7 1403.5 C1010.4 1403.5 1013.2 1399.0 1015.9 1396.5 C1018.7 1393.9 1021.4 1388.0 1024.1 1388.0 C1026.9 1388.0 1029.6 1388.0 1032.3 1390.8 C1035.1 1393.6 1037.8 1432.7 1040.6 1448.3 C1043.3 1464.0 1046.0 1484.8 1048.8 1484.8 C1051.5 1484.8 1054.2 1381.0 1057.0 1381.0 C1059.7 1381.0 1062.4 1385.5 1065.2 1386.6 C1067.9 1387.8 1070.7 1388.0 1073.4 1388.0 C1076.1 1388.0 1078.9 1383.8 1081.6 1383.8 C1084.3 1383.8 1087.1 1383.8 1089.8 1388.0 C1092.5 1392.2 1095.3 1402.8 1098.0 1421.7 C1100.8 1440.6 1103.5 1501.6 1106.2 1501.6 C1109.0 1501.6 1111.7 1386.6 1114.4 1386.6 C1117.2 1386.6 1119.9 1392.2 1122.7 1392.2 C1125.4 1392.2 1128.1 1391.3 1130.9 1390.8 C1133.6 1390.4 1136.3 1389.4 1139.1 1389.4 C1141.8 1389.4 1144.5 1389.4 1147.3 1390.8 C1150.0 1392.2 1152.8 1439.7 1155.5 1453.9 C1158.2 1468.2 1161.0 1476.4 1163.7 1476.4 C1166.4 1476.4 1169.2 1399.2 1171.9 1392.2 C1174.6 1385.3 1177.4 1385.9 1180.1 1385.2 C1182.9 1384.6 1185.6 1384.5 1188.3 1383.8 C1191.1 1383.1 1193.8 1381.0 1196.5 1381.0 C1199.3 1381.0 1202.0 1381.0 1204.8 1381.0 C1207.5 1381.0 1210.2 1439.9 1213.0 1439.9 C1215.7 1439.9 1218.4 1439.9 1221.2 1437.1 C1223.9 1434.3 1226.6 1388.0 1229.4 1388.0 C1232.1 1388.0 1234.9 1389.9 1237.6 1390.8 L1237.6 1501.6 L753.2 1501.6Z" fill="#fde0d2"/><path d="M753.2 1446.9 C755.9 1465.1 758.7 1501.6 761.4 1501.6 C764.1 1501.6 766.9 1385.2 769.6 1385.2 C772.4 1385.2 775.1 1403.5 777.8 1403.5 C780.6 1403.5 783.3 1385.2 786.0 1383.8 C788.8 1382.4 791.5 1382.4 794.2 1382.4 C797.0 1382.4 799.7 1385.9 802.5 1397.9 C805.2 1409.8 807.9 1442.0 810.7 1453.9 C813.4 1465.8 816.1 1469.4 818.9 1469.4 C821.6 1469.4 824.4 1406.2 827.1 1397.9 C829.8 1389.5 832.6 1390.8 835.3 1389.4 C838.0 1388.1 840.8 1385.2 843.5 1385.2 C846.2 1385.2 849.0 1386.6 851.7 1386.6 C854.5 1386.6 857.2 1385.2 859.9 1385.2 C862.7 1385.2 865.4 1428.7 868.1 1445.5 C870.9 1462.3 873.6 1486.2 876.4 1486.2 C879.1 1486.2 881.8 1390.8 884.6 1388.0 C887.3 1385.2 890.0 1385.5 892.8 1385.2 C895.5 1385.0 898.2 1378.2 901.0 1378.2 C903.7 1378.2 906.5 1391.5 909.2 1392.2 C911.9 1393.0 914.7 1392.4 917.4 1395.0 C920.1 1397.7 922.9 1433.4 925.6 1449.7 C928.3 1466.1 931.1 1493.2 933.8 1493.2 C936.6 1493.2 939.3 1381.0 942.0 1381.0 C944.8 1381.0 947.5 1392.2 950.2 1392.2 C953.0 1392.2 955.7 1390.8 958.5 1390.8 C961.2 1390.8 963.9 1390.8 966.7 1390.8 C969.4 1390.8 972.1 1386.6 974.9 1386.6 C977.6 1386.6 980.3 1411.9 983.1 1430.1 C985.8 1448.3 988.6 1496.0 991.3 1496.0 C994.0 1496.0 996.8 1388.0 999.5 1388.0 C1002.2 1388.0 1005.0 1403.5 1007.7 1403.5 C1010.4 1403.5 1013.2 1399.0 1015.9 1396.5 C1018.7 1393.9 1021.4 1388.0 1024.1 1388.0 C1026.9 1388.0 1029.6 1388.0 1032.3 1390.8 C1035.1 1393.6 1037.8 1432.7 1040.6 1448.3 C1043.3 1464.0 1046.0 1484.8 1048.8 1484.8 C1051.5 1484.8 1054.2 1381.0 1057.0 1381.0 C1059.7 1381.0 1062.4 1385.5 1065.2 1386.6 C1067.9 1387.8 1070.7 1388.0 1073.4 1388.0 C1076.1 1388.0 1078.9 1383.8 1081.6 1383.8 C1084.3 1383.8 1087.1 1383.8 1089.8 1388.0 C1092.5 1392.2 1095.3 1402.8 1098.0 1421.7 C1100.8 1440.6 1103.5 1501.6 1106.2 1501.6 C1109.0 1501.6 1111.7 1386.6 1114.4 1386.6 C1117.2 1386.6 1119.9 1392.2 1122.7 1392.2 C1125.4 1392.2 1128.1 1391.3 1130.9 1390.8 C1133.6 1390.4 1136.3 1389.4 1139.1 1389.4 C1141.8 1389.4 1144.5 1389.4 1147.3 1390.8 C1150.0 1392.2 1152.8 1439.7 1155.5 1453.9 C1158.2 1468.2 1161.0 1476.4 1163.7 1476.4 C1166.4 1476.4 1169.2 1399.2 1171.9 1392.2 C1174.6 1385.3 1177.4 1385.9 1180.1 1385.2 C1182.9 1384.6 1185.6 1384.5 1188.3 1383.8 C1191.1 1383.1 1193.8 1381.0 1196.5 1381.0 C1199.3 1381.0 1202.0 1381.0 1204.8 1381.0 C1207.5 1381.0 1210.2 1439.9 1213.0 1439.9 C1215.7 1439.9 1218.4 1439.9 1221.2 1437.1 C1223.9 1434.3 1226.6 1388.0 1229.4 1388.0 C1232.1 1388.0 1234.9 1389.9 1237.6 1390.8" fill="none" stroke="#ff6410" stroke-width="1.25" stroke-linejoin="round"/><circle cx="753.2" cy="1446.9" r="1.3" fill="#ff6410"/><circle cx="761.4" cy="1501.6" r="1.3" fill="#ff6410"/><circle cx="769.6" cy="1385.2" r="1.3" fill="#ff6410"/><circle cx="777.8" cy="1403.5" r="1.3" fill="#ff6410"/><circle cx="786.0" cy="1383.8" r="1.3" fill="#ff6410"/><circle cx="794.2" cy="1382.4" r="1.3" fill="#ff6410"/><circle cx="802.5" cy="1397.9" r="1.3" fill="#ff6410"/><circle cx="810.7" cy="1453.9" r="1.3" fill="#ff6410"/><circle cx="818.9" cy="1469.4" r="1.3" fill="#ff6410"/><circle cx="827.1" cy="1397.9" r="1.3" fill="#ff6410"/><circle cx="835.3" cy="1389.4" r="1.3" fill="#ff6410"/><circle cx="843.5" cy="1385.2" r="1.3" fill="#ff6410"/><circle cx="851.7" cy="1386.6" r="1.3" fill="#ff6410"/><circle cx="859.9" cy="1385.2" r="1.3" fill="#ff6410"/><circle cx="868.1" cy="1445.5" r="1.3" fill="#ff6410"/><circle cx="876.4" cy="1486.2" r="1.3" fill="#ff6410"/><circle cx="884.6" cy="1388.0" r="1.3" fill="#ff6410"/><circle cx="892.8" cy="1385.2" r="1.3" fill="#ff6410"/><circle cx="901.0" cy="1378.2" r="1.3" fill="#ff6410"/><circle cx="909.2" cy="1392.2" r="1.3" fill="#ff6410"/><circle cx="917.4" cy="1395.0" r="1.3" fill="#ff6410"/><circle cx="925.6" cy="1449.7" r="1.3" fill="#ff6410"/><circle cx="933.8" cy="1493.2" r="1.3" fill="#ff6410"/><circle cx="942.0" cy="1381.0" r="1.3" fill="#ff6410"/><circle cx="950.2" cy="1392.2" r="1.3" fill="#ff6410"/><circle cx="958.5" cy="1390.8" r="1.3" fill="#ff6410"/><circle cx="966.7" cy="1390.8" r="1.3" fill="#ff6410"/><circle cx="974.9" cy="1386.6" r="1.3" fill="#ff6410"/><circle cx="983.1" cy="1430.1" r="1.3" fill="#ff6410"/><circle cx="991.3" cy="1496.0" r="1.3" fill="#ff6410"/><circle cx="999.5" cy="1388.0" r="1.3" fill="#ff6410"/><circle cx="1007.7" cy="1403.5" r="1.3" fill="#ff6410"/><circle cx="1015.9" cy="1396.5" r="1.3" fill="#ff6410"/><circle cx="1024.1" cy="1388.0" r="1.3" fill="#ff6410"/><circle cx="1032.3" cy="1390.8" r="1.3" fill="#ff6410"/><circle cx="1040.6" cy="1448.3" r="1.3" fill="#ff6410"/><circle cx="1048.8" cy="1484.8" r="1.3" fill="#ff6410"/><circle cx="1057.0" cy="1381.0" r="1.3" fill="#ff6410"/><circle cx="1065.2" cy="1386.6" r="1.3" fill="#ff6410"/><circle cx="1073.4" cy="1388.0" r="1.3" fill="#ff6410"/><circle cx="1081.6" cy="1383.8" r="1.3" fill="#ff6410"/><circle cx="1089.8" cy="1388.0" r="1.3" fill="#ff6410"/><circle cx="1098.0" cy="1421.7" r="1.3" fill="#ff6410"/><circle cx="1106.2" cy="1501.6" r="1.3" fill="#ff6410"/><circle cx="1114.4" cy="1386.6" r="1.3" fill="#ff6410"/><circle cx="1122.7" cy="1392.2" r="1.3" fill="#ff6410"/><circle cx="1130.9" cy="1390.8" r="1.3" fill="#ff6410"/><circle cx="1139.1" cy="1389.4" r="1.3" fill="#ff6410"/><circle cx="1147.3" cy="1390.8" r="1.3" fill="#ff6410"/><circle cx="1155.5" cy="1453.9" r="1.3" fill="#ff6410"/><circle cx="1163.7" cy="1476.4" r="1.3" fill="#ff6410"/><circle cx="1171.9" cy="1392.2" r="1.3" fill="#ff6410"/><circle cx="1180.1" cy="1385.2" r="1.3" fill="#ff6410"/><circle cx="1188.3" cy="1383.8" r="1.3" fill="#ff6410"/><circle cx="1196.5" cy="1381.0" r="1.3" fill="#ff6410"/><circle cx="1204.8" cy="1381.0" r="1.3" fill="#ff6410"/><circle cx="1213.0" cy="1439.9" r="1.3" fill="#ff6410"/><circle cx="1221.2" cy="1437.1" r="1.3" fill="#ff6410"/><circle cx="1229.4" cy="1388.0" r="1.3" fill="#ff6410"/><circle cx="1237.6" cy="1390.8" r="1.3" fill="#ff6410"/></svg>
<div class="card" style="left:176.0px;top:1538.5px;width:1079.2px;height:265.0px"></div>
<div class="ct" style="left:186px;top:1550.3px">Level Of Assurance (LoA) Distribution Over Time</div>
<svg style="left:1234.7px;top:1549.5px" width="10.6" height="10.6" viewBox="0 0 12 12"><circle cx="6" cy="6" r="5.1" fill="none" stroke="#3b86e8" stroke-width="1.3"/><rect x="5.4" y="5.2" width="1.2" height="3.4" rx="0.5" fill="#3b86e8"/><circle cx="6" cy="3.6" r="0.75" fill="#3b86e8"/></svg>
<div class="a" style="left:608.4px;top:1568.6px;width:5px;height:5px;border-radius:50%;background:#e0161b"></div>
<div class="lg" style="left:616.7px;top:1566.6px">LoA &lt; 10%</div>
<div class="a" style="left:661.0px;top:1568.6px;width:5px;height:5px;border-radius:50%;background:#ff6a1a"></div>
<div class="lg" style="left:669.6px;top:1566.6px">LoA 10–50%</div>
<div class="a" style="left:719.5px;top:1568.6px;width:5px;height:5px;border-radius:50%;background:#f2c000"></div>
<div class="lg" style="left:727.9px;top:1566.6px">LoA 50–75%</div>
<div class="a" style="left:778.6px;top:1568.6px;width:5px;height:5px;border-radius:50%;background:#17a34a"></div>
<div class="lg" style="left:786.6px;top:1566.6px">LoA ≥ 75%</div>
<div class="a" style="left:184px;top:1680.5px;transform:rotate(-90deg);transform-origin:0 0;font-size:7.6px;line-height:9px;color:#1f2b3d;width:0"><div style="position:absolute;left:-22px;top:0;width:44px;text-align:center">Auth count</div></div>
<svg style="left:0;top:0" width="1282" height="2109"><line x1="221.1" y1="1773.0" x2="1236.0" y2="1773.0" stroke="#dfe1e6" stroke-width="0.7" stroke-dasharray="1.5 1.5"/><line x1="218.1" y1="1773.0" x2="221.1" y2="1773.0" stroke="#c9ccd6" stroke-width="0.7"/><text x="216.6" y="1775.1" class="ax" text-anchor="end" style="font-size:6.2px">0</text><line x1="221.1" y1="1759.8" x2="1236.0" y2="1759.8" stroke="#dfe1e6" stroke-width="0.7" stroke-dasharray="1.5 1.5"/><line x1="218.1" y1="1759.8" x2="221.1" y2="1759.8" stroke="#c9ccd6" stroke-width="0.7"/><text x="216.6" y="1761.9" class="ax" text-anchor="end" style="font-size:6.2px">20</text><line x1="221.1" y1="1746.6" x2="1236.0" y2="1746.6" stroke="#dfe1e6" stroke-width="0.7" stroke-dasharray="1.5 1.5"/><line x1="218.1" y1="1746.6" x2="221.1" y2="1746.6" stroke="#c9ccd6" stroke-width="0.7"/><text x="216.6" y="1748.7" class="ax" text-anchor="end" style="font-size:6.2px">40</text><line x1="221.1" y1="1733.4" x2="1236.0" y2="1733.4" stroke="#dfe1e6" stroke-width="0.7" stroke-dasharray="1.5 1.5"/><line x1="218.1" y1="1733.4" x2="221.1" y2="1733.4" stroke="#c9ccd6" stroke-width="0.7"/><text x="216.6" y="1735.5" class="ax" text-anchor="end" style="font-size:6.2px">60</text><line x1="221.1" y1="1720.2" x2="1236.0" y2="1720.2" stroke="#dfe1e6" stroke-width="0.7" stroke-dasharray="1.5 1.5"/><line x1="218.1" y1="1720.2" x2="221.1" y2="1720.2" stroke="#c9ccd6" stroke-width="0.7"/><text x="216.6" y="1722.3" class="ax" text-anchor="end" style="font-size:6.2px">80</text><line x1="221.1" y1="1707.0" x2="1236.0" y2="1707.0" stroke="#dfe1e6" stroke-width="0.7" stroke-dasharray="1.5 1.5"/><line x1="218.1" y1="1707.0" x2="221.1" y2="1707.0" stroke="#c9ccd6" stroke-width="0.7"/><text x="216.6" y="1709.1" class="ax" text-anchor="end" style="font-size:6.2px">100</text><line x1="221.1" y1="1693.8" x2="1236.0" y2="1693.8" stroke="#dfe1e6" stroke-width="0.7" stroke-dasharray="1.5 1.5"/><line x1="218.1" y1="1693.8" x2="221.1" y2="1693.8" stroke="#c9ccd6" stroke-width="0.7"/><text x="216.6" y="1695.9" class="ax" text-anchor="end" style="font-size:6.2px">120</text><line x1="221.1" y1="1680.7" x2="1236.0" y2="1680.7" stroke="#dfe1e6" stroke-width="0.7" stroke-dasharray="1.5 1.5"/><line x1="218.1" y1="1680.7" x2="221.1" y2="1680.7" stroke="#c9ccd6" stroke-width="0.7"/><text x="216.6" y="1682.8" class="ax" text-anchor="end" style="font-size:6.2px">140</text><line x1="221.1" y1="1667.5" x2="1236.0" y2="1667.5" stroke="#dfe1e6" stroke-width="0.7" stroke-dasharray="1.5 1.5"/><line x1="218.1" y1="1667.5" x2="221.1" y2="1667.5" stroke="#c9ccd6" stroke-width="0.7"/><text x="216.6" y="1669.6" class="ax" text-anchor="end" style="font-size:6.2px">160</text><line x1="221.1" y1="1654.3" x2="1236.0" y2="1654.3" stroke="#dfe1e6" stroke-width="0.7" stroke-dasharray="1.5 1.5"/><line x1="218.1" y1="1654.3" x2="221.1" y2="1654.3" stroke="#c9ccd6" stroke-width="0.7"/><text x="216.6" y="1656.4" class="ax" text-anchor="end" style="font-size:6.2px">180</text><line x1="221.1" y1="1641.1" x2="1236.0" y2="1641.1" stroke="#dfe1e6" stroke-width="0.7" stroke-dasharray="1.5 1.5"/><line x1="218.1" y1="1641.1" x2="221.1" y2="1641.1" stroke="#c9ccd6" stroke-width="0.7"/><text x="216.6" y="1643.2" class="ax" text-anchor="end" style="font-size:6.2px">200</text><line x1="221.1" y1="1627.9" x2="1236.0" y2="1627.9" stroke="#dfe1e6" stroke-width="0.7" stroke-dasharray="1.5 1.5"/><line x1="218.1" y1="1627.9" x2="221.1" y2="1627.9" stroke="#c9ccd6" stroke-width="0.7"/><text x="216.6" y="1630.0" class="ax" text-anchor="end" style="font-size:6.2px">220</text><line x1="221.1" y1="1614.7" x2="1236.0" y2="1614.7" stroke="#dfe1e6" stroke-width="0.7" stroke-dasharray="1.5 1.5"/><line x1="218.1" y1="1614.7" x2="221.1" y2="1614.7" stroke="#c9ccd6" stroke-width="0.7"/><text x="216.6" y="1616.8" class="ax" text-anchor="end" style="font-size:6.2px">240</text><line x1="221.1" y1="1601.5" x2="1236.0" y2="1601.5" stroke="#dfe1e6" stroke-width="0.7" stroke-dasharray="1.5 1.5"/><line x1="218.1" y1="1601.5" x2="221.1" y2="1601.5" stroke="#c9ccd6" stroke-width="0.7"/><text x="216.6" y="1603.6" class="ax" text-anchor="end" style="font-size:6.2px">260</text><line x1="221.1" y1="1588.3" x2="1236.0" y2="1588.3" stroke="#dfe1e6" stroke-width="0.7" stroke-dasharray="1.5 1.5"/><line x1="218.1" y1="1588.3" x2="221.1" y2="1588.3" stroke="#c9ccd6" stroke-width="0.7"/><text x="216.6" y="1590.4" class="ax" text-anchor="end" style="font-size:6.2px">280</text><line x1="221.1" y1="1588.3" x2="221.1" y2="1773.0" stroke="#c9ccd9" stroke-width="1"/><line x1="221.1" y1="1773.5" x2="1229.8" y2="1773.5" stroke="#c9ccd9" stroke-width="0.8" stroke-dasharray="1.5 1.2"/><line x1="249.5" y1="1773.0" x2="249.5" y2="1776.0" stroke="#c9ccd9" stroke-width="0.8"/><text x="249.5" y="1783.5" class="ax" text-anchor="middle" style="font-size:6.2px">Jan 04</text><line x1="368.5" y1="1773.0" x2="368.5" y2="1776.0" stroke="#c9ccd9" stroke-width="0.8"/><text x="368.5" y="1783.5" class="ax" text-anchor="middle" style="font-size:6.2px">Jan 11</text><line x1="487.5" y1="1773.0" x2="487.5" y2="1776.0" stroke="#c9ccd9" stroke-width="0.8"/><text x="487.5" y="1783.5" class="ax" text-anchor="middle" style="font-size:6.2px">Jan 18</text><line x1="606.4" y1="1773.0" x2="606.4" y2="1776.0" stroke="#c9ccd9" stroke-width="0.8"/><text x="606.4" y="1783.5" class="ax" text-anchor="middle" style="font-size:6.2px">Jan 25</text><line x1="725.4" y1="1773.0" x2="725.4" y2="1776.0" stroke="#c9ccd9" stroke-width="0.8"/><text x="725.4" y="1783.5" class="ax" text-anchor="middle" style="font-size:6.2px">February</text><line x1="844.4" y1="1773.0" x2="844.4" y2="1776.0" stroke="#c9ccd9" stroke-width="0.8"/><text x="844.4" y="1783.5" class="ax" text-anchor="middle" style="font-size:6.2px">Feb 08</text><line x1="963.4" y1="1773.0" x2="963.4" y2="1776.0" stroke="#c9ccd9" stroke-width="0.8"/><text x="963.4" y="1783.5" class="ax" text-anchor="middle" style="font-size:6.2px">Feb 15</text><line x1="1082.4" y1="1773.0" x2="1082.4" y2="1776.0" stroke="#c9ccd9" stroke-width="0.8"/><text x="1082.4" y="1783.5" class="ax" text-anchor="middle" style="font-size:6.2px">Feb 22</text><line x1="1201.3" y1="1773.0" x2="1201.3" y2="1776.0" stroke="#c9ccd9" stroke-width="0.8"/><text x="1201.3" y="1783.5" class="ax" text-anchor="middle" style="font-size:6.2px">March</text><line x1="226.8" y1="1773.0" x2="226.8" y2="1776.0" stroke="#c9ccd9" stroke-width="0.8"/><line x1="1229.8" y1="1773.0" x2="1229.8" y2="1776.0" stroke="#c9ccd9" stroke-width="0.8"/><path d="M226.8 1770.4 C232.5 1771.2 238.1 1773.0 243.8 1773.0 C249.5 1773.0 255.1 1666.8 260.8 1666.8 C266.5 1666.8 272.1 1672.7 277.8 1672.7 C283.5 1672.7 289.1 1654.3 294.8 1654.3 C300.5 1654.3 306.1 1662.2 311.8 1662.2 C317.5 1662.2 323.1 1661.5 328.8 1661.5 C334.5 1661.5 340.1 1759.8 345.8 1764.4 C351.5 1769.0 357.1 1769.0 362.8 1769.0 C368.5 1769.0 374.1 1665.5 379.8 1665.5 C385.5 1665.5 391.1 1691.2 396.8 1691.2 C402.5 1691.2 408.1 1677.4 413.8 1677.4 C419.5 1677.4 425.1 1699.1 430.8 1699.1 C436.5 1699.1 442.1 1669.4 447.8 1669.4 C453.5 1669.4 459.1 1771.0 464.8 1771.0 C470.5 1771.0 476.1 1771.0 481.8 1767.1 C487.5 1763.1 493.1 1731.0 498.8 1711.0 C504.5 1691.0 510.1 1647.0 515.8 1647.0 C521.5 1647.0 527.1 1649.3 532.8 1651.6 C538.5 1653.9 544.1 1660.1 549.8 1660.9 C555.5 1661.6 561.1 1660.9 566.8 1666.1 C572.5 1671.4 578.1 1750.6 583.8 1761.1 C589.5 1771.7 595.1 1771.7 600.8 1771.7 C606.5 1771.7 612.1 1643.1 617.8 1643.1 C623.5 1643.1 629.1 1660.2 634.8 1661.5 C640.5 1662.8 646.1 1662.8 651.8 1662.8 C657.5 1662.8 663.1 1639.8 668.8 1639.8 C674.5 1639.8 680.1 1644.5 685.8 1664.8 C691.5 1685.2 697.1 1752.6 702.8 1761.8 C708.5 1771.0 714.1 1771.0 719.8 1771.0 C725.5 1771.0 731.1 1649.0 736.8 1647.7 C742.5 1646.3 748.1 1646.3 753.8 1646.3 C759.5 1646.3 765.1 1647.0 770.8 1647.0 C776.5 1647.0 782.1 1634.5 787.8 1634.5 C793.5 1634.5 799.1 1640.4 804.8 1662.8 C810.5 1685.3 816.1 1765.1 821.8 1769.0 C827.5 1773.0 833.1 1773.0 838.8 1773.0 C844.5 1773.0 850.1 1673.5 855.8 1647.7 C861.5 1621.8 867.1 1618.0 872.8 1618.0 C878.5 1618.0 884.1 1653.6 889.8 1655.6 C895.5 1657.6 901.1 1657.6 906.8 1657.6 C912.5 1657.6 918.1 1633.8 923.8 1633.8 C929.5 1633.8 935.1 1759.8 940.8 1766.4 C946.5 1773.0 952.1 1773.0 957.8 1773.0 C963.5 1773.0 969.1 1724.7 974.8 1707.0 C980.5 1689.3 986.1 1681.3 991.8 1666.8 C997.5 1652.3 1003.1 1621.9 1008.8 1620.0 C1014.5 1618.0 1020.1 1618.0 1025.8 1618.0 C1031.5 1618.0 1037.1 1621.2 1042.8 1645.0 C1048.5 1668.9 1054.1 1754.5 1059.8 1761.1 C1065.5 1767.7 1071.1 1767.7 1076.8 1767.7 C1082.5 1767.7 1088.1 1592.3 1093.8 1592.3 C1099.5 1592.3 1105.1 1614.5 1110.8 1621.3 C1116.5 1628.1 1122.1 1633.2 1127.8 1633.2 C1133.5 1633.2 1139.1 1614.7 1144.8 1614.7 C1150.5 1614.7 1156.1 1618.2 1161.8 1643.1 C1167.5 1667.9 1173.1 1762.4 1178.8 1763.8 C1184.5 1765.1 1190.1 1765.1 1195.8 1765.1 C1201.5 1765.1 1207.1 1633.8 1212.8 1633.8 C1218.5 1633.8 1224.1 1659.3 1229.8 1672.1" fill="none" stroke="#1aa34a" stroke-width="1.25" stroke-linejoin="round"/><circle cx="226.8" cy="1770.4" r="1.3" fill="#1aa34a"/><circle cx="243.8" cy="1773.0" r="1.3" fill="#1aa34a"/><circle cx="260.8" cy="1666.8" r="1.3" fill="#1aa34a"/><circle cx="277.8" cy="1672.7" r="1.3" fill="#1aa34a"/><circle cx="294.8" cy="1654.3" r="1.3" fill="#1aa34a"/><circle cx="311.8" cy="1662.2" r="1.3" fill="#1aa34a"/><circle cx="328.8" cy="1661.5" r="1.3" fill="#1aa34a"/><circle cx="345.8" cy="1764.4" r="1.3" fill="#1aa34a"/><circle cx="362.8" cy="1769.0" r="1.3" fill="#1aa34a"/><circle cx="379.8" cy="1665.5" r="1.3" fill="#1aa34a"/><circle cx="396.8" cy="1691.2" r="1.3" fill="#1aa34a"/><circle cx="413.8" cy="1677.4" r="1.3" fill="#1aa34a"/><circle cx="430.8" cy="1699.1" r="1.3" fill="#1aa34a"/><circle cx="447.8" cy="1669.4" r="1.3" fill="#1aa34a"/><circle cx="464.8" cy="1771.0" r="1.3" fill="#1aa34a"/><circle cx="481.8" cy="1767.1" r="1.3" fill="#1aa34a"/><circle cx="498.8" cy="1711.0" r="1.3" fill="#1aa34a"/><circle cx="515.8" cy="1647.0" r="1.3" fill="#1aa34a"/><circle cx="532.8" cy="1651.6" r="1.3" fill="#1aa34a"/><circle cx="549.8" cy="1660.9" r="1.3" fill="#1aa34a"/><circle cx="566.8" cy="1666.1" r="1.3" fill="#1aa34a"/><circle cx="583.8" cy="1761.1" r="1.3" fill="#1aa34a"/><circle cx="600.8" cy="1771.7" r="1.3" fill="#1aa34a"/><circle cx="617.8" cy="1643.1" r="1.3" fill="#1aa34a"/><circle cx="634.8" cy="1661.5" r="1.3" fill="#1aa34a"/><circle cx="651.8" cy="1662.8" r="1.3" fill="#1aa34a"/><circle cx="668.8" cy="1639.8" r="1.3" fill="#1aa34a"/><circle cx="685.8" cy="1664.8" r="1.3" fill="#1aa34a"/><circle cx="702.8" cy="1761.8" r="1.3" fill="#1aa34a"/><circle cx="719.8" cy="1771.0" r="1.3" fill="#1aa34a"/><circle cx="736.8" cy="1647.7" r="1.3" fill="#1aa34a"/><circle cx="753.8" cy="1646.3" r="1.3" fill="#1aa34a"/><circle cx="770.8" cy="1647.0" r="1.3" fill="#1aa34a"/><circle cx="787.8" cy="1634.5" r="1.3" fill="#1aa34a"/><circle cx="804.8" cy="1662.8" r="1.3" fill="#1aa34a"/><circle cx="821.8" cy="1769.0" r="1.3" fill="#1aa34a"/><circle cx="838.8" cy="1773.0" r="1.3" fill="#1aa34a"/><circle cx="855.8" cy="1647.7" r="1.3" fill="#1aa34a"/><circle cx="872.8" cy="1618.0" r="1.3" fill="#1aa34a"/><circle cx="889.8" cy="1655.6" r="1.3" fill="#1aa34a"/><circle cx="906.8" cy="1657.6" r="1.3" fill="#1aa34a"/><circle cx="923.8" cy="1633.8" r="1.3" fill="#1aa34a"/><circle cx="940.8" cy="1766.4" r="1.3" fill="#1aa34a"/><circle cx="957.8" cy="1773.0" r="1.3" fill="#1aa34a"/><circle cx="974.8" cy="1707.0" r="1.3" fill="#1aa34a"/><circle cx="991.8" cy="1666.8" r="1.3" fill="#1aa34a"/><circle cx="1008.8" cy="1620.0" r="1.3" fill="#1aa34a"/><circle cx="1025.8" cy="1618.0" r="1.3" fill="#1aa34a"/><circle cx="1042.8" cy="1645.0" r="1.3" fill="#1aa34a"/><circle cx="1059.8" cy="1761.1" r="1.3" fill="#1aa34a"/><circle cx="1076.8" cy="1767.7" r="1.3" fill="#1aa34a"/><circle cx="1093.8" cy="1592.3" r="1.3" fill="#1aa34a"/><circle cx="1110.8" cy="1621.3" r="1.3" fill="#1aa34a"/><circle cx="1127.8" cy="1633.2" r="1.3" fill="#1aa34a"/><circle cx="1144.8" cy="1614.7" r="1.3" fill="#1aa34a"/><circle cx="1161.8" cy="1643.1" r="1.3" fill="#1aa34a"/><circle cx="1178.8" cy="1763.8" r="1.3" fill="#1aa34a"/><circle cx="1195.8" cy="1765.1" r="1.3" fill="#1aa34a"/><circle cx="1212.8" cy="1633.8" r="1.3" fill="#1aa34a"/><circle cx="1229.8" cy="1672.1" r="1.3" fill="#1aa34a"/><path d="M226.8 1771.7 C232.5 1772.1 238.1 1773.0 243.8 1773.0 C249.5 1773.0 255.1 1738.0 260.8 1731.4 C266.5 1724.8 272.1 1724.8 277.8 1724.8 C283.5 1724.8 289.1 1749.3 294.8 1749.3 C300.5 1749.3 306.1 1736.4 311.8 1732.8 C317.5 1729.1 323.1 1727.5 328.8 1727.5 C334.5 1727.5 340.1 1770.4 345.8 1770.4 C351.5 1770.4 357.1 1770.4 362.8 1769.7 C368.5 1769.0 374.1 1723.5 379.8 1723.5 C385.5 1723.5 391.1 1725.6 396.8 1727.5 C402.5 1729.4 408.1 1734.7 413.8 1734.7 C419.5 1734.7 425.1 1721.5 430.8 1721.5 C436.5 1721.5 442.1 1721.5 447.8 1729.5 C453.5 1737.4 459.1 1768.4 464.8 1770.4 C470.5 1772.3 476.1 1772.3 481.8 1772.3 C487.5 1772.3 493.1 1752.7 498.8 1743.3 C504.5 1734.0 510.1 1716.3 515.8 1716.3 C521.5 1716.3 527.1 1728.8 532.8 1728.8 C538.5 1728.8 544.1 1717.6 549.8 1717.6 C555.5 1717.6 561.1 1717.6 566.8 1717.6 C572.5 1717.6 578.1 1758.5 583.8 1765.1 C589.5 1771.7 595.1 1771.7 600.8 1771.7 C606.5 1771.7 612.1 1713.6 617.8 1713.6 C623.5 1713.6 629.1 1725.5 634.8 1725.5 C640.5 1725.5 646.1 1715.6 651.8 1715.6 C657.5 1715.6 663.1 1715.6 668.8 1715.6 C674.5 1715.6 680.1 1707.0 685.8 1707.0 C691.5 1707.0 697.1 1767.7 702.8 1767.7 C708.5 1767.7 714.1 1767.7 719.8 1763.1 C725.5 1758.5 731.1 1746.8 736.8 1739.4 C742.5 1731.9 748.1 1718.2 753.8 1718.2 C759.5 1718.2 765.1 1726.4 770.8 1729.5 C776.5 1732.5 782.1 1736.7 787.8 1736.7 C793.5 1736.7 799.1 1726.8 804.8 1726.8 C810.5 1726.8 816.1 1768.4 821.8 1769.7 C827.5 1771.0 833.1 1771.0 838.8 1771.0 C844.5 1771.0 850.1 1711.0 855.8 1711.0 C861.5 1711.0 867.1 1734.7 872.8 1734.7 C878.5 1734.7 884.1 1734.4 889.8 1732.1 C895.5 1729.8 901.1 1720.9 906.8 1720.9 C912.5 1720.9 918.1 1724.6 923.8 1732.1 C929.5 1739.6 935.1 1761.8 940.8 1765.7 C946.5 1769.7 952.1 1769.7 957.8 1769.7 C963.5 1769.7 969.1 1763.8 974.8 1757.8 C980.5 1751.9 986.1 1747.6 991.8 1734.1 C997.5 1720.6 1003.1 1676.7 1008.8 1676.7 C1014.5 1676.7 1020.1 1709.1 1025.8 1718.2 C1031.5 1727.4 1037.1 1724.4 1042.8 1731.4 C1048.5 1738.5 1054.1 1760.5 1059.8 1760.5 C1065.5 1760.5 1071.1 1760.5 1076.8 1759.1 C1082.5 1757.8 1088.1 1704.4 1093.8 1704.4 C1099.5 1704.4 1105.1 1724.2 1110.8 1724.2 C1116.5 1724.2 1122.1 1705.7 1127.8 1705.7 C1133.5 1705.7 1139.1 1726.8 1144.8 1726.8 C1150.5 1726.8 1156.1 1708.4 1161.8 1708.4 C1167.5 1708.4 1173.1 1765.1 1178.8 1767.1 C1184.5 1769.0 1190.1 1769.0 1195.8 1769.0 C1201.5 1769.0 1207.1 1737.0 1212.8 1725.5 C1218.5 1714.0 1224.1 1708.4 1229.8 1699.8" fill="none" stroke="#f2c000" stroke-width="1.25" stroke-linejoin="round"/><circle cx="226.8" cy="1771.7" r="1.3" fill="#f2c000"/><circle cx="243.8" cy="1773.0" r="1.3" fill="#f2c000"/><circle cx="260.8" cy="1731.4" r="1.3" fill="#f2c000"/><circle cx="277.8" cy="1724.8" r="1.3" fill="#f2c000"/><circle cx="294.8" cy="1749.3" r="1.3" fill="#f2c000"/><circle cx="311.8" cy="1732.8" r="1.3" fill="#f2c000"/><circle cx="328.8" cy="1727.5" r="1.3" fill="#f2c000"/><circle cx="345.8" cy="1770.4" r="1.3" fill="#f2c000"/><circle cx="362.8" cy="1769.7" r="1.3" fill="#f2c000"/><circle cx="379.8" cy="1723.5" r="1.3" fill="#f2c000"/><circle cx="396.8" cy="1727.5" r="1.3" fill="#f2c000"/><circle cx="413.8" cy="1734.7" r="1.3" fill="#f2c000"/><circle cx="430.8" cy="1721.5" r="1.3" fill="#f2c000"/><circle cx="447.8" cy="1729.5" r="1.3" fill="#f2c000"/><circle cx="464.8" cy="1770.4" r="1.3" fill="#f2c000"/><circle cx="481.8" cy="1772.3" r="1.3" fill="#f2c000"/><circle cx="498.8" cy="1743.3" r="1.3" fill="#f2c000"/><circle cx="515.8" cy="1716.3" r="1.3" fill="#f2c000"/><circle cx="532.8" cy="1728.8" r="1.3" fill="#f2c000"/><circle cx="549.8" cy="1717.6" r="1.3" fill="#f2c000"/><circle cx="566.8" cy="1717.6" r="1.3" fill="#f2c000"/><circle cx="583.8" cy="1765.1" r="1.3" fill="#f2c000"/><circle cx="600.8" cy="1771.7" r="1.3" fill="#f2c000"/><circle cx="617.8" cy="1713.6" r="1.3" fill="#f2c000"/><circle cx="634.8" cy="1725.5" r="1.3" fill="#f2c000"/><circle cx="651.8" cy="1715.6" r="1.3" fill="#f2c000"/><circle cx="668.8" cy="1715.6" r="1.3" fill="#f2c000"/><circle cx="685.8" cy="1707.0" r="1.3" fill="#f2c000"/><circle cx="702.8" cy="1767.7" r="1.3" fill="#f2c000"/><circle cx="719.8" cy="1763.1" r="1.3" fill="#f2c000"/><circle cx="736.8" cy="1739.4" r="1.3" fill="#f2c000"/><circle cx="753.8" cy="1718.2" r="1.3" fill="#f2c000"/><circle cx="770.8" cy="1729.5" r="1.3" fill="#f2c000"/><circle cx="787.8" cy="1736.7" r="1.3" fill="#f2c000"/><circle cx="804.8" cy="1726.8" r="1.3" fill="#f2c000"/><circle cx="821.8" cy="1769.7" r="1.3" fill="#f2c000"/><circle cx="838.8" cy="1771.0" r="1.3" fill="#f2c000"/><circle cx="855.8" cy="1711.0" r="1.3" fill="#f2c000"/><circle cx="872.8" cy="1734.7" r="1.3" fill="#f2c000"/><circle cx="889.8" cy="1732.1" r="1.3" fill="#f2c000"/><circle cx="906.8" cy="1720.9" r="1.3" fill="#f2c000"/><circle cx="923.8" cy="1732.1" r="1.3" fill="#f2c000"/><circle cx="940.8" cy="1765.7" r="1.3" fill="#f2c000"/><circle cx="957.8" cy="1769.7" r="1.3" fill="#f2c000"/><circle cx="974.8" cy="1757.8" r="1.3" fill="#f2c000"/><circle cx="991.8" cy="1734.1" r="1.3" fill="#f2c000"/><circle cx="1008.8" cy="1676.7" r="1.3" fill="#f2c000"/><circle cx="1025.8" cy="1718.2" r="1.3" fill="#f2c000"/><circle cx="1042.8" cy="1731.4" r="1.3" fill="#f2c000"/><circle cx="1059.8" cy="1760.5" r="1.3" fill="#f2c000"/><circle cx="1076.8" cy="1759.1" r="1.3" fill="#f2c000"/><circle cx="1093.8" cy="1704.4" r="1.3" fill="#f2c000"/><circle cx="1110.8" cy="1724.2" r="1.3" fill="#f2c000"/><circle cx="1127.8" cy="1705.7" r="1.3" fill="#f2c000"/><circle cx="1144.8" cy="1726.8" r="1.3" fill="#f2c000"/><circle cx="1161.8" cy="1708.4" r="1.3" fill="#f2c000"/><circle cx="1178.8" cy="1767.1" r="1.3" fill="#f2c000"/><circle cx="1195.8" cy="1769.0" r="1.3" fill="#f2c000"/><circle cx="1212.8" cy="1725.5" r="1.3" fill="#f2c000"/><circle cx="1229.8" cy="1699.8" r="1.3" fill="#f2c000"/><path d="M226.8 1765.1 C232.5 1767.7 238.1 1773.0 243.8 1773.0 C249.5 1773.0 255.1 1751.2 260.8 1751.2 C266.5 1751.2 272.1 1759.8 277.8 1761.1 C283.5 1762.4 289.1 1762.2 294.8 1762.4 C300.5 1762.7 306.1 1763.1 311.8 1763.1 C317.5 1763.1 323.1 1757.8 328.8 1757.8 C334.5 1757.8 340.1 1771.0 345.8 1771.0 C351.5 1771.0 357.1 1771.0 362.8 1767.7 C368.5 1764.4 374.1 1732.1 379.8 1732.1 C385.5 1732.1 391.1 1756.5 396.8 1756.5 C402.5 1756.5 408.1 1753.9 413.8 1753.9 C419.5 1753.9 425.1 1757.2 430.8 1757.2 C436.5 1757.2 442.1 1753.2 447.8 1753.2 C453.5 1753.2 459.1 1769.7 464.8 1771.0 C470.5 1772.3 476.1 1772.3 481.8 1772.3 C487.5 1772.3 493.1 1764.9 498.8 1759.8 C504.5 1754.7 510.1 1742.0 515.8 1742.0 C521.5 1742.0 527.1 1764.4 532.8 1764.4 C538.5 1764.4 544.1 1764.2 549.8 1761.8 C555.5 1759.4 561.1 1749.9 566.8 1749.9 C572.5 1749.9 578.1 1762.4 583.8 1765.7 C589.5 1769.0 595.1 1769.7 600.8 1769.7 C606.5 1769.7 612.1 1766.7 617.8 1764.4 C623.5 1762.1 629.1 1757.7 634.8 1755.8 C640.5 1754.0 646.1 1753.2 651.8 1753.2 C657.5 1753.2 663.1 1758.1 668.8 1758.5 C674.5 1758.9 680.1 1758.6 685.8 1759.1 C691.5 1759.7 697.1 1767.1 702.8 1767.1 C708.5 1767.1 714.1 1766.3 719.8 1765.1 C725.5 1763.9 731.1 1759.8 736.8 1759.8 C742.5 1759.8 748.1 1759.8 753.8 1759.8 C759.5 1759.8 765.1 1755.8 770.8 1755.8 C776.5 1755.8 782.1 1757.8 787.8 1757.8 C793.5 1757.8 799.1 1755.2 804.8 1755.2 C810.5 1755.2 816.1 1768.4 821.8 1770.4 C827.5 1772.3 833.1 1772.3 838.8 1772.3 C844.5 1772.3 850.1 1750.6 855.8 1750.6 C861.5 1750.6 867.1 1751.1 872.8 1751.9 C878.5 1752.7 884.1 1755.2 889.8 1755.2 C895.5 1755.2 901.1 1754.5 906.8 1754.5 C912.5 1754.5 918.1 1760.9 923.8 1761.8 C929.5 1762.7 935.1 1762.1 940.8 1763.1 C946.5 1764.1 952.1 1771.7 957.8 1771.7 C963.5 1771.7 969.1 1767.3 974.8 1765.7 C980.5 1764.2 986.1 1764.9 991.8 1762.4 C997.5 1760.0 1003.1 1754.1 1008.8 1751.2 C1014.5 1748.4 1020.1 1745.3 1025.8 1745.3 C1031.5 1745.3 1037.1 1762.4 1042.8 1762.4 C1048.5 1762.4 1054.1 1762.4 1059.8 1762.4 C1065.5 1762.4 1071.1 1767.7 1076.8 1767.7 C1082.5 1767.7 1088.1 1754.5 1093.8 1754.5 C1099.5 1754.5 1105.1 1759.1 1110.8 1759.1 C1116.5 1759.1 1122.1 1751.3 1127.8 1746.6 C1133.5 1741.9 1139.1 1730.8 1144.8 1730.8 C1150.5 1730.8 1156.1 1756.1 1161.8 1761.1 C1167.5 1766.1 1173.1 1764.7 1178.8 1766.4 C1184.5 1768.1 1190.1 1773.0 1195.8 1773.0 C1201.5 1773.0 1207.1 1765.6 1212.8 1763.8 C1218.5 1761.9 1224.1 1762.4 1229.8 1761.8" fill="none" stroke="#ff6a1a" stroke-width="1.25" stroke-linejoin="round"/><circle cx="226.8" cy="1765.1" r="1.3" fill="#ff6a1a"/><circle cx="243.8" cy="1773.0" r="1.3" fill="#ff6a1a"/><circle cx="260.8" cy="1751.2" r="1.3" fill="#ff6a1a"/><circle cx="277.8" cy="1761.1" r="1.3" fill="#ff6a1a"/><circle cx="294.8" cy="1762.4" r="1.3" fill="#ff6a1a"/><circle cx="311.8" cy="1763.1" r="1.3" fill="#ff6a1a"/><circle cx="328.8" cy="1757.8" r="1.3" fill="#ff6a1a"/><circle cx="345.8" cy="1771.0" r="1.3" fill="#ff6a1a"/><circle cx="362.8" cy="1767.7" r="1.3" fill="#ff6a1a"/><circle cx="379.8" cy="1732.1" r="1.3" fill="#ff6a1a"/><circle cx="396.8" cy="1756.5" r="1.3" fill="#ff6a1a"/><circle cx="413.8" cy="1753.9" r="1.3" fill="#ff6a1a"/><circle cx="430.8" cy="1757.2" r="1.3" fill="#ff6a1a"/><circle cx="447.8" cy="1753.2" r="1.3" fill="#ff6a1a"/><circle cx="464.8" cy="1771.0" r="1.3" fill="#ff6a1a"/><circle cx="481.8" cy="1772.3" r="1.3" fill="#ff6a1a"/><circle cx="498.8" cy="1759.8" r="1.3" fill="#ff6a1a"/><circle cx="515.8" cy="1742.0" r="1.3" fill="#ff6a1a"/><circle cx="532.8" cy="1764.4" r="1.3" fill="#ff6a1a"/><circle cx="549.8" cy="1761.8" r="1.3" fill="#ff6a1a"/><circle cx="566.8" cy="1749.9" r="1.3" fill="#ff6a1a"/><circle cx="583.8" cy="1765.7" r="1.3" fill="#ff6a1a"/><circle cx="600.8" cy="1769.7" r="1.3" fill="#ff6a1a"/><circle cx="617.8" cy="1764.4" r="1.3" fill="#ff6a1a"/><circle cx="634.8" cy="1755.8" r="1.3" fill="#ff6a1a"/><circle cx="651.8" cy="1753.2" r="1.3" fill="#ff6a1a"/><circle cx="668.8" cy="1758.5" r="1.3" fill="#ff6a1a"/><circle cx="685.8" cy="1759.1" r="1.3" fill="#ff6a1a"/><circle cx="702.8" cy="1767.1" r="1.3" fill="#ff6a1a"/><circle cx="719.8" cy="1765.1" r="1.3" fill="#ff6a1a"/><circle cx="736.8" cy="1759.8" r="1.3" fill="#ff6a1a"/><circle cx="753.8" cy="1759.8" r="1.3" fill="#ff6a1a"/><circle cx="770.8" cy="1755.8" r="1.3" fill="#ff6a1a"/><circle cx="787.8" cy="1757.8" r="1.3" fill="#ff6a1a"/><circle cx="804.8" cy="1755.2" r="1.3" fill="#ff6a1a"/><circle cx="821.8" cy="1770.4" r="1.3" fill="#ff6a1a"/><circle cx="838.8" cy="1772.3" r="1.3" fill="#ff6a1a"/><circle cx="855.8" cy="1750.6" r="1.3" fill="#ff6a1a"/><circle cx="872.8" cy="1751.9" r="1.3" fill="#ff6a1a"/><circle cx="889.8" cy="1755.2" r="1.3" fill="#ff6a1a"/><circle cx="906.8" cy="1754.5" r="1.3" fill="#ff6a1a"/><circle cx="923.8" cy="1761.8" r="1.3" fill="#ff6a1a"/><circle cx="940.8" cy="1763.1" r="1.3" fill="#ff6a1a"/><circle cx="957.8" cy="1771.7" r="1.3" fill="#ff6a1a"/><circle cx="974.8" cy="1765.7" r="1.3" fill="#ff6a1a"/><circle cx="991.8" cy="1762.4" r="1.3" fill="#ff6a1a"/><circle cx="1008.8" cy="1751.2" r="1.3" fill="#ff6a1a"/><circle cx="1025.8" cy="1745.3" r="1.3" fill="#ff6a1a"/><circle cx="1042.8" cy="1762.4" r="1.3" fill="#ff6a1a"/><circle cx="1059.8" cy="1762.4" r="1.3" fill="#ff6a1a"/><circle cx="1076.8" cy="1767.7" r="1.3" fill="#ff6a1a"/><circle cx="1093.8" cy="1754.5" r="1.3" fill="#ff6a1a"/><circle cx="1110.8" cy="1759.1" r="1.3" fill="#ff6a1a"/><circle cx="1127.8" cy="1746.6" r="1.3" fill="#ff6a1a"/><circle cx="1144.8" cy="1730.8" r="1.3" fill="#ff6a1a"/><circle cx="1161.8" cy="1761.1" r="1.3" fill="#ff6a1a"/><circle cx="1178.8" cy="1766.4" r="1.3" fill="#ff6a1a"/><circle cx="1195.8" cy="1773.0" r="1.3" fill="#ff6a1a"/><circle cx="1212.8" cy="1763.8" r="1.3" fill="#ff6a1a"/><circle cx="1229.8" cy="1761.8" r="1.3" fill="#ff6a1a"/><path d="M226.8 1773.0 C232.5 1773.0 238.1 1773.0 243.8 1773.0 C249.5 1773.0 255.1 1773.0 260.8 1771.0 C266.5 1769.0 272.1 1757.2 277.8 1742.0 C283.5 1726.8 289.1 1680.0 294.8 1680.0 C300.5 1680.0 306.1 1752.0 311.8 1759.8 C317.5 1767.7 323.1 1766.7 328.8 1767.7 C334.5 1768.8 340.1 1770.8 345.8 1771.7 C351.5 1772.6 357.1 1773.0 362.8 1773.0 C368.5 1773.0 374.1 1773.0 379.8 1773.0 C385.5 1773.0 391.1 1771.7 396.8 1771.7 C402.5 1771.7 408.1 1772.3 413.8 1772.3 C419.5 1772.3 425.1 1772.1 430.8 1771.7 C436.5 1771.2 442.1 1769.7 447.8 1769.7 C453.5 1769.7 459.1 1773.0 464.8 1773.0 C470.5 1773.0 476.1 1773.0 481.8 1773.0 C487.5 1773.0 493.1 1773.0 498.8 1773.0 C504.5 1773.0 510.1 1769.0 515.8 1769.0 C521.5 1769.0 527.1 1771.7 532.8 1771.7 C538.5 1771.7 544.1 1770.4 549.8 1770.4 C555.5 1770.4 561.1 1771.2 566.8 1771.7 C572.5 1772.1 578.1 1773.0 583.8 1773.0 C589.5 1773.0 595.1 1773.0 600.8 1773.0 C606.5 1773.0 612.1 1773.0 617.8 1773.0 C623.5 1773.0 629.1 1772.7 634.8 1772.3 C640.5 1772.0 646.1 1771.0 651.8 1771.0 C657.5 1771.0 663.1 1771.5 668.8 1771.7 C674.5 1771.9 680.1 1772.3 685.8 1772.3 C691.5 1772.3 697.1 1771.7 702.8 1771.7 C708.5 1771.7 714.1 1771.7 719.8 1771.7 C725.5 1771.7 731.1 1773.0 736.8 1773.0 C742.5 1773.0 748.1 1770.4 753.8 1770.4 C759.5 1770.4 765.1 1771.7 770.8 1771.7 C776.5 1771.7 782.1 1771.0 787.8 1771.0 C793.5 1771.0 799.1 1773.0 804.8 1773.0 C810.5 1773.0 816.1 1773.0 821.8 1773.0 C827.5 1773.0 833.1 1773.0 838.8 1773.0 C844.5 1773.0 850.1 1761.1 855.8 1761.1 C861.5 1761.1 867.1 1773.0 872.8 1773.0 C878.5 1773.0 884.1 1770.4 889.8 1770.4 C895.5 1770.4 901.1 1773.0 906.8 1773.0 C912.5 1773.0 918.1 1773.0 923.8 1773.0 C929.5 1773.0 935.1 1745.3 940.8 1745.3 C946.5 1745.3 952.1 1769.7 957.8 1771.0 C963.5 1772.3 969.1 1772.3 974.8 1772.3 C980.5 1772.3 986.1 1772.0 991.8 1771.7 C997.5 1771.4 1003.1 1770.4 1008.8 1770.4 C1014.5 1770.4 1020.1 1772.3 1025.8 1772.3 C1031.5 1772.3 1037.1 1771.7 1042.8 1771.7 C1048.5 1771.7 1054.1 1773.0 1059.8 1773.0 C1065.5 1773.0 1071.1 1773.0 1076.8 1773.0 C1082.5 1773.0 1088.1 1772.3 1093.8 1772.3 C1099.5 1772.3 1105.1 1772.3 1110.8 1772.3 C1116.5 1772.3 1122.1 1769.7 1127.8 1769.7 C1133.5 1769.7 1139.1 1773.0 1144.8 1773.0 C1150.5 1773.0 1156.1 1773.0 1161.8 1773.0 C1167.5 1773.0 1173.1 1773.0 1178.8 1773.0 C1184.5 1773.0 1190.1 1773.0 1195.8 1773.0 C1201.5 1773.0 1207.1 1771.7 1212.8 1771.7 C1218.5 1771.7 1224.1 1772.1 1229.8 1772.3" fill="none" stroke="#e0161b" stroke-width="1.25" stroke-linejoin="round"/><circle cx="226.8" cy="1773.0" r="1.3" fill="#e0161b"/><circle cx="243.8" cy="1773.0" r="1.3" fill="#e0161b"/><circle cx="260.8" cy="1771.0" r="1.3" fill="#e0161b"/><circle cx="277.8" cy="1742.0" r="1.3" fill="#e0161b"/><circle cx="294.8" cy="1680.0" r="1.3" fill="#e0161b"/><circle cx="311.8" cy="1759.8" r="1.3" fill="#e0161b"/><circle cx="328.8" cy="1767.7" r="1.3" fill="#e0161b"/><circle cx="345.8" cy="1771.7" r="1.3" fill="#e0161b"/><circle cx="362.8" cy="1773.0" r="1.3" fill="#e0161b"/><circle cx="379.8" cy="1773.0" r="1.3" fill="#e0161b"/><circle cx="396.8" cy="1771.7" r="1.3" fill="#e0161b"/><circle cx="413.8" cy="1772.3" r="1.3" fill="#e0161b"/><circle cx="430.8" cy="1771.7" r="1.3" fill="#e0161b"/><circle cx="447.8" cy="1769.7" r="1.3" fill="#e0161b"/><circle cx="464.8" cy="1773.0" r="1.3" fill="#e0161b"/><circle cx="481.8" cy="1773.0" r="1.3" fill="#e0161b"/><circle cx="498.8" cy="1773.0" r="1.3" fill="#e0161b"/><circle cx="515.8" cy="1769.0" r="1.3" fill="#e0161b"/><circle cx="532.8" cy="1771.7" r="1.3" fill="#e0161b"/><circle cx="549.8" cy="1770.4" r="1.3" fill="#e0161b"/><circle cx="566.8" cy="1771.7" r="1.3" fill="#e0161b"/><circle cx="583.8" cy="1773.0" r="1.3" fill="#e0161b"/><circle cx="600.8" cy="1773.0" r="1.3" fill="#e0161b"/><circle cx="617.8" cy="1773.0" r="1.3" fill="#e0161b"/><circle cx="634.8" cy="1772.3" r="1.3" fill="#e0161b"/><circle cx="651.8" cy="1771.0" r="1.3" fill="#e0161b"/><circle cx="668.8" cy="1771.7" r="1.3" fill="#e0161b"/><circle cx="685.8" cy="1772.3" r="1.3" fill="#e0161b"/><circle cx="702.8" cy="1771.7" r="1.3" fill="#e0161b"/><circle cx="719.8" cy="1771.7" r="1.3" fill="#e0161b"/><circle cx="736.8" cy="1773.0" r="1.3" fill="#e0161b"/><circle cx="753.8" cy="1770.4" r="1.3" fill="#e0161b"/><circle cx="770.8" cy="1771.7" r="1.3" fill="#e0161b"/><circle cx="787.8" cy="1771.0" r="1.3" fill="#e0161b"/><circle cx="804.8" cy="1773.0" r="1.3" fill="#e0161b"/><circle cx="821.8" cy="1773.0" r="1.3" fill="#e0161b"/><circle cx="838.8" cy="1773.0" r="1.3" fill="#e0161b"/><circle cx="855.8" cy="1761.1" r="1.3" fill="#e0161b"/><circle cx="872.8" cy="1773.0" r="1.3" fill="#e0161b"/><circle cx="889.8" cy="1770.4" r="1.3" fill="#e0161b"/><circle cx="906.8" cy="1773.0" r="1.3" fill="#e0161b"/><circle cx="923.8" cy="1773.0" r="1.3" fill="#e0161b"/><circle cx="940.8" cy="1745.3" r="1.3" fill="#e0161b"/><circle cx="957.8" cy="1771.0" r="1.3" fill="#e0161b"/><circle cx="974.8" cy="1772.3" r="1.3" fill="#e0161b"/><circle cx="991.8" cy="1771.7" r="1.3" fill="#e0161b"/><circle cx="1008.8" cy="1770.4" r="1.3" fill="#e0161b"/><circle cx="1025.8" cy="1772.3" r="1.3" fill="#e0161b"/><circle cx="1042.8" cy="1771.7" r="1.3" fill="#e0161b"/><circle cx="1059.8" cy="1773.0" r="1.3" fill="#e0161b"/><circle cx="1076.8" cy="1773.0" r="1.3" fill="#e0161b"/><circle cx="1093.8" cy="1772.3" r="1.3" fill="#e0161b"/><circle cx="1110.8" cy="1772.3" r="1.3" fill="#e0161b"/><circle cx="1127.8" cy="1769.7" r="1.3" fill="#e0161b"/><circle cx="1144.8" cy="1773.0" r="1.3" fill="#e0161b"/><circle cx="1161.8" cy="1773.0" r="1.3" fill="#e0161b"/><circle cx="1178.8" cy="1773.0" r="1.3" fill="#e0161b"/><circle cx="1195.8" cy="1773.0" r="1.3" fill="#e0161b"/><circle cx="1212.8" cy="1771.7" r="1.3" fill="#e0161b"/><circle cx="1229.8" cy="1772.3" r="1.3" fill="#e0161b"/></svg>
<div class="sec" style="left:180.7px;top:1824px">Authentication Breakdown</div>
<div class="card" style="left:176.0px;top:1847.8px;width:355.3px;height:234.2px"></div>
<div class="ct" style="left:186.5px;top:1858.8px">Auth Methods</div>
<svg style="left:511.2px;top:1858.6px" width="10.6" height="10.6" viewBox="0 0 12 12"><circle cx="6" cy="6" r="5.1" fill="none" stroke="#3b86e8" stroke-width="1.3"/><rect x="5.4" y="5.2" width="1.2" height="3.4" rx="0.5" fill="#3b86e8"/><circle cx="6" cy="3.6" r="0.75" fill="#3b86e8"/></svg>
<svg style="left:0;top:0" width="1282" height="2109"><path d="M352.30 1874.80 A82.20 82.20 0 1 1 285.34 1909.33 L310.75 1927.42 A51.00 51.00 0 1 0 352.30 1906.00Z" fill="#4fc6f6"/><path d="M285.34 1909.33 A82.20 82.20 0 0 1 330.57 1877.72 L338.82 1907.81 A51.00 51.00 0 0 0 310.75 1927.42Z" fill="#ff6a00"/><path d="M330.57 1877.72 A82.20 82.20 0 0 1 341.97 1875.45 L345.89 1906.40 A51.00 51.00 0 0 0 338.82 1907.81Z" fill="#ee3f98"/><path d="M341.97 1875.45 A82.20 82.20 0 0 1 350.89 1874.81 L351.42 1906.01 A51.00 51.00 0 0 0 345.89 1906.40Z" fill="#4a6fc8"/><path d="M350.89 1874.81 A82.20 82.20 0 0 1 352.30 1874.80 L352.30 1906.00 A51.00 51.00 0 0 0 351.42 1906.01Z" fill="#a9c23c"/></svg>
<div class="a" style="left:220.5px;top:2045.8px;width:2px;height:24.5px;border-radius:1px;background:#4fc6f6"></div>
<div class="a" style="left:227.0px;top:2047.3px;font-size:7.8px;line-height:9px;color:#5d6573">PUSH</div>
<div class="a" style="left:227.0px;top:2059.6px;font-size:7.8px;line-height:9px;font-weight:bold;color:#343c49">6814 (85%)</div>
<div class="a" style="left:279.7px;top:2045.8px;width:2px;height:24.5px;border-radius:1px;background:#ff6a00"></div>
<div class="a" style="left:286.2px;top:2047.3px;font-size:7.8px;line-height:9px;color:#5d6573">SYMBOL_PUSH</div>
<div class="a" style="left:286.2px;top:2059.6px;font-size:7.8px;line-height:9px;font-weight:bold;color:#343c49">875 (11%)</div>
<div class="a" style="left:351.3px;top:2045.8px;width:2px;height:24.5px;border-radius:1px;background:#ee3f98"></div>
<div class="a" style="left:357.8px;top:2047.3px;font-size:7.8px;line-height:9px;color:#5d6573">TOTP</div>
<div class="a" style="left:357.8px;top:2059.6px;font-size:7.8px;line-height:9px;font-weight:bold;color:#343c49">181 (2%)</div>
<div class="a" style="left:399.8px;top:2045.8px;width:2px;height:24.5px;border-radius:1px;background:#4a6fc8"></div>
<div class="a" style="left:406.3px;top:2047.3px;font-size:7.8px;line-height:9px;color:#5d6573">FIDO_U2F</div>
<div class="a" style="left:406.3px;top:2059.6px;font-size:7.8px;line-height:9px;font-weight:bold;color:#343c49">139 (2%)</div>
<div class="a" style="left:452.1px;top:2045.8px;width:2px;height:24.5px;border-radius:1px;background:#a9c23c"></div>
<div class="a" style="left:458.6px;top:2047.3px;font-size:7.8px;line-height:9px;color:#5d6573">SMS</div>
<div class="a" style="left:458.6px;top:2059.6px;font-size:7.8px;line-height:9px;font-weight:bold;color:#343c49">22 (0%)</div>
<div class="card" style="left:537.2px;top:1847.8px;width:355.3px;height:234.2px"></div>
<div class="ct" style="left:547.7px;top:1858.8px">Platforms</div>
<svg style="left:872.4px;top:1858.6px" width="10.6" height="10.6" viewBox="0 0 12 12"><circle cx="6" cy="6" r="5.1" fill="none" stroke="#3b86e8" stroke-width="1.3"/><rect x="5.4" y="5.2" width="1.2" height="3.4" rx="0.5" fill="#3b86e8"/><circle cx="6" cy="3.6" r="0.75" fill="#3b86e8"/></svg>
<svg style="left:0;top:0" width="1282" height="2109"><path d="M714.00 1874.80 A82.20 82.20 0 1 1 666.75 2024.26 L684.68 1998.73 A51.00 51.00 0 1 0 714.00 1906.00Z" fill="#f5c300"/><path d="M666.75 2024.26 A82.20 82.20 0 0 1 691.45 1877.95 L700.01 1907.96 A51.00 51.00 0 0 0 684.68 1998.73Z" fill="#e00000"/><path d="M691.45 1877.95 A82.20 82.20 0 0 1 705.12 1875.28 L708.49 1906.30 A51.00 51.00 0 0 0 700.01 1907.96Z" fill="#c43d80"/><path d="M705.12 1875.28 A82.20 82.20 0 0 1 712.11 1874.82 L712.83 1906.01 A51.00 51.00 0 0 0 708.49 1906.30Z" fill="#1bb3cf"/><path d="M712.11 1874.82 A82.20 82.20 0 0 1 714.00 1874.80 L714.00 1906.00 A51.00 51.00 0 0 0 712.83 1906.01Z" fill="#d49b12"/></svg>
<div class="a" style="left:588.5px;top:2045.8px;width:2px;height:24.5px;border-radius:1px;background:#f5c300"></div>
<div class="a" style="left:595.0px;top:2047.3px;font-size:7.8px;line-height:9px;color:#5d6573">macOS</div>
<div class="a" style="left:595.0px;top:2059.6px;font-size:7.8px;line-height:9px;font-weight:bold;color:#343c49">7524 (60%)</div>
<div class="a" style="left:648.3px;top:2045.8px;width:2px;height:24.5px;border-radius:1px;background:#e00000"></div>
<div class="a" style="left:654.8px;top:2047.3px;font-size:7.8px;line-height:9px;color:#5d6573">Windows</div>
<div class="a" style="left:654.8px;top:2059.6px;font-size:7.8px;line-height:9px;font-weight:bold;color:#343c49">4512 (36%)</div>
<div class="a" style="left:707.9px;top:2045.8px;width:2px;height:24.5px;border-radius:1px;background:#c43d80"></div>
<div class="a" style="left:714.4px;top:2047.3px;font-size:7.8px;line-height:9px;color:#5d6573">Android</div>
<div class="a" style="left:714.4px;top:2059.6px;font-size:7.8px;line-height:9px;font-weight:bold;color:#343c49">340 (3%)</div>
<div class="a" style="left:759.3px;top:2045.8px;width:2px;height:24.5px;border-radius:1px;background:#1bb3cf"></div>
<div class="a" style="left:765.8px;top:2047.3px;font-size:7.8px;line-height:9px;color:#5d6573">iOS</div>
<div class="a" style="left:765.8px;top:2059.6px;font-size:7.8px;line-height:9px;font-weight:bold;color:#343c49">171 (1%)</div>
<div class="a" style="left:805.6px;top:2045.8px;width:2px;height:24.5px;border-radius:1px;background:#d49b12"></div>
<div class="a" style="left:812.1px;top:2047.3px;font-size:7.8px;line-height:9px;color:#5d6573">Linux</div>
<div class="a" style="left:812.1px;top:2059.6px;font-size:7.8px;line-height:9px;font-weight:bold;color:#343c49">46 (0%)</div>
<div class="card" style="left:898.7px;top:1847.5px;width:356.5px;height:234.7px"></div>
<div class="ct" style="left:909.4px;top:1858.8px">Applications</div>
<svg style="left:1234.7px;top:1858.5px" width="10.6" height="10.6" viewBox="0 0 12 12"><circle cx="6" cy="6" r="5.1" fill="none" stroke="#3b86e8" stroke-width="1.3"/><rect x="5.4" y="5.2" width="1.2" height="3.4" rx="0.5" fill="#3b86e8"/><circle cx="6" cy="3.6" r="0.75" fill="#3b86e8"/></svg>
<div class="a" style="left:905px;top:1876px;width:335px;height:196px;overflow:hidden"><div style="position:absolute;left:-905px;top:-1876px"><div class="a" style="left:910.7px;top:1878.0px;width:278.4px;height:12.8px;border-radius:0 2.5px 2.5px 0;background:#f0f1f4"></div><div class="a" style="left:910.7px;top:1878.0px;width:75.4px;height:12.8px;border-radius:0 2.5px 2.5px 0;background:linear-gradient(180deg,#8fd6f2,#4cc2f3)"></div><div class="a" style="left:989.9px;top:1880.1px;font-size:7.4px;line-height:9px;color:#6b7280">2168</div><div class="a" style="left:1180px;top:1880.1px;width:48.5px;text-align:right;font-size:7.4px;line-height:9px;color:#9ca3af">65</div><div class="a" style="left:1189px;top:1890.9px;width:40px;height:1px;background:#eef0f2"></div><div class="a" style="left:910.7px;top:1896.7px;width:278.4px;height:12.8px;border-radius:0 2.5px 2.5px 0;background:#f0f1f4"></div><div class="a" style="left:910.7px;top:1896.7px;width:54.8px;height:12.8px;border-radius:0 2.5px 2.5px 0;background:linear-gradient(180deg,#f59468,#ff5c10)"></div><div class="a" style="left:969.3px;top:1898.8px;font-size:7.4px;line-height:9px;color:#6b7280">1571</div><div class="a" style="left:1180px;top:1898.8px;width:48.5px;text-align:right;font-size:7.4px;line-height:9px;color:#9ca3af">60</div><div class="a" style="left:1189px;top:1909.6px;width:40px;height:1px;background:#eef0f2"></div><div class="a" style="left:910.7px;top:1915.4px;width:278.4px;height:12.8px;border-radius:0 2.5px 2.5px 0;background:#f0f1f4"></div><div class="a" style="left:910.7px;top:1915.4px;width:31.1px;height:12.8px;border-radius:0 2.5px 2.5px 0;background:linear-gradient(180deg,#f27cba,#ee3893)"></div><div class="a" style="left:945.6px;top:1917.5px;font-size:7.4px;line-height:9px;color:#6b7280">886</div><div class="a" style="left:1180px;top:1917.5px;width:48.5px;text-align:right;font-size:7.4px;line-height:9px;color:#9ca3af">2</div><div class="a" style="left:1189px;top:1928.3px;width:40px;height:1px;background:#eef0f2"></div><div class="a" style="left:910.7px;top:1934.2px;width:278.4px;height:12.8px;border-radius:0 2.5px 2.5px 0;background:#f0f1f4"></div><div class="a" style="left:910.7px;top:1934.2px;width:28.5px;height:12.8px;border-radius:0 2.5px 2.5px 0;background:linear-gradient(180deg,#84a0da,#5674c5)"></div><div class="a" style="left:943.0px;top:1936.3px;font-size:7.4px;line-height:9px;color:#6b7280">815</div><div class="a" style="left:1180px;top:1936.3px;width:48.5px;text-align:right;font-size:7.4px;line-height:9px;color:#9ca3af">121</div><div class="a" style="left:1189px;top:1947.1px;width:40px;height:1px;background:#eef0f2"></div><div class="a" style="left:910.7px;top:1952.9px;width:278.4px;height:12.8px;border-radius:0 2.5px 2.5px 0;background:#f0f1f4"></div><div class="a" style="left:910.7px;top:1952.9px;width:13.2px;height:12.8px;border-radius:0 2.5px 2.5px 0;background:linear-gradient(180deg,#c2d47e,#a2c038)"></div><div class="a" style="left:927.7px;top:1955.0px;font-size:7.4px;line-height:9px;color:#6b7280">362</div><div class="a" style="left:1180px;top:1955.0px;width:48.5px;text-align:right;font-size:7.4px;line-height:9px;color:#9ca3af">120</div><div class="a" style="left:1189px;top:1965.8px;width:40px;height:1px;background:#eef0f2"></div><div class="a" style="left:910.7px;top:1971.6px;width:278.4px;height:12.8px;border-radius:0 2.5px 2.5px 0;background:#f0f1f4"></div><div class="a" style="left:910.7px;top:1971.6px;width:11.0px;height:12.8px;border-radius:0 2.5px 2.5px 0;background:linear-gradient(180deg,#4f8c4f,#0e690e)"></div><div class="a" style="left:925.5px;top:1973.7px;font-size:7.4px;line-height:9px;color:#6b7280">311</div><div class="a" style="left:1180px;top:1973.7px;width:48.5px;text-align:right;font-size:7.4px;line-height:9px;color:#9ca3af">21</div><div class="a" style="left:1189px;top:1984.5px;width:40px;height:1px;background:#eef0f2"></div><div class="a" style="left:910.7px;top:1990.3px;width:278.4px;height:12.8px;border-radius:0 2.5px 2.5px 0;background:#f0f1f4"></div><div class="a" style="left:910.7px;top:1990.3px;width:11.0px;height:12.8px;border-radius:0 2.5px 2.5px 0;background:linear-gradient(180deg,#6097b6,#1f6c98)"></div><div class="a" style="left:925.5px;top:1992.4px;font-size:7.4px;line-height:9px;color:#6b7280">308</div><div class="a" style="left:1180px;top:1992.4px;width:48.5px;text-align:right;font-size:7.4px;line-height:9px;color:#9ca3af">125</div><div class="a" style="left:1189px;top:2003.2px;width:40px;height:1px;background:#eef0f2"></div><div class="a" style="left:910.7px;top:2009.0px;width:278.4px;height:12.8px;border-radius:0 2.5px 2.5px 0;background:#f0f1f4"></div><div class="a" style="left:910.7px;top:2009.0px;width:10.1px;height:12.8px;border-radius:0 2.5px 2.5px 0;background:linear-gradient(180deg,#68c68c,#1cab57)"></div><div class="a" style="left:924.6px;top:2011.1px;font-size:7.4px;line-height:9px;color:#6b7280">299</div><div class="a" style="left:1180px;top:2011.1px;width:48.5px;text-align:right;font-size:7.4px;line-height:9px;color:#9ca3af">35</div><div class="a" style="left:1189px;top:2021.9px;width:40px;height:1px;background:#eef0f2"></div><div class="a" style="left:910.7px;top:2027.8px;width:278.4px;height:12.8px;border-radius:0 2.5px 2.5px 0;background:#f0f1f4"></div><div class="a" style="left:910.7px;top:2027.8px;width:10.1px;height:12.8px;border-radius:0 2.5px 2.5px 0;background:linear-gradient(180deg,#8d8d8d,#555558)"></div><div class="a" style="left:924.6px;top:2029.9px;font-size:7.4px;line-height:9px;color:#6b7280">285</div><div class="a" style="left:1180px;top:2029.9px;width:48.5px;text-align:right;font-size:7.4px;line-height:9px;color:#9ca3af">12</div><div class="a" style="left:1189px;top:2040.7px;width:40px;height:1px;background:#eef0f2"></div><div class="a" style="left:910.7px;top:2046.5px;width:278.4px;height:12.8px;border-radius:0 2.5px 2.5px 0;background:#f0f1f4"></div><div class="a" style="left:910.7px;top:2046.5px;width:4.4px;height:12.8px;border-radius:0 2.5px 2.5px 0;background:linear-gradient(180deg,#a683da,#7d3cc6)"></div><div class="a" style="left:918.9px;top:2048.6px;font-size:7.4px;line-height:9px;color:#6b7280">122</div><div class="a" style="left:1180px;top:2048.6px;width:48.5px;text-align:right;font-size:7.4px;line-height:9px;color:#9ca3af">9</div><div class="a" style="left:1189px;top:2059.4px;width:40px;height:1px;background:#eef0f2"></div><div class="a" style="left:910.7px;top:2065.2px;width:278.4px;height:12.8px;border-radius:0 2.5px 2.5px 0;background:#f0f1f4"></div><div class="a" style="left:910.7px;top:2065.2px;width:3.9px;height:12.8px;border-radius:0 2.5px 2.5px 0;background:linear-gradient(180deg,#e77585,#dc3350)"></div><div class="a" style="left:918.4px;top:2067.3px;font-size:7.4px;line-height:9px;color:#6b7280">115</div><div class="a" style="left:1180px;top:2067.3px;width:48.5px;text-align:right;font-size:7.4px;line-height:9px;color:#9ca3af">45</div><div class="a" style="left:1189px;top:2078.1px;width:40px;height:1px;background:#eef0f2"></div></div></div>
<div class="a" style="left:1236.4px;top:1876px;width:8px;height:196px;background:#f6f6f7"></div>
<div class="a" style="left:1238.6px;top:1877px;width:4.6px;height:52px;border-radius:2.5px;background:#c3c3c3"></div></body></html>
